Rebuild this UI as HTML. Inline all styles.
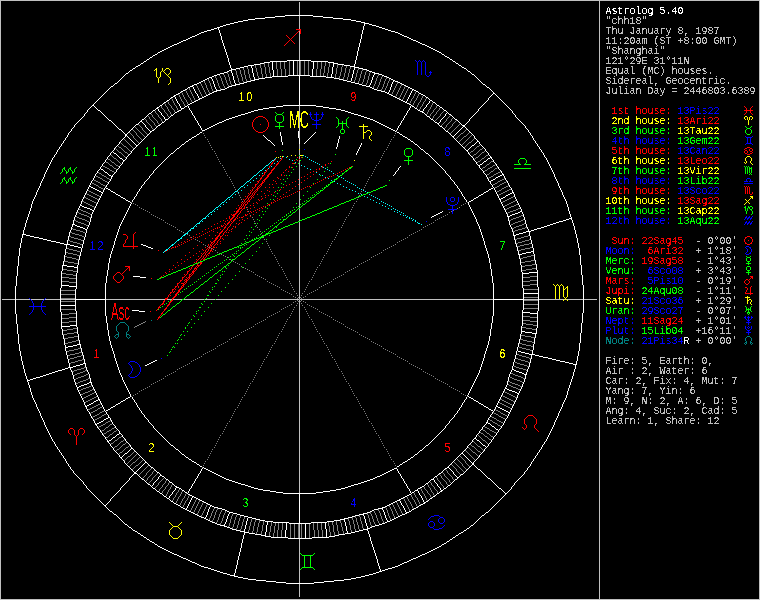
<!DOCTYPE html>
<html lang="en"><head><meta charset="utf-8"><title>Astrolog 5.40 - chh18</title>
<style>
html,body{margin:0;padding:0;background:#000;}
body{width:760px;height:600px;overflow:hidden;}
svg{display:block;}
.px path{fill:none;stroke-width:1;shape-rendering:crispEdges;}
.t{font-family:"Liberation Mono",monospace;font-size:10px;white-space:pre;}
.h{font-family:"Liberation Sans",sans-serif;font-size:12.5px;letter-spacing:2.46px;}
.a{font-family:"Liberation Sans",sans-serif;font-size:23px;text-anchor:middle;}
</style></head><body>
<svg width="760" height="600" viewBox="0 0 760 600">
<rect width="760" height="600" fill="#000"/>
<defs><filter id="bin" x="0" y="0" width="100%" height="100%" filterUnits="userSpaceOnUse" color-interpolation-filters="sRGB"><feComponentTransfer><feFuncA type="discrete" tableValues="0 0 0 0 0 0 0 0 0 1 1 1 1 1 1 1 1 1 1 1"/></feComponentTransfer></filter><filter id="bin2" x="0" y="0" width="100%" height="100%" filterUnits="userSpaceOnUse" color-interpolation-filters="sRGB"><feComponentTransfer><feFuncA type="discrete" tableValues="0 1"/></feComponentTransfer></filter><filter id="bin3" x="0" y="0" width="100%" height="100%" filterUnits="userSpaceOnUse" color-interpolation-filters="sRGB"><feComponentTransfer><feFuncA type="discrete" tableValues="0 0 0 0 0 0 0 0 0 0 0 1 1 1 1 1 1 1 1 1"/></feComponentTransfer></filter></defs>
<g class="px" transform="translate(0,0.5)">
<path stroke="#ffffff" d="M0 0m285 15h28m-38 1h10m28 0h10m-58 1h10m48 0h10m-78 1h10m68 0h10m-95 1h7m88 0h8m-108 1h5m103 0h5m-118 1h5m113 0h5m-127 1h4m123 0h4m-135 1h4m130 0h5m-143 1h4m134 0h1m4 0h3m-149 1h3m138 0h1m7 0h4m-156 1h3m140 0h1m12 0h3m-162 1h3m143 0h1m15 0h3m-168 1h3m1 0h1m144 0h1m18 0h3m-174 1h3m4 0h1m144 0h1m21 0h3m-181 1h4m8 0h1m142 0h1m25 0h3m-187 1h3m12 0h1m142 0h1m28 0h4m-194 1h3m15 0h1m142 0h1m32 0h3m-199 1h2m19 0h1m141 0h1m35 0h2m-203 1h2m21 0h1m140 0h1m38 0h2m-207 1h2m23 0h1m140 0h1m40 0h2m-212 1h3m26 0h1m139 0h1m42 0h3m-217 1h2m29 0h1m139 0h1m45 0h2m-221 1h2m31 0h1m139 0h1m47 0h2m-225 1h2m33 0h1m138 0h1m50 0h2m-230 1h3m36 0h1m137 0h1m52 0h3m-235 1h2m39 0h1m137 0h1m55 0h2m-239 1h2m41 0h1m137 0h1m57 0h2m-243 1h2m44 0h1m135 0h1m60 0h2m-248 1h3m46 0h1m135 0h1m62 0h3m-253 1h2m49 0h1m135 0h1m65 0h2m-257 1h2m52 0h1m134 0h1m67 0h2m-261 1h2m54 0h1m133 0h1m70 0h2m-265 1h2m56 0h1m133 0h1m72 0h2m-269 1h2m59 0h1m132 0h1m74 0h2m-273 1h2m61 0h1m132 0h1m76 0h2m-277 1h2m63 0h1m131 0h1m79 0h2m-281 1h2m66 0h1m130 0h1m81 0h2m-284 1h1m68 0h1m130 0h1m83 0h1m-287 1h2m69 0h1m130 0h1m84 0h2m-291 1h2m72 0h1m129 0h1m86 0h1m-293 1h1m74 0h1m128 0h1m88 0h2m-297 1h2m75 0h1m128 0h1m90 0h2m-300 1h1m78 0h1m127 0h1m92 0h1m-303 1h2m79 0h1m127 0h1m93 0h2m-306 1h1m81 0h1m58 0h24m44 0h1m96 0h1m-309 1h2m82 0h1m41 0h17m6 0h1m17 0h17m27 0h1m97 0h2m-312 1h1m85 0h1m34 0h6m2 0h1m20 0h1m19 0h1m14 0h6m21 0h1m99 0h1m-315 1h2m86 0h1m30 0h4m8 0h1m20 0h1m19 0h1m19 0h5m17 0h1m100 0h2m-318 1h1m88 0h1m24 0h6m12 0h1m20 0h1m19 0h1m19 0h1m4 0h6m10 0h1m103 0h1m-321 1h2m90 0h1m17 0h6m18 0h1m20 0h1m19 0h1m19 0h1m10 0h6m4 0h1m104 0h2m-325 1h2m92 0h1m13 0h4m3 0h1m20 0h1m20 0h1m19 0h1m19 0h1m16 0h5m106 0h1m-327 1h1m94 0h1m9 0h4m7 0h1m20 0h1m20 0h1m19 0h1m18 0h1m21 0h5m103 0h2m-331 1h2m96 0h1m4 0h4m12 0h1m19 0h1m20 0h1m19 0h1m18 0h1m21 0h1m4 0h4m101 0h2m-334 1h1m98 0h5m16 0h1m19 0h1m20 0h1m18 0h1m19 0h1m21 0h1m8 0h4m99 0h1m-337 1h2m97 0h3m20 0h1m20 0h1m19 0h1m18 0h1m19 0h1m20 0h1m13 0h2m98 0h1m-339 1h1m97 0h2m2 0h1m20 0h1m20 0h1m19 0h1m18 0h1m19 0h1m20 0h1m15 0h3m96 0h2m-342 1h1m95 0h3m4 0h1m20 0h1m20 0h1m19 0h1m18 0h1m19 0h1m20 0h1m18 0h3m95 0h1m-345 1h2m92 0h4m8 0h1m20 0h1m19 0h1m19 0h1m18 0h1m19 0h1m20 0h1m20 0h5m92 0h1m-347 1h1m91 0h3m12 0h1m20 0h1m19 0h1m19 0h1m18 0h1m18 0h1m20 0h1m21 0h1m4 0h3m90 0h2m-350 1h1m89 0h3m15 0h1m20 0h1m19 0h1m14 0h22m2 0h1m18 0h1m20 0h1m20 0h1m8 0h2m90 0h1m-352 1h1m88 0h2m19 0h1m19 0h1m18 0h16m11 0h1m10 0h16m5 0h1m20 0h1m20 0h1m10 0h3m88 0h1m-354 1h1m86 0h3m21 0h1m20 0h1m10 0h7m27 0h1m26 0h8m18 0h1m19 0h1m14 0h2m87 0h1m-356 1h1m85 0h2m2 0h1m21 0h1m20 0h1m4 0h6m34 0h1m34 0h5m12 0h1m20 0h1m16 0h2m86 0h1m-358 1h1m84 0h2m5 0h1m20 0h1m20 0h5m40 0h1m39 0h4m8 0h1m20 0h1m18 0h2m85 0h1m-360 1h1m83 0h2m7 0h1m21 0h1m16 0h4m44 0h1m43 0h4m4 0h1m19 0h1m21 0h2m84 0h1m-362 1h1m82 0h2m10 0h1m20 0h1m12 0h4m48 0h1m47 0h4m20 0h1m21 0h1m1 0h3m82 0h1m-364 1h1m81 0h2m12 0h1m20 0h1m9 0h3m52 0h1m51 0h4m16 0h1m20 0h1m5 0h2m81 0h1m-367 1h2m80 0h2m14 0h1m21 0h1m4 0h4m55 0h1m55 0h4m11 0h1m21 0h1m7 0h2m80 0h1m-369 1h1m79 0h3m17 0h1m20 0h5m59 0h1m59 0h3m8 0h1m20 0h1m10 0h2m79 0h2m-372 1h1m78 0h2m20 0h1m17 0h4m63 0h1m62 0h4m3 0h1m21 0h1m12 0h2m79 0h1m-375 1h2m77 0h3m21 0h1m14 0h3m67 0h1m66 0h4m21 0h1m14 0h2m78 0h1m-377 1h1m77 0h2m3 0h1m21 0h1m11 0h2m70 0h1m70 0h2m18 0h1m17 0h2m77 0h2m-380 1h1m77 0h1m5 0h1m21 0h1m9 0h2m72 0h1m72 0h2m16 0h1m19 0h2m77 0h1m-382 1h1m76 0h2m7 0h1m21 0h1m4 0h4m74 0h1m74 0h3m13 0h1m21 0h2m76 0h1m-384 1h1m75 0h2m9 0h1m21 0h5m78 0h1m77 0h4m8 0h1m22 0h1m1 0h2m75 0h1m-386 1h1m74 0h2m12 0h1m18 0h3m82 0h1m81 0h4m4 0h1m21 0h1m4 0h2m74 0h1m-388 1h1m74 0h1m14 0h1m16 0h2m85 0h1m85 0h2m1 0h1m22 0h1m6 0h1m74 0h1m-390 1h1m73 0h2m16 0h1m13 0h2m87 0h1m87 0h2m21 0h1m8 0h2m72 0h2m-392 1h1m72 0h2m19 0h1m10 0h2m89 0h1m89 0h2m19 0h1m10 0h2m69 0h1m2 0h1m-394 1h1m71 0h2m21 0h1m8 0h2m91 0h1m91 0h2m16 0h1m13 0h2m66 0h1m4 0h1m-396 1h1m71 0h2m23 0h1m5 0h2m93 0h1m93 0h2m14 0h1m15 0h1m64 0h1m6 0h1m-398 1h1m70 0h2m2 0h1m22 0h1m3 0h2m95 0h1m95 0h2m11 0h1m17 0h2m61 0h1m8 0h1m-400 1h1m70 0h1m4 0h1m23 0h3m97 0h1m97 0h2m9 0h1m19 0h1m59 0h1m10 0h1m-402 1h1m70 0h1m6 0h1m21 0h2m99 0h1m99 0h2m6 0h1m21 0h1m58 0h1m11 0h1m-404 1h1m69 0h2m7 0h1m19 0h2m101 0h1m101 0h2m4 0h1m22 0h2m55 0h1m13 0h1m-406 1h1m69 0h1m10 0h1m16 0h2m103 0h1m103 0h2m1 0h1m22 0h1m2 0h1m53 0h1m15 0h1m-408 1h1m68 0h2m11 0h1m14 0h2m105 0h1m105 0h2m22 0h1m3 0h2m50 0h1m17 0h1m-410 1h1m68 0h1m14 0h1m11 0h2m107 0h1m107 0h2m19 0h1m6 0h1m48 0h1m19 0h1m-412 1h1m68 0h1m16 0h1m8 0h2m109 0h1m109 0h2m16 0h1m8 0h1m46 0h1m21 0h1m-414 1h2m66 0h2m17 0h1m7 0h1m95 0h33m95 0h1m14 0h1m10 0h2m43 0h1m23 0h1m-416 1h1m2 0h1m64 0h1m20 0h1m4 0h2m1 0h1m87 0h7m33 0h7m87 0h1m1 0h2m12 0h1m12 0h1m41 0h1m25 0h1m-418 1h1m4 0h1m61 0h2m21 0h1m3 0h1m3 0h1m80 0h7m47 0h6m81 0h1m3 0h1m10 0h1m14 0h2m38 0h1m27 0h1m-420 1h1m6 0h1m59 0h2m23 0h3m5 0h1m73 0h6m60 0h7m73 0h1m5 0h2m7 0h1m17 0h1m36 0h1m29 0h1m-422 1h1m8 0h1m57 0h1m2 0h1m22 0h1m7 0h1m68 0h5m73 0h5m68 0h1m7 0h1m5 0h1m19 0h1m34 0h1m31 0h1m-424 1h1m10 0h2m53 0h2m3 0h1m20 0h2m9 0h1m63 0h4m83 0h4m63 0h1m9 0h2m3 0h1m20 0h2m32 0h1m32 0h1m-425 1h1m12 0h1m51 0h1m6 0h1m17 0h2m12 0h1m59 0h3m91 0h3m59 0h1m12 0h3m23 0h1m30 0h1m34 0h1m-427 1h1m14 0h1m49 0h1m8 0h1m14 0h2m14 0h1m56 0h3m97 0h3m56 0h1m14 0h2m23 0h1m28 0h1m35 0h1m-428 1h1m16 0h1m46 0h2m10 0h1m12 0h1m17 0h1m52 0h3m103 0h3m52 0h1m17 0h1m21 0h1m1 0h1m26 0h1m37 0h1m-430 1h1m18 0h1m44 0h1m12 0h1m11 0h1m18 0h1m48 0h4m109 0h4m48 0h1m18 0h1m19 0h1m3 0h2m23 0h1m39 0h1m-431 1h1m19 0h1m42 0h1m14 0h1m8 0h2m20 0h1m44 0h3m117 0h3m44 0h1m20 0h1m18 0h1m5 0h1m21 0h1m41 0h1m-433 1h1m21 0h1m40 0h1m16 0h1m6 0h1m23 0h1m40 0h3m123 0h3m40 0h1m22 0h2m15 0h1m7 0h1m19 0h1m42 0h1m-434 1h1m23 0h1m38 0h1m18 0h1m4 0h1m24 0h1m37 0h3m129 0h3m37 0h1m24 0h1m13 0h1m9 0h1m17 0h1m44 0h1m-436 1h1m25 0h1m36 0h1m19 0h1m3 0h1m26 0h1m33 0h3m135 0h3m33 0h1m26 0h1m11 0h1m11 0h1m15 0h1m46 0h1m-438 1h1m27 0h1m33 0h2m21 0h3m27 0h1m30 0h3m141 0h3m30 0h1m27 0h2m8 0h1m13 0h2m12 0h1m48 0h1m-440 1h1m29 0h2m30 0h1m23 0h1m30 0h1m27 0h2m147 0h2m27 0h1m30 0h1m6 0h1m16 0h1m11 0h1m49 0h1m-442 1h1m32 0h1m28 0h2m22 0h1m32 0h1m24 0h2m151 0h2m24 0h1m32 0h1m5 0h1m17 0h1m9 0h1m51 0h1m-444 1h1m34 0h1m26 0h1m2 0h1m19 0h2m33 0h1m21 0h3m155 0h2m22 0h1m33 0h2m2 0h1m19 0h1m7 0h1m53 0h1m-446 1h1m36 0h1m24 0h1m4 0h1m17 0h1m36 0h1m18 0h2m160 0h2m19 0h1m36 0h2m21 0h1m5 0h1m55 0h1m-448 1h1m38 0h1m21 0h2m6 0h1m15 0h1m37 0h1m16 0h2m164 0h2m17 0h1m37 0h1m22 0h1m3 0h1m57 0h1m-450 1h1m40 0h1m19 0h1m9 0h1m12 0h2m39 0h1m13 0h2m168 0h2m14 0h1m39 0h1m22 0h3m59 0h1m-451 1h1m41 0h1m17 0h1m10 0h1m11 0h1m42 0h1m10 0h2m172 0h2m11 0h1m41 0h2m21 0h2m60 0h1m-453 1h1m43 0h1m15 0h1m12 0h1m9 0h1m43 0h1m8 0h2m176 0h2m9 0h1m43 0h1m19 0h1m2 0h1m59 0h1m-454 1h1m45 0h1m13 0h1m14 0h1m7 0h1m45 0h1m5 0h2m180 0h2m6 0h1m45 0h1m17 0h1m4 0h1m59 0h1m-456 1h1m47 0h2m10 0h1m16 0h1m5 0h1m46 0h1m3 0h2m184 0h2m4 0h1m46 0h1m15 0h1m6 0h1m59 0h1m-457 1h1m49 0h1m8 0h1m18 0h1m2 0h2m48 0h3m188 0h2m1 0h1m48 0h1m13 0h1m8 0h1m59 0h1m-459 1h1m51 0h1m6 0h1m20 0h2m146 0h1m96 0h1m50 0h2m10 0h1m10 0h1m58 0h1m-460 1h1m53 0h1m4 0h1m21 0h1m49 0h2m78 0h1m17 0h1m16 0h1m81 0h2m49 0h1m8 0h1m12 0h1m58 0h1m-462 1h1m55 0h1m2 0h1m21 0h1m49 0h1m80 0h1m17 0h1m15 0h1m84 0h1m49 0h1m6 0h1m14 0h1m58 0h1m-463 1h1m56 0h2m21 0h1m48 0h2m81 0h1m17 0h1m14 0h1m86 0h2m48 0h1m4 0h1m16 0h1m57 0h1m-464 1h1m57 0h2m20 0h1m48 0h1m66 0h1m16 0h1m17 0h1m13 0h1m89 0h1m48 0h1m2 0h1m18 0h1m57 0h1m-465 1h1m57 0h1m1 0h1m18 0h1m47 0h2m68 0h1m16 0h1m16 0h1m12 0h1m27 0h1m63 0h2m47 0h2m20 0h1m57 0h1m-467 1h1m57 0h1m3 0h1m16 0h1m46 0h2m71 0h1m15 0h1m16 0h1m11 0h1m28 0h1m65 0h2m46 0h1m20 0h1m57 0h1m-468 1h1m57 0h1m5 0h1m14 0h1m46 0h1m74 0h1m14 0h1m17 0h1m9 0h1m29 0h1m67 0h1m46 0h1m20 0h1m57 0h1m-469 1h1m56 0h1m7 0h1m12 0h1m45 0h2m76 0h1m13 0h1m17 0h1m8 0h1m29 0h1m69 0h2m45 0h1m20 0h1m56 0h1m-470 1h1m56 0h1m9 0h1m10 0h1m45 0h1m79 0h2m11 0h1m17 0h1m7 0h1m30 0h1m71 0h1m45 0h1m20 0h1m56 0h1m-472 1h1m56 0h1m11 0h1m8 0h1m44 0h2m82 0h1m10 0h1m17 0h1m6 0h1m31 0h1m72 0h2m44 0h1m19 0h2m56 0h1m-473 1h1m55 0h1m13 0h1m6 0h1m44 0h1m85 0h1m10 0h1m16 0h1m5 0h1m32 0h1m74 0h1m44 0h1m17 0h1m2 0h1m55 0h1m-474 1h1m56 0h1m14 0h1m4 0h1m44 0h1m87 0h1m9 0h1m16 0h1m4 0h1m32 0h1m23 0h1m52 0h1m44 0h1m15 0h1m3 0h1m56 0h1m-476 1h1m56 0h1m16 0h1m2 0h1m43 0h2m89 0h1m8 0h1m54 0h1m23 0h1m53 0h2m43 0h1m13 0h1m5 0h1m56 0h1m-477 1h1m55 0h1m18 0h2m43 0h1m92 0h1m62 0h1m22 0h1m56 0h1m43 0h1m10 0h2m7 0h1m55 0h1m-478 1h1m55 0h1m19 0h1m43 0h1m156 0h1m22 0h1m57 0h1m43 0h1m8 0h1m10 0h1m55 0h1m-480 1h1m55 0h1m19 0h1m43 0h1m156 0h1m22 0h1m59 0h1m43 0h1m6 0h1m12 0h1m55 0h1m-481 1h1m54 0h1m19 0h1m42 0h2m157 0h1m22 0h1m60 0h1m43 0h1m4 0h1m14 0h1m54 0h1m-482 1h1m55 0h1m18 0h1m42 0h1m181 0h1m62 0h2m42 0h1m2 0h1m16 0h1m54 0h1m-484 1h1m55 0h1m18 0h1m42 0h1m182 0h1m64 0h1m42 0h2m17 0h1m55 0h1m-485 1h1m54 0h1m18 0h1m42 0h1m182 0h1m66 0h1m42 0h1m18 0h1m54 0h1m-486 1h1m54 0h1m1 0h1m17 0h1m41 0h1m183 0h1m67 0h1m42 0h1m18 0h1m54 0h1m-487 1h1m53 0h1m3 0h2m14 0h1m40 0h2m183 0h1m69 0h2m40 0h1m19 0h1m54 0h1m-489 1h1m54 0h1m5 0h1m12 0h1m40 0h1m185 0h1m71 0h1m40 0h1m18 0h1m54 0h1m-490 1h1m54 0h1m7 0h1m10 0h1m40 0h1m259 0h1m40 0h1m18 0h1m54 0h1m-491 1h1m53 0h1m9 0h1m8 0h1m40 0h1m261 0h1m40 0h1m18 0h1m53 0h1m-492 1h1m53 0h1m11 0h1m6 0h1m40 0h1m263 0h1m40 0h1m17 0h2m53 0h1m-494 1h1m54 0h1m12 0h2m4 0h1m39 0h1m265 0h1m40 0h1m14 0h2m1 0h1m54 0h1m-495 1h1m53 0h1m15 0h1m2 0h1m39 0h1m267 0h1m39 0h1m13 0h1m4 0h1m53 0h1m-496 1h1m53 0h1m17 0h2m39 0h1m269 0h1m39 0h1m11 0h1m6 0h1m53 0h1m-497 1h1m53 0h1m17 0h1m39 0h1m271 0h1m39 0h1m8 0h2m7 0h1m53 0h1m-498 1h1m53 0h1m17 0h1m39 0h1m273 0h1m39 0h1m6 0h1m10 0h1m53 0h1m-499 1h1m52 0h1m18 0h1m38 0h1m275 0h1m38 0h1m5 0h1m12 0h1m52 0h1m-500 1h1m52 0h1m18 0h1m38 0h1m277 0h1m38 0h1m2 0h2m14 0h1m52 0h1m-501 1h1m52 0h1m17 0h1m38 0h1m279 0h1m38 0h2m16 0h1m52 0h1m-502 1h1m52 0h1m17 0h1m38 0h1m241 0h1m39 0h1m38 0h1m17 0h1m52 0h1m-503 1h1m51 0h1m18 0h1m37 0h1m241 0h1m41 0h1m37 0h1m18 0h1m51 0h1m-504 1h1m52 0h1m17 0h1m37 0h1m241 0h1m43 0h1m37 0h1m17 0h1m52 0h1m-505 1h1m51 0h1m1 0h2m14 0h1m37 0h1m242 0h1m44 0h1m37 0h1m17 0h1m51 0h1m-506 1h1m51 0h1m4 0h1m12 0h1m37 0h1m242 0h1m46 0h1m37 0h1m17 0h1m51 0h1m-507 1h1m50 0h1m6 0h1m11 0h1m36 0h1m242 0h1m48 0h1m37 0h1m17 0h1m50 0h1m-508 1h1m51 0h1m7 0h2m8 0h1m37 0h1m241 0h1m49 0h1m37 0h1m17 0h1m51 0h1m-509 1h1m50 0h1m10 0h1m6 0h1m37 0h1m242 0h1m50 0h1m37 0h1m17 0h1m50 0h1m-510 1h1m50 0h1m12 0h1m4 0h1m37 0h1m242 0h1m52 0h1m37 0h1m16 0h2m50 0h1m-511 1h1m50 0h1m13 0h2m1 0h1m37 0h1m242 0h1m54 0h1m37 0h1m13 0h2m1 0h1m50 0h1m-511 1h1m49 0h1m16 0h2m36 0h1m299 0h1m36 0h1m11 0h2m4 0h1m49 0h1m-512 1h1m50 0h1m16 0h1m37 0h1m300 0h1m36 0h1m8 0h2m6 0h1m50 0h1m-513 1h1m49 0h1m17 0h1m36 0h1m301 0h1m36 0h1m7 0h1m9 0h1m49 0h1m-514 1h1m50 0h1m16 0h1m36 0h1m303 0h1m36 0h1m4 0h2m10 0h1m50 0h1m-515 1h1m49 0h1m17 0h1m35 0h1m305 0h1m35 0h1m2 0h2m13 0h1m49 0h1m-516 1h1m49 0h1m17 0h1m35 0h1m307 0h1m35 0h2m16 0h1m49 0h1m-517 1h1m49 0h1m16 0h1m35 0h1m309 0h1m35 0h1m16 0h1m49 0h1m-518 1h1m49 0h1m17 0h1m35 0h1m309 0h1m35 0h1m17 0h1m49 0h1m-519 1h1m49 0h1m16 0h1m35 0h1m311 0h1m35 0h1m16 0h1m49 0h1m-519 1h1m48 0h1m16 0h1m35 0h1m313 0h1m35 0h1m16 0h1m48 0h1m-520 1h1m49 0h2m15 0h1m34 0h1m315 0h1m34 0h1m16 0h1m49 0h1m-521 1h1m48 0h1m2 0h2m12 0h1m35 0h1m315 0h1m35 0h1m16 0h1m48 0h1m-522 1h1m49 0h1m4 0h2m9 0h1m1 0h2m32 0h1m317 0h1m32 0h2m1 0h1m16 0h1m48 0h1m-523 1h1m48 0h1m7 0h2m7 0h1m3 0h2m29 0h1m319 0h1m29 0h2m3 0h1m16 0h1m48 0h1m-524 1h1m49 0h1m9 0h2m4 0h1m6 0h1m28 0h1m319 0h1m28 0h1m6 0h1m16 0h1m48 0h1m-525 1h1m48 0h1m12 0h2m2 0h1m7 0h2m25 0h1m321 0h1m25 0h2m7 0h1m16 0h1m48 0h1m-526 1h1m49 0h1m14 0h2m10 0h2m22 0h1m323 0h1m22 0h2m10 0h1m15 0h2m48 0h1m-527 1h1m48 0h1m16 0h1m12 0h1m21 0h1m323 0h1m21 0h1m12 0h1m13 0h2m1 0h1m48 0h1m-527 1h1m48 0h1m15 0h1m14 0h2m18 0h1m325 0h1m18 0h2m14 0h1m10 0h2m4 0h1m47 0h1m-528 1h1m48 0h1m16 0h1m16 0h2m16 0h1m325 0h1m16 0h2m16 0h1m8 0h2m6 0h1m48 0h1m-529 1h1m48 0h1m15 0h1m19 0h1m14 0h1m327 0h1m14 0h1m19 0h1m6 0h1m8 0h1m48 0h1m-530 1h1m48 0h1m16 0h1m20 0h2m11 0h1m329 0h1m11 0h2m20 0h1m4 0h2m10 0h1m48 0h1m-531 1h1m48 0h1m15 0h1m23 0h2m9 0h1m329 0h1m9 0h2m23 0h1m1 0h2m12 0h1m48 0h1m-532 1h1m48 0h1m16 0h1m25 0h1m7 0h1m331 0h1m7 0h1m25 0h2m15 0h1m48 0h1m-533 1h1m48 0h1m15 0h1m27 0h2m4 0h1m333 0h1m4 0h2m27 0h1m15 0h1m48 0h1m-534 1h1m48 0h1m16 0h1m29 0h2m2 0h1m333 0h1m2 0h2m29 0h1m16 0h1m48 0h1m-535 1h1m48 0h1m15 0h1m32 0h1m337 0h1m32 0h1m15 0h1m48 0h1m-535 1h1m48 0h1m15 0h1m33 0h1m336 0h1m32 0h1m16 0h1m47 0h1m-536 1h1m48 0h1m15 0h1m33 0h1m337 0h1m33 0h1m15 0h1m48 0h1m-537 1h1m48 0h2m14 0h1m33 0h1m338 0h1m32 0h1m16 0h1m47 0h1m-537 1h1m47 0h1m2 0h2m11 0h1m33 0h1m339 0h1m33 0h1m15 0h1m47 0h1m-537 1h1m47 0h1m4 0h3m8 0h1m33 0h1m340 0h1m32 0h1m16 0h1m47 0h1m-539 1h1m47 0h1m8 0h3m4 0h1m33 0h1m341 0h1m33 0h1m15 0h1m47 0h1m-539 1h1m47 0h1m11 0h2m2 0h1m33 0h1m342 0h1m32 0h1m16 0h1m46 0h1m-539 1h1m46 0h1m14 0h2m33 0h1m343 0h1m33 0h1m15 0h1m46 0h1m-540 1h1m47 0h1m15 0h1m33 0h1m314 0h1m29 0h1m32 0h1m14 0h2m47 0h1m-541 1h1m46 0h1m15 0h1m33 0h1m313 0h2m30 0h1m33 0h1m11 0h2m2 0h1m46 0h1m-541 1h1m46 0h1m15 0h1m33 0h1m311 0h2m33 0h1m32 0h1m8 0h3m4 0h1m46 0h1m-542 1h1m47 0h1m14 0h1m33 0h1m310 0h2m35 0h1m33 0h1m4 0h3m8 0h1m46 0h1m-543 1h1m46 0h1m15 0h1m33 0h1m308 0h2m38 0h1m32 0h1m2 0h2m11 0h1m46 0h1m-543 1h1m46 0h1m15 0h1m32 0h1m307 0h2m40 0h1m32 0h3m13 0h1m46 0h1m-544 1h1m46 0h1m16 0h1m32 0h1m306 0h1m43 0h1m32 0h1m15 0h1m46 0h1m-545 1h1m46 0h1m15 0h1m32 0h1m351 0h1m32 0h1m15 0h1m44 0h3m-545 1h1m46 0h1m15 0h1m32 0h1m352 0h1m31 0h1m15 0h1m41 0h3m2 0h1m-546 1h1m46 0h1m16 0h1m31 0h1m353 0h1m31 0h1m16 0h1m37 0h3m6 0h1m-547 1h1m46 0h1m16 0h1m31 0h1m353 0h1m32 0h1m15 0h1m33 0h4m9 0h1m-547 1h1m46 0h1m15 0h1m31 0h1m355 0h1m31 0h1m15 0h1m30 0h3m13 0h1m-548 1h1m47 0h1m15 0h1m31 0h1m355 0h1m31 0h1m15 0h1m27 0h3m17 0h1m-549 1h1m46 0h3m14 0h1m30 0h1m357 0h1m30 0h1m16 0h1m23 0h3m20 0h1m-549 1h1m46 0h1m2 0h2m11 0h1m31 0h1m357 0h1m31 0h1m15 0h1m20 0h3m23 0h1m-549 1h1m46 0h1m4 0h3m8 0h1m30 0h1m359 0h1m30 0h1m15 0h1m17 0h3m27 0h1m-551 1h1m46 0h1m8 0h3m4 0h1m31 0h1m359 0h1m31 0h1m15 0h1m13 0h3m30 0h1m-551 1h1m46 0h1m11 0h2m2 0h1m31 0h1m359 0h1m31 0h1m15 0h1m9 0h4m33 0h1m-551 1h1m46 0h1m13 0h2m31 0h1m361 0h1m31 0h1m15 0h1m5 0h3m37 0h1m-552 1h1m46 0h1m15 0h1m31 0h1m361 0h1m31 0h1m15 0h1m2 0h3m41 0h1m-553 1h1m46 0h1m15 0h1m31 0h1m361 0h1m31 0h1m13 0h5m44 0h1m-553 1h1m45 0h1m16 0h1m30 0h1m363 0h1m31 0h1m9 0h3m3 0h1m45 0h1m-553 1h1m45 0h1m15 0h1m31 0h1m363 0h1m31 0h1m5 0h4m6 0h1m45 0h1m-554 1h4m43 0h1m15 0h1m31 0h1m363 0h1m31 0h1m2 0h3m10 0h1m46 0h1m-555 1h1m3 0h4m39 0h1m15 0h1m30 0h1m365 0h1m30 0h3m13 0h1m46 0h1m-555 1h1m7 0h4m34 0h1m16 0h1m30 0h1m365 0h1m31 0h1m15 0h1m45 0h1m-555 1h1m11 0h5m29 0h1m15 0h1m31 0h1m365 0h1m31 0h1m15 0h1m45 0h1m-556 1h1m17 0h4m25 0h1m15 0h1m30 0h1m367 0h1m30 0h1m15 0h1m46 0h1m-557 1h1m21 0h4m21 0h1m15 0h1m30 0h1m367 0h1m30 0h1m15 0h1m46 0h1m-557 1h1m25 0h4m16 0h1m15 0h1m31 0h1m367 0h1m31 0h1m15 0h1m45 0h1m-557 1h1m29 0h5m11 0h1m15 0h1m30 0h1m369 0h1m30 0h1m15 0h1m45 0h1m-557 1h1m34 0h4m7 0h1m15 0h1m30 0h1m369 0h1m30 0h1m15 0h1m45 0h1m-558 1h1m39 0h4m3 0h1m15 0h1m30 0h1m369 0h1m30 0h1m15 0h1m46 0h1m-559 1h1m43 0h6m12 0h1m31 0h1m26 0h2m341 0h1m31 0h1m15 0h1m45 0h1m-559 1h1m45 0h1m3 0h4m8 0h1m30 0h1m29 0h3m339 0h1m30 0h1m15 0h1m45 0h1m-559 1h1m45 0h1m7 0h4m4 0h1m30 0h1m32 0h2m337 0h1m30 0h1m15 0h1m45 0h1m-559 1h1m45 0h1m11 0h3m1 0h1m30 0h1m34 0h3m334 0h1m31 0h1m14 0h1m45 0h1m-560 1h1m46 0h1m14 0h1m30 0h1m38 0h2m333 0h1m30 0h1m15 0h1m45 0h1m-561 1h1m45 0h1m15 0h1m30 0h1m373 0h1m30 0h1m15 0h1m45 0h1m-561 1h1m45 0h1m15 0h1m30 0h1m373 0h1m30 0h1m15 0h1m45 0h1m-561 1h1m45 0h1m15 0h1m29 0h1m375 0h1m30 0h1m12 0h3m45 0h1m-561 1h1m45 0h1m14 0h1m30 0h1m375 0h1m30 0h1m7 0h5m2 0h1m45 0h1m-561 1h1m45 0h1m14 0h1m30 0h1m375 0h1m30 0h1m3 0h4m7 0h1m45 0h1m-561 1h1m45 0h1m14 0h1m29 0h1m377 0h1m29 0h4m12 0h1m44 0h1m-561 1h1m44 0h1m15 0h1m29 0h1m377 0h1m30 0h1m14 0h1m45 0h1m-563 1h1m45 0h1m14 0h1m30 0h1m377 0h1m30 0h1m14 0h1m45 0h1m-563 1h1m45 0h1m14 0h1m30 0h1m377 0h1m30 0h1m14 0h1m45 0h1m-563 1h1m45 0h1m14 0h1m29 0h1m379 0h1m29 0h1m14 0h1m45 0h1m-563 1h1m45 0h1m14 0h1m29 0h1m379 0h1m30 0h1m13 0h1m45 0h1m-563 1h1m45 0h1m13 0h1m30 0h1m379 0h1m30 0h1m14 0h1m44 0h1m-563 1h1m44 0h1m14 0h1m30 0h1m379 0h1m30 0h1m14 0h1m44 0h1m-563 1h1m44 0h1m14 0h1m30 0h1m379 0h1m30 0h1m14 0h1m44 0h1m-563 1h1m44 0h1m14 0h1m29 0h1m381 0h1m29 0h1m14 0h1m44 0h1m-563 1h1m44 0h1m14 0h1m29 0h1m381 0h1m29 0h1m15 0h1m43 0h1m-563 1h1m43 0h5m10 0h1m30 0h1m381 0h1m30 0h1m14 0h1m44 0h1m-565 1h1m44 0h1m4 0h7m3 0h1m30 0h1m381 0h1m30 0h1m14 0h1m44 0h1m-565 1h1m44 0h1m11 0h4m30 0h1m381 0h1m30 0h1m14 0h1m44 0h1m-565 1h1m44 0h1m14 0h1m30 0h1m381 0h1m30 0h1m14 0h1m44 0h1m-565 1h1m44 0h1m14 0h1m30 0h1m382 0h1m29 0h1m14 0h1m44 0h1m-565 1h1m44 0h1m14 0h1m29 0h1m383 0h1m29 0h1m15 0h1m43 0h1m-565 1h1m43 0h1m15 0h1m29 0h1m383 0h1m29 0h1m15 0h1m43 0h1m-565 1h1m43 0h1m15 0h1m29 0h1m383 0h1m30 0h1m6 0h9m43 0h1m-565 1h1m43 0h1m14 0h1m30 0h1m383 0h1m30 0h7m8 0h1m43 0h1m-565 1h1m43 0h1m14 0h1m30 0h1m383 0h1m30 0h1m14 0h1m43 0h1m-565 1h1m43 0h1m14 0h1m30 0h1m383 0h1m30 0h1m14 0h1m44 0h1m-567 1h1m44 0h1m14 0h1m29 0h1m26 0h7m352 0h1m29 0h1m14 0h1m44 0h1m-567 1h1m44 0h1m14 0h1m29 0h1m33 0h6m346 0h1m29 0h1m14 0h1m44 0h1m-567 1h1m44 0h1m14 0h1m29 0h1m385 0h1m29 0h1m14 0h1m44 0h1m-567 1h1m44 0h1m14 0h1m29 0h1m385 0h1m29 0h1m14 0h1m44 0h1m-567 1h1m44 0h1m14 0h1m29 0h1m385 0h1m29 0h1m14 0h1m44 0h1m-567 1h1m44 0h1m14 0h1m29 0h1m385 0h1m29 0h1m14 0h1m44 0h1m-567 1h1m44 0h1m14 0h1m29 0h1m385 0h1m29 0h1m14 0h1m44 0h1m-567 1h1m44 0h1m14 0h1m28 0h1m387 0h1m28 0h1m14 0h1m44 0h1m-567 1h1m44 0h1m14 0h1m28 0h1m387 0h1m28 0h1m14 0h1m44 0h1m-567 1h1m44 0h8m7 0h1m28 0h1m387 0h1m28 0h1m14 0h1m45 0h1m-569 1h1m45 0h1m7 0h8m28 0h1m387 0h1m28 0h1m14 0h1m45 0h1m-569 1h1m45 0h1m14 0h1m28 0h1m387 0h1m28 0h1m15 0h1m44 0h1m-569 1h1m44 0h1m15 0h1m28 0h1m387 0h1m29 0h1m14 0h1m44 0h1m-569 1h1m44 0h1m14 0h1m29 0h1m387 0h1m29 0h1m14 0h1m44 0h1m-569 1h1m44 0h1m14 0h1m29 0h1m387 0h1m29 0h1m14 0h1m44 0h1m-569 1h1m44 0h1m14 0h1m29 0h1m387 0h1m29 0h1m14 0h1m44 0h1m-569 1h1m44 0h1m14 0h1m29 0h1m387 0h1m29 0h1m14 0h1m44 0h1m-569 1h1m44 0h1m14 0h1m29 0h1m387 0h1m29 0h16m44 0h1m-569 1h1m44 0h1m14 0h1m29 0h1m387 0h1m29 0h1m14 0h1m44 0h1m-569 1h1m44 0h1m14 0h1m29 0h1m387 0h1m29 0h1m14 0h1m44 0h1m-569 1h1m44 0h1m14 0h1m29 0h1m387 0h1m29 0h1m14 0h1m44 0h1m-569 1h1m44 0h1m14 0h1m29 0h1m387 0h1m29 0h1m14 0h1m44 0h1m-569 1h1m44 0h1m14 0h1m29 0h1m387 0h1m29 0h1m14 0h1m44 0h1m-569 1h1m44 0h1m14 0h31m387 0h31m14 0h1m44 0h1m-569 1h1m44 0h1m14 0h1m29 0h1m387 0h1m29 0h1m14 0h1m44 0h1m-569 1h1m44 0h1m14 0h1m29 0h1m387 0h1m29 0h1m14 0h1m44 0h1m-569 1h1m44 0h1m14 0h1m29 0h1m387 0h1m29 0h1m14 0h1m44 0h1m-569 1h1m44 0h1m14 0h1m29 0h1m387 0h1m29 0h1m14 0h1m44 0h1m-569 1h1m44 0h1m14 0h1m29 0h1m387 0h1m29 0h1m14 0h1m44 0h1m-569 1h1m44 0h16m29 0h1m387 0h1m29 0h1m14 0h1m44 0h1m-569 1h1m44 0h1m14 0h1m29 0h1m387 0h1m29 0h1m14 0h1m44 0h1m-569 1h1m44 0h1m14 0h1m29 0h1m387 0h1m29 0h1m14 0h1m44 0h1m-569 1h1m44 0h1m14 0h1m29 0h1m387 0h1m29 0h1m14 0h1m44 0h1m-569 1h1m44 0h1m14 0h1m29 0h1m387 0h1m29 0h1m14 0h1m44 0h1m-569 1h1m44 0h1m14 0h1m29 0h1m26 0h7m354 0h1m28 0h1m15 0h1m44 0h1m-569 1h1m44 0h1m15 0h1m28 0h1m33 0h6m348 0h1m28 0h1m14 0h1m45 0h1m-569 1h1m45 0h1m14 0h1m28 0h1m387 0h1m28 0h8m7 0h1m45 0h1m-569 1h1m45 0h1m14 0h1m28 0h1m387 0h1m28 0h1m7 0h8m44 0h1m-567 1h1m44 0h1m14 0h1m28 0h1m387 0h1m28 0h1m14 0h1m44 0h1m-567 1h1m44 0h1m14 0h1m28 0h1m387 0h1m28 0h1m14 0h1m44 0h1m-567 1h1m44 0h1m14 0h1m29 0h1m385 0h1m29 0h1m14 0h1m44 0h1m-567 1h1m44 0h1m14 0h1m29 0h1m385 0h1m29 0h1m14 0h1m44 0h1m-567 1h1m44 0h1m14 0h1m29 0h1m385 0h1m29 0h1m14 0h1m44 0h1m-567 1h1m44 0h1m14 0h1m29 0h1m385 0h1m29 0h1m14 0h1m44 0h1m-567 1h1m44 0h1m14 0h1m29 0h1m385 0h1m29 0h1m14 0h1m44 0h1m-567 1h1m44 0h1m14 0h1m29 0h1m385 0h1m29 0h1m14 0h1m44 0h1m-567 1h1m44 0h1m14 0h1m29 0h1m385 0h1m29 0h1m14 0h1m44 0h1m-567 1h1m44 0h1m14 0h1m30 0h1m383 0h1m30 0h1m14 0h1m43 0h1m-565 1h1m43 0h1m14 0h1m30 0h1m383 0h1m30 0h1m14 0h1m43 0h1m-565 1h1m43 0h1m8 0h7m30 0h1m383 0h1m30 0h1m14 0h1m43 0h1m-565 1h1m43 0h9m6 0h1m30 0h1m383 0h1m29 0h1m15 0h1m43 0h1m-565 1h1m43 0h1m15 0h1m29 0h1m383 0h1m29 0h1m15 0h1m43 0h1m-565 1h1m43 0h1m15 0h1m29 0h1m383 0h1m29 0h1m14 0h1m44 0h1m-565 1h1m44 0h1m14 0h1m29 0h1m382 0h1m30 0h1m14 0h1m44 0h1m-565 1h1m44 0h1m14 0h1m30 0h1m381 0h1m30 0h1m14 0h1m44 0h1m-565 1h1m44 0h1m14 0h1m30 0h1m381 0h1m30 0h4m11 0h1m44 0h1m-565 1h1m44 0h1m14 0h1m30 0h1m381 0h1m30 0h1m3 0h7m4 0h1m44 0h1m-565 1h1m44 0h1m14 0h1m30 0h1m381 0h1m30 0h1m10 0h5m43 0h1m-563 1h1m43 0h1m15 0h1m29 0h1m381 0h1m29 0h1m14 0h1m44 0h1m-563 1h1m44 0h1m14 0h1m29 0h1m381 0h1m29 0h1m14 0h1m44 0h1m-563 1h1m44 0h1m14 0h1m30 0h1m379 0h1m30 0h1m14 0h1m44 0h1m-563 1h1m44 0h1m14 0h1m30 0h1m379 0h1m30 0h1m14 0h1m44 0h1m-563 1h1m44 0h1m14 0h1m30 0h1m379 0h1m30 0h1m13 0h1m45 0h1m-563 1h1m45 0h1m13 0h1m30 0h1m379 0h1m29 0h1m14 0h1m45 0h1m-563 1h1m45 0h1m14 0h1m29 0h1m379 0h1m29 0h1m14 0h1m45 0h1m-563 1h1m45 0h1m14 0h1m30 0h1m377 0h1m30 0h1m14 0h1m45 0h1m-563 1h1m45 0h1m14 0h1m30 0h1m377 0h1m30 0h1m14 0h1m45 0h1m-563 1h1m45 0h1m14 0h1m30 0h1m377 0h1m29 0h1m15 0h1m44 0h1m-561 1h1m44 0h1m12 0h4m29 0h1m377 0h1m29 0h1m14 0h1m45 0h1m-561 1h1m45 0h1m7 0h4m3 0h1m30 0h1m375 0h1m30 0h1m14 0h1m45 0h1m-561 1h1m45 0h1m2 0h5m7 0h1m30 0h1m375 0h1m30 0h1m14 0h1m45 0h1m-561 1h1m45 0h3m12 0h1m30 0h1m375 0h1m29 0h1m15 0h1m45 0h1m-561 1h1m45 0h1m15 0h1m30 0h1m373 0h1m30 0h1m15 0h1m45 0h1m-561 1h1m45 0h1m15 0h1m30 0h1m373 0h1m30 0h1m15 0h1m45 0h1m-561 1h1m45 0h1m15 0h1m30 0h1m373 0h1m30 0h1m14 0h1m46 0h1m-560 1h1m45 0h1m14 0h1m31 0h1m371 0h1m30 0h1m1 0h3m11 0h1m45 0h1m-559 1h1m45 0h1m15 0h1m30 0h1m371 0h1m30 0h1m4 0h4m7 0h1m45 0h1m-559 1h1m45 0h1m15 0h1m30 0h1m371 0h1m30 0h1m8 0h4m3 0h1m45 0h1m-559 1h1m45 0h1m15 0h1m31 0h1m369 0h1m31 0h1m12 0h6m43 0h1m-559 1h1m46 0h1m15 0h1m30 0h1m369 0h1m30 0h1m15 0h1m3 0h4m39 0h1m-558 1h1m45 0h1m15 0h1m30 0h1m369 0h1m30 0h1m15 0h1m7 0h4m34 0h1m-557 1h1m45 0h1m15 0h1m30 0h1m369 0h1m30 0h1m15 0h1m11 0h5m29 0h1m-557 1h1m45 0h1m15 0h1m31 0h1m367 0h1m31 0h1m15 0h1m16 0h4m25 0h1m-557 1h1m46 0h1m15 0h1m30 0h1m367 0h1m30 0h1m15 0h1m21 0h4m21 0h1m-557 1h1m46 0h1m15 0h1m30 0h1m39 0h2m326 0h1m30 0h1m15 0h1m25 0h4m17 0h1m-556 1h1m45 0h1m15 0h1m31 0h1m36 0h2m327 0h1m31 0h1m15 0h1m29 0h5m11 0h1m-555 1h1m45 0h1m15 0h1m31 0h1m34 0h2m329 0h1m30 0h1m16 0h1m34 0h4m7 0h1m-555 1h1m46 0h1m13 0h3m30 0h1m32 0h2m331 0h1m30 0h1m15 0h1m39 0h4m3 0h1m-555 1h1m46 0h1m10 0h3m2 0h1m31 0h1m29 0h2m332 0h1m31 0h1m15 0h1m43 0h4m-554 1h1m45 0h1m6 0h4m5 0h1m31 0h1m27 0h2m334 0h1m31 0h1m15 0h1m45 0h1m-553 1h1m45 0h1m3 0h3m9 0h1m31 0h1m363 0h1m30 0h1m16 0h1m45 0h1m-553 1h1m44 0h5m13 0h1m31 0h1m361 0h1m31 0h1m15 0h1m46 0h1m-553 1h1m41 0h3m2 0h1m15 0h1m31 0h1m361 0h1m31 0h1m15 0h1m46 0h1m-552 1h1m37 0h3m5 0h1m15 0h1m31 0h1m361 0h1m31 0h2m13 0h1m46 0h1m-551 1h1m33 0h4m9 0h1m15 0h1m31 0h1m359 0h1m31 0h1m2 0h2m11 0h1m46 0h1m-551 1h1m30 0h3m13 0h1m15 0h1m31 0h1m359 0h1m31 0h1m4 0h3m8 0h1m46 0h1m-551 1h1m27 0h3m17 0h1m15 0h1m30 0h1m359 0h1m30 0h1m8 0h3m4 0h1m46 0h1m-549 1h1m23 0h3m20 0h1m15 0h1m31 0h1m357 0h1m31 0h1m11 0h2m2 0h1m46 0h1m-549 1h1m20 0h3m23 0h1m16 0h1m30 0h1m357 0h1m30 0h1m14 0h3m46 0h1m-549 1h1m17 0h3m27 0h1m15 0h1m31 0h1m355 0h1m31 0h1m15 0h1m47 0h1m-548 1h1m13 0h3m30 0h1m15 0h1m31 0h1m355 0h1m31 0h1m15 0h1m46 0h1m-547 1h1m9 0h4m33 0h1m15 0h1m32 0h1m353 0h1m31 0h1m16 0h1m46 0h1m-547 1h1m6 0h3m37 0h1m16 0h1m31 0h1m353 0h1m31 0h1m16 0h1m46 0h1m-546 1h1m2 0h3m41 0h1m15 0h1m31 0h1m352 0h1m32 0h1m15 0h1m46 0h1m-545 1h3m44 0h1m15 0h1m32 0h1m351 0h1m32 0h1m15 0h1m46 0h1m-545 1h1m46 0h1m15 0h1m32 0h1m350 0h1m32 0h1m16 0h1m46 0h1m-544 1h1m46 0h1m13 0h3m32 0h1m349 0h1m32 0h1m15 0h1m46 0h1m-543 1h1m46 0h1m11 0h2m2 0h1m32 0h1m348 0h1m33 0h1m15 0h1m46 0h1m-543 1h1m46 0h1m8 0h3m4 0h1m33 0h1m347 0h1m33 0h1m14 0h1m47 0h1m-542 1h1m46 0h1m4 0h3m8 0h1m32 0h1m346 0h1m33 0h1m15 0h1m46 0h1m-541 1h1m46 0h1m2 0h2m11 0h1m33 0h1m345 0h1m33 0h1m15 0h1m46 0h1m-541 1h1m47 0h2m14 0h1m32 0h1m344 0h1m33 0h1m15 0h1m47 0h1m-540 1h1m46 0h1m15 0h1m33 0h1m343 0h1m33 0h2m14 0h1m46 0h1m-539 1h1m46 0h1m16 0h1m32 0h1m342 0h1m33 0h1m2 0h2m11 0h1m47 0h1m-539 1h1m47 0h1m15 0h1m33 0h1m341 0h1m33 0h1m4 0h3m8 0h1m47 0h1m-539 1h1m47 0h1m16 0h1m32 0h1m340 0h1m33 0h1m8 0h3m4 0h1m47 0h1m-537 1h1m47 0h1m15 0h1m33 0h1m339 0h1m33 0h1m11 0h2m2 0h1m47 0h1m-537 1h1m47 0h1m16 0h1m32 0h1m338 0h1m33 0h1m14 0h2m48 0h1m-537 1h1m48 0h1m15 0h1m33 0h1m337 0h1m33 0h1m15 0h1m48 0h1m-536 1h1m47 0h1m16 0h1m32 0h1m336 0h1m33 0h1m15 0h1m48 0h1m-535 1h1m48 0h1m15 0h1m32 0h1m337 0h1m32 0h1m15 0h1m48 0h1m-535 1h1m48 0h1m16 0h1m29 0h2m2 0h1m333 0h1m2 0h2m29 0h1m16 0h1m48 0h1m-534 1h1m48 0h1m15 0h1m27 0h2m4 0h1m333 0h1m4 0h2m27 0h1m15 0h1m48 0h1m-533 1h1m48 0h1m15 0h2m25 0h1m7 0h1m331 0h1m7 0h1m25 0h1m16 0h1m48 0h1m-532 1h1m48 0h1m12 0h2m1 0h1m23 0h2m9 0h1m329 0h1m9 0h2m23 0h1m15 0h1m48 0h1m-531 1h1m48 0h1m10 0h2m4 0h1m20 0h2m11 0h1m329 0h1m11 0h2m20 0h1m16 0h1m48 0h1m-530 1h1m48 0h1m8 0h1m6 0h1m19 0h1m14 0h1m327 0h1m14 0h1m19 0h1m15 0h1m48 0h1m-529 1h1m48 0h1m6 0h2m8 0h1m16 0h2m16 0h1m325 0h1m16 0h2m16 0h1m16 0h1m48 0h1m-528 1h1m47 0h1m4 0h2m10 0h1m14 0h2m18 0h1m325 0h1m18 0h2m14 0h1m15 0h1m48 0h1m-527 1h1m48 0h1m1 0h2m13 0h1m12 0h1m21 0h1m323 0h1m21 0h1m12 0h1m16 0h1m48 0h1m-527 1h1m48 0h2m15 0h1m10 0h2m22 0h1m323 0h1m22 0h2m10 0h2m14 0h1m49 0h1m-526 1h1m48 0h1m16 0h1m7 0h2m25 0h1m321 0h1m25 0h2m7 0h1m2 0h2m12 0h1m48 0h1m-525 1h1m48 0h1m16 0h1m6 0h1m28 0h1m319 0h1m28 0h1m6 0h1m4 0h2m9 0h1m49 0h1m-524 1h1m48 0h1m16 0h1m3 0h2m29 0h1m319 0h1m29 0h2m3 0h1m7 0h2m7 0h1m48 0h1m-523 1h1m48 0h1m16 0h1m1 0h2m32 0h1m317 0h1m32 0h2m1 0h1m9 0h2m4 0h1m49 0h1m-522 1h1m48 0h1m16 0h1m35 0h1m315 0h1m35 0h1m12 0h2m2 0h1m48 0h1m-521 1h1m49 0h1m16 0h1m34 0h1m315 0h1m34 0h1m15 0h2m49 0h1m-520 1h1m48 0h1m16 0h1m35 0h1m313 0h1m35 0h1m16 0h1m48 0h1m-519 1h1m49 0h1m16 0h1m35 0h1m311 0h1m35 0h1m16 0h1m49 0h1m-519 1h1m49 0h1m17 0h1m35 0h1m309 0h1m35 0h1m17 0h1m49 0h1m-518 1h1m49 0h1m16 0h1m35 0h1m309 0h1m35 0h1m16 0h1m49 0h1m-517 1h1m49 0h1m16 0h2m35 0h1m307 0h1m35 0h1m17 0h1m49 0h1m-516 1h1m49 0h1m13 0h2m2 0h1m35 0h1m305 0h1m35 0h1m17 0h1m49 0h1m-515 1h1m50 0h1m10 0h2m4 0h1m36 0h1m303 0h1m36 0h1m16 0h1m50 0h1m-514 1h1m49 0h1m9 0h1m7 0h1m36 0h1m301 0h1m36 0h1m17 0h1m49 0h1m-513 1h1m50 0h1m6 0h2m8 0h1m36 0h1m300 0h1m37 0h1m16 0h1m50 0h1m-512 1h1m49 0h1m4 0h2m11 0h1m36 0h1m299 0h1m36 0h2m16 0h1m49 0h1m-511 1h1m50 0h1m1 0h2m13 0h1m37 0h1m297 0h1m37 0h1m1 0h2m13 0h1m50 0h1m-511 1h1m50 0h2m16 0h1m37 0h1m295 0h1m37 0h1m4 0h1m12 0h1m50 0h1m-510 1h1m50 0h1m17 0h1m37 0h1m293 0h1m37 0h1m6 0h1m10 0h1m50 0h1m-509 1h1m51 0h1m17 0h1m37 0h1m291 0h1m37 0h1m8 0h2m7 0h1m51 0h1m-508 1h1m50 0h1m17 0h1m37 0h1m291 0h1m36 0h1m11 0h1m6 0h1m50 0h1m-507 1h1m51 0h1m17 0h1m37 0h1m289 0h1m37 0h1m12 0h1m4 0h1m51 0h1m-506 1h1m51 0h1m17 0h1m37 0h1m287 0h1m37 0h1m14 0h2m1 0h1m51 0h1m-505 1h1m52 0h1m17 0h1m37 0h1m285 0h1m37 0h1m17 0h1m52 0h1m-504 1h1m51 0h1m18 0h1m37 0h1m283 0h1m37 0h1m18 0h1m51 0h1m-503 1h1m52 0h1m17 0h1m38 0h1m281 0h1m38 0h1m17 0h1m52 0h1m-502 1h1m52 0h1m16 0h2m38 0h1m279 0h1m38 0h1m17 0h1m52 0h1m-501 1h1m52 0h1m14 0h2m2 0h1m38 0h1m277 0h1m38 0h1m18 0h1m52 0h1m-500 1h1m52 0h1m12 0h1m5 0h1m38 0h1m275 0h1m38 0h1m18 0h1m52 0h1m-499 1h1m53 0h1m10 0h1m6 0h1m39 0h1m273 0h1m39 0h1m17 0h1m53 0h1m-498 1h1m53 0h1m7 0h2m8 0h1m39 0h1m271 0h1m39 0h1m17 0h1m53 0h1m-497 1h1m53 0h1m6 0h1m11 0h1m39 0h1m269 0h1m39 0h2m17 0h1m53 0h1m-496 1h1m53 0h1m4 0h1m13 0h1m39 0h1m267 0h1m39 0h1m2 0h1m15 0h1m53 0h1m-495 1h1m54 0h1m1 0h2m14 0h1m40 0h1m265 0h1m39 0h1m4 0h2m12 0h1m54 0h1m-494 1h1m53 0h2m17 0h1m40 0h1m263 0h1m40 0h1m6 0h1m11 0h1m53 0h1m-492 1h1m53 0h1m18 0h1m40 0h1m261 0h1m40 0h1m8 0h1m9 0h1m53 0h1m-491 1h1m54 0h1m18 0h1m40 0h1m259 0h1m40 0h1m10 0h1m7 0h1m54 0h1m-490 1h1m54 0h1m18 0h1m40 0h1m257 0h1m40 0h1m12 0h1m5 0h1m54 0h1m-489 1h1m54 0h1m19 0h1m40 0h2m253 0h2m40 0h1m14 0h2m3 0h1m53 0h1m-487 1h1m54 0h1m18 0h1m42 0h1m251 0h1m41 0h1m17 0h1m1 0h1m54 0h1m-486 1h1m54 0h1m18 0h1m42 0h1m249 0h1m42 0h1m18 0h1m54 0h1m-485 1h1m55 0h1m17 0h2m42 0h1m247 0h1m42 0h1m18 0h1m55 0h1m-484 1h1m54 0h1m16 0h1m2 0h1m42 0h2m244 0h1m42 0h1m18 0h1m55 0h1m-482 1h1m54 0h1m14 0h1m4 0h1m43 0h1m241 0h2m42 0h1m19 0h1m54 0h1m-481 1h1m55 0h1m12 0h1m6 0h1m43 0h1m239 0h1m43 0h1m19 0h1m55 0h1m-480 1h1m55 0h1m10 0h1m8 0h1m43 0h1m237 0h1m43 0h1m19 0h1m55 0h1m-478 1h1m55 0h1m7 0h2m10 0h1m43 0h1m235 0h1m43 0h2m18 0h1m55 0h1m-477 1h1m56 0h1m5 0h1m13 0h1m43 0h2m231 0h2m43 0h1m2 0h1m16 0h1m56 0h1m-476 1h1m56 0h1m3 0h1m15 0h1m44 0h1m229 0h1m44 0h1m4 0h1m14 0h1m56 0h1m-474 1h1m55 0h1m2 0h1m17 0h1m44 0h1m227 0h1m44 0h1m6 0h1m13 0h1m55 0h1m-473 1h1m56 0h2m19 0h1m44 0h2m223 0h2m44 0h1m8 0h1m11 0h1m56 0h1m-472 1h1m56 0h1m20 0h1m45 0h1m221 0h1m45 0h1m10 0h1m9 0h1m56 0h1m-470 1h1m56 0h1m20 0h1m45 0h2m217 0h2m45 0h1m12 0h1m7 0h1m56 0h1m-469 1h1m57 0h1m20 0h1m46 0h1m215 0h1m46 0h1m14 0h1m5 0h1m57 0h1m-468 1h1m57 0h1m20 0h1m46 0h2m211 0h2m46 0h1m16 0h1m3 0h1m57 0h1m-467 1h1m57 0h1m20 0h2m47 0h2m207 0h2m47 0h1m18 0h1m1 0h1m57 0h1m-465 1h1m57 0h1m18 0h1m2 0h1m48 0h1m205 0h1m48 0h1m20 0h2m57 0h1m-464 1h1m57 0h1m16 0h1m4 0h1m48 0h2m201 0h2m48 0h1m21 0h2m56 0h1m-463 1h1m58 0h1m14 0h1m6 0h1m49 0h1m199 0h1m49 0h1m21 0h1m2 0h1m55 0h1m-462 1h1m58 0h1m12 0h1m8 0h1m49 0h2m195 0h2m49 0h1m21 0h1m4 0h1m53 0h1m-460 1h1m58 0h1m10 0h1m10 0h2m50 0h1m243 0h2m20 0h1m6 0h1m51 0h1m-459 1h1m59 0h1m8 0h1m13 0h1m48 0h1m1 0h2m188 0h3m48 0h2m2 0h1m18 0h1m8 0h1m49 0h1m-457 1h1m59 0h1m6 0h1m15 0h1m46 0h1m4 0h2m184 0h2m3 0h1m46 0h1m5 0h1m16 0h1m10 0h2m47 0h1m-456 1h1m59 0h1m4 0h1m17 0h1m45 0h1m6 0h2m180 0h2m5 0h1m45 0h1m7 0h1m14 0h1m13 0h1m45 0h1m-454 1h1m59 0h1m2 0h1m19 0h1m43 0h1m9 0h2m176 0h2m8 0h1m43 0h1m9 0h1m12 0h1m15 0h1m43 0h1m-453 1h1m60 0h2m21 0h2m41 0h1m11 0h2m172 0h2m10 0h1m42 0h1m11 0h1m10 0h1m17 0h1m41 0h1m-451 1h1m59 0h3m22 0h1m39 0h1m14 0h2m168 0h2m13 0h1m39 0h2m12 0h1m9 0h1m19 0h1m40 0h1m-450 1h1m57 0h1m3 0h1m22 0h1m37 0h1m17 0h2m164 0h2m16 0h1m37 0h1m15 0h1m6 0h2m21 0h1m38 0h1m-448 1h1m55 0h1m5 0h1m21 0h2m36 0h1m19 0h2m160 0h2m18 0h1m36 0h1m17 0h1m4 0h1m24 0h1m36 0h1m-446 1h1m53 0h1m7 0h1m19 0h1m2 0h2m33 0h1m22 0h2m155 0h3m21 0h1m33 0h2m19 0h1m2 0h1m26 0h1m34 0h1m-444 1h1m51 0h1m9 0h1m17 0h1m5 0h1m32 0h1m24 0h2m151 0h2m24 0h1m32 0h1m22 0h2m28 0h1m32 0h1m-442 1h1m49 0h1m11 0h1m16 0h1m6 0h1m30 0h1m27 0h2m147 0h2m27 0h1m30 0h1m23 0h1m30 0h2m29 0h1m-440 1h1m48 0h1m12 0h2m13 0h1m8 0h2m27 0h1m30 0h3m141 0h3m30 0h1m27 0h3m21 0h2m33 0h1m27 0h1m-438 1h1m46 0h1m15 0h1m11 0h1m11 0h1m26 0h1m33 0h3m135 0h3m33 0h1m26 0h1m3 0h1m19 0h1m36 0h1m25 0h1m-436 1h1m44 0h1m17 0h1m9 0h1m13 0h1m24 0h1m37 0h3m129 0h3m37 0h1m24 0h1m4 0h1m18 0h1m38 0h1m23 0h1m-434 1h1m42 0h1m19 0h1m7 0h1m15 0h2m22 0h1m40 0h3m123 0h3m40 0h1m23 0h1m6 0h1m16 0h1m40 0h1m21 0h1m-433 1h1m41 0h1m21 0h1m5 0h1m18 0h1m20 0h1m44 0h3m117 0h3m44 0h1m20 0h2m8 0h1m14 0h1m42 0h1m19 0h1m-431 1h1m39 0h1m23 0h2m3 0h1m19 0h1m18 0h1m48 0h4m109 0h4m48 0h1m18 0h1m11 0h1m12 0h1m44 0h1m18 0h1m-430 1h1m37 0h1m26 0h1m1 0h1m21 0h1m17 0h1m52 0h3m103 0h3m52 0h1m17 0h1m12 0h1m10 0h2m46 0h1m16 0h1m-428 1h1m35 0h1m28 0h1m23 0h2m14 0h1m56 0h3m97 0h3m56 0h1m14 0h2m14 0h1m8 0h1m49 0h1m14 0h1m-427 1h1m34 0h1m30 0h1m23 0h3m12 0h1m59 0h3m91 0h3m59 0h1m12 0h2m17 0h1m6 0h1m51 0h1m12 0h1m-425 1h1m32 0h1m32 0h2m20 0h1m3 0h2m9 0h1m63 0h4m83 0h4m63 0h1m9 0h2m20 0h1m3 0h2m53 0h2m10 0h1m-424 1h1m31 0h1m34 0h1m19 0h1m5 0h1m7 0h1m68 0h5m73 0h5m68 0h1m7 0h1m22 0h1m2 0h1m57 0h1m8 0h1m-422 1h1m29 0h1m36 0h1m17 0h1m7 0h2m5 0h1m73 0h7m60 0h6m73 0h1m5 0h3m23 0h2m59 0h1m6 0h1m-420 1h1m27 0h1m38 0h2m14 0h1m10 0h1m3 0h1m81 0h6m47 0h7m80 0h1m3 0h1m3 0h1m21 0h2m61 0h1m4 0h1m-418 1h1m25 0h1m41 0h1m12 0h1m12 0h2m1 0h1m87 0h7m33 0h7m87 0h1m1 0h2m4 0h1m20 0h1m64 0h1m2 0h1m-416 1h1m23 0h1m43 0h2m10 0h1m14 0h1m95 0h33m95 0h1m7 0h1m17 0h2m66 0h2m-414 1h1m21 0h1m46 0h1m8 0h1m16 0h2m109 0h1m109 0h2m8 0h1m16 0h1m68 0h1m-412 1h1m19 0h1m48 0h1m6 0h1m19 0h2m107 0h1m107 0h2m11 0h1m14 0h1m68 0h1m-410 1h1m17 0h1m50 0h2m3 0h1m22 0h2m105 0h1m105 0h2m14 0h1m11 0h2m68 0h1m-408 1h1m15 0h1m53 0h1m2 0h1m22 0h1m1 0h2m103 0h1m103 0h2m16 0h1m10 0h1m69 0h1m-406 1h1m13 0h1m55 0h2m22 0h1m4 0h2m101 0h1m101 0h2m19 0h1m7 0h2m69 0h1m-404 1h1m11 0h1m58 0h1m21 0h1m6 0h2m99 0h1m99 0h2m21 0h1m6 0h1m70 0h1m-402 1h1m10 0h1m59 0h1m19 0h1m9 0h2m97 0h1m97 0h3m23 0h1m4 0h1m70 0h1m-400 1h1m8 0h1m61 0h2m17 0h1m11 0h2m95 0h1m95 0h2m3 0h1m22 0h1m2 0h2m70 0h1m-398 1h1m6 0h1m64 0h1m15 0h1m14 0h2m93 0h1m93 0h2m5 0h1m23 0h2m71 0h1m-396 1h1m4 0h1m66 0h2m13 0h1m16 0h2m91 0h1m91 0h2m8 0h1m21 0h2m71 0h1m-394 1h1m2 0h1m69 0h2m10 0h1m19 0h2m89 0h1m89 0h2m10 0h1m19 0h2m72 0h1m-392 1h2m72 0h2m8 0h1m21 0h2m87 0h1m87 0h2m13 0h1m16 0h2m73 0h1m-390 1h1m74 0h1m6 0h1m22 0h1m1 0h2m85 0h1m85 0h2m16 0h1m14 0h1m74 0h1m-388 1h1m74 0h2m4 0h1m21 0h1m4 0h4m81 0h1m82 0h3m18 0h1m12 0h2m74 0h1m-386 1h1m75 0h2m1 0h1m22 0h1m8 0h4m77 0h1m78 0h5m21 0h1m9 0h2m75 0h1m-384 1h1m76 0h2m21 0h1m13 0h3m74 0h1m74 0h4m4 0h1m21 0h1m7 0h2m76 0h1m-382 1h1m77 0h2m19 0h1m16 0h2m72 0h1m72 0h2m9 0h1m21 0h1m5 0h1m77 0h1m-380 1h2m77 0h2m17 0h1m18 0h2m70 0h1m70 0h2m11 0h1m21 0h1m3 0h2m77 0h1m-377 1h1m78 0h2m14 0h1m21 0h4m66 0h1m67 0h3m14 0h1m21 0h3m77 0h2m-375 1h1m79 0h2m12 0h1m21 0h1m3 0h4m62 0h1m63 0h4m17 0h1m20 0h2m78 0h1m-372 1h2m79 0h2m10 0h1m20 0h1m8 0h3m59 0h1m59 0h5m20 0h1m17 0h3m79 0h1m-369 1h1m80 0h2m7 0h1m21 0h1m11 0h4m55 0h1m55 0h4m4 0h1m21 0h1m14 0h2m80 0h2m-367 1h1m81 0h2m5 0h1m20 0h1m16 0h4m51 0h1m52 0h3m9 0h1m20 0h1m12 0h2m81 0h1m-364 1h1m82 0h3m1 0h1m21 0h1m20 0h4m47 0h1m48 0h4m12 0h1m20 0h1m10 0h2m82 0h1m-362 1h1m84 0h2m21 0h1m19 0h1m4 0h4m43 0h1m44 0h4m16 0h1m21 0h1m7 0h2m83 0h1m-360 1h1m85 0h2m18 0h1m20 0h1m8 0h4m39 0h1m40 0h5m20 0h1m20 0h1m5 0h2m84 0h1m-358 1h1m86 0h2m16 0h1m20 0h1m12 0h5m34 0h1m34 0h6m4 0h1m20 0h1m21 0h1m2 0h2m85 0h1m-356 1h1m87 0h2m14 0h1m19 0h1m18 0h8m26 0h1m27 0h7m10 0h1m20 0h1m21 0h3m86 0h1m-354 1h1m88 0h3m10 0h1m20 0h1m20 0h1m5 0h16m10 0h1m11 0h16m18 0h1m19 0h1m19 0h2m88 0h1m-352 1h1m90 0h2m8 0h1m20 0h1m20 0h1m18 0h1m2 0h22m14 0h1m19 0h1m20 0h1m15 0h3m89 0h1m-350 1h2m90 0h3m4 0h1m21 0h1m20 0h1m18 0h1m18 0h1m19 0h1m19 0h1m20 0h1m12 0h3m91 0h1m-347 1h1m92 0h5m20 0h1m20 0h1m19 0h1m18 0h1m19 0h1m19 0h1m20 0h1m8 0h4m92 0h2m-345 1h1m95 0h3m18 0h1m20 0h1m19 0h1m18 0h1m19 0h1m20 0h1m20 0h1m4 0h3m95 0h1m-342 1h2m96 0h3m15 0h1m20 0h1m19 0h1m18 0h1m19 0h1m20 0h1m20 0h1m2 0h2m97 0h1m-339 1h1m98 0h2m13 0h1m20 0h1m19 0h1m18 0h1m19 0h1m20 0h1m20 0h3m97 0h2m-337 1h1m99 0h4m8 0h1m21 0h1m19 0h1m18 0h1m20 0h1m19 0h1m16 0h5m98 0h1m-334 1h2m101 0h4m4 0h1m21 0h1m18 0h1m19 0h1m20 0h1m19 0h1m12 0h4m4 0h1m96 0h2m-331 1h2m103 0h5m21 0h1m18 0h1m19 0h1m20 0h1m20 0h1m7 0h4m9 0h1m94 0h1m-327 1h1m106 0h5m16 0h1m19 0h1m19 0h1m20 0h1m20 0h1m3 0h4m13 0h1m92 0h2m-325 1h2m104 0h1m4 0h6m10 0h1m19 0h1m19 0h1m20 0h1m18 0h6m17 0h1m90 0h2m-321 1h1m103 0h1m10 0h6m4 0h1m19 0h1m19 0h1m20 0h1m12 0h6m24 0h1m88 0h1m-318 1h2m100 0h1m17 0h5m19 0h1m19 0h1m20 0h1m8 0h4m30 0h1m86 0h2m-315 1h1m99 0h1m21 0h6m14 0h1m19 0h1m20 0h1m2 0h6m34 0h1m85 0h1m-312 1h2m97 0h1m27 0h17m17 0h1m6 0h17m41 0h1m82 0h2m-309 1h1m96 0h1m44 0h24m58 0h1m81 0h1m-306 1h2m93 0h1m127 0h1m79 0h2m-303 1h1m92 0h1m127 0h1m78 0h1m-300 1h2m90 0h1m128 0h1m75 0h2m-297 1h2m88 0h1m128 0h1m74 0h1m-293 1h1m86 0h1m129 0h1m72 0h2m-291 1h2m84 0h1m130 0h1m69 0h2m-287 1h1m83 0h1m130 0h1m68 0h1m-284 1h2m81 0h1m130 0h1m66 0h2m-281 1h2m79 0h1m131 0h1m63 0h2m-277 1h2m76 0h1m132 0h1m61 0h2m-273 1h2m74 0h1m132 0h1m59 0h2m-269 1h2m72 0h1m133 0h1m56 0h2m-265 1h2m70 0h1m133 0h1m54 0h2m-261 1h2m67 0h1m134 0h1m52 0h2m-257 1h2m65 0h1m135 0h1m49 0h2m-253 1h3m62 0h1m135 0h1m46 0h3m-248 1h2m60 0h1m135 0h1m44 0h2m-243 1h2m57 0h1m137 0h1m41 0h2m-239 1h2m55 0h1m137 0h1m39 0h2m-235 1h3m52 0h1m137 0h1m36 0h3m-230 1h2m50 0h1m138 0h1m33 0h2m-225 1h2m47 0h1m139 0h1m31 0h2m-221 1h2m45 0h1m139 0h1m29 0h2m-217 1h3m42 0h1m139 0h1m26 0h3m-212 1h2m40 0h1m140 0h1m23 0h2m-207 1h2m38 0h1m140 0h1m21 0h2m-203 1h2m35 0h1m141 0h1m19 0h2m-199 1h3m32 0h1m142 0h1m15 0h3m-194 1h4m28 0h1m142 0h1m12 0h3m-187 1h3m25 0h1m142 0h1m8 0h4m-181 1h3m21 0h1m144 0h1m4 0h3m-174 1h3m18 0h1m144 0h1m1 0h3m-168 1h3m15 0h1m143 0h3m-162 1h3m12 0h1m140 0h3m-156 1h4m7 0h1m138 0h3m-149 1h3m4 0h1m134 0h4m-143 1h5m130 0h4m-135 1h4m123 0h4m-127 1h5m113 0h5m-118 1h5m103 0h5m-108 1h8m88 0h7m-95 1h10m68 0h10m-78 1h10m48 0h10m-58 1h10m28 0h10m-38 1h28"/>
<path stroke="#c0c0c0" d="M0 0m0 0h760m-760 1h1m598 0h1m159 0h1m-760 1h1m298 0h1m299 0h1m159 0h1m-760 1h1m298 0h1m299 0h1m159 0h1m-760 1h1m298 0h1m299 0h1m159 0h1m-760 1h1m298 0h1m299 0h1m159 0h1m-760 1h1m298 0h1m299 0h1m159 0h1m-760 1h1m298 0h1m299 0h1m159 0h1m-760 1h1m298 0h1m299 0h1m159 0h1m-760 1h1m298 0h1m299 0h1m159 0h1m-760 1h1m298 0h1m299 0h1m159 0h1m-760 1h1m298 0h1m299 0h1m159 0h1m-760 1h1m298 0h1m299 0h1m159 0h1m-760 1h1m298 0h1m299 0h1m159 0h1m-760 1h1m298 0h1m299 0h1m159 0h1m-760 1h1m598 0h1m159 0h1m-760 1h1m298 0h1m299 0h1m159 0h1m-760 1h1m298 0h1m299 0h1m159 0h1m-760 1h1m298 0h1m299 0h1m159 0h1m-760 1h1m298 0h1m299 0h1m159 0h1m-760 1h1m298 0h1m299 0h1m159 0h1m-760 1h1m298 0h1m299 0h1m159 0h1m-760 1h1m298 0h1m299 0h1m159 0h1m-760 1h1m298 0h1m299 0h1m159 0h1m-760 1h1m298 0h1m299 0h1m159 0h1m-760 1h1m298 0h1m299 0h1m159 0h1m-760 1h1m298 0h1m299 0h1m159 0h1m-760 1h1m298 0h1m299 0h1m159 0h1m-760 1h1m298 0h1m299 0h1m159 0h1m-760 1h1m598 0h1m159 0h1m-760 1h1m598 0h1m159 0h1m-760 1h1m298 0h1m299 0h1m159 0h1m-760 1h1m298 0h1m299 0h1m159 0h1m-760 1h1m298 0h1m299 0h1m159 0h1m-760 1h1m298 0h1m299 0h1m159 0h1m-760 1h1m298 0h1m299 0h1m159 0h1m-760 1h1m298 0h1m299 0h1m159 0h1m-760 1h1m298 0h1m299 0h1m159 0h1m-760 1h1m298 0h1m299 0h1m159 0h1m-760 1h1m298 0h1m299 0h1m159 0h1m-760 1h1m298 0h1m299 0h1m159 0h1m-760 1h1m298 0h1m299 0h1m159 0h1m-760 1h1m298 0h1m299 0h1m159 0h1m-760 1h1m298 0h1m299 0h1m159 0h1m-760 1h1m298 0h1m299 0h1m159 0h1m-760 1h1m298 0h1m299 0h1m159 0h1m-760 1h1m298 0h1m299 0h1m159 0h1m-760 1h1m298 0h1m299 0h1m159 0h1m-760 1h1m298 0h1m299 0h1m159 0h1m-760 1h1m298 0h1m299 0h1m159 0h1m-760 1h1m298 0h1m299 0h1m159 0h1m-760 1h1m298 0h1m299 0h1m159 0h1m-760 1h1m298 0h1m299 0h1m159 0h1m-760 1h1m298 0h1m299 0h1m159 0h1m-760 1h1m298 0h1m299 0h1m159 0h1m-760 1h1m298 0h1m299 0h1m159 0h1m-760 1h1m298 0h1m299 0h1m159 0h1m-760 1h1m298 0h1m299 0h1m159 0h1m-760 1h1m298 0h1m299 0h1m159 0h1m-760 1h1m298 0h1m299 0h1m159 0h1m-760 1h1m598 0h1m159 0h1m-760 1h1m298 0h1m299 0h1m159 0h1m-760 1h1m298 0h1m299 0h1m159 0h1m-760 1h1m298 0h1m299 0h1m159 0h1m-760 1h1m298 0h1m299 0h1m159 0h1m-760 1h1m298 0h1m299 0h1m159 0h1m-760 1h1m298 0h1m299 0h1m159 0h1m-760 1h1m298 0h1m299 0h1m159 0h1m-760 1h1m298 0h1m299 0h1m159 0h1m-760 1h1m298 0h1m299 0h1m159 0h1m-760 1h1m298 0h1m299 0h1m159 0h1m-760 1h1m298 0h1m299 0h1m159 0h1m-760 1h1m298 0h1m299 0h1m159 0h1m-760 1h1m298 0h1m299 0h1m159 0h1m-760 1h1m298 0h1m299 0h1m159 0h1m-760 1h1m598 0h1m159 0h1m-760 1h1m598 0h1m159 0h1m-760 1h1m598 0h1m159 0h1m-760 1h1m598 0h1m159 0h1m-760 1h1m598 0h1m159 0h1m-760 1h1m598 0h1m159 0h1m-760 1h1m598 0h1m159 0h1m-760 1h1m598 0h1m159 0h1m-760 1h1m598 0h1m159 0h1m-760 1h1m598 0h1m159 0h1m-760 1h1m598 0h1m159 0h1m-760 1h1m598 0h1m159 0h1m-760 1h1m598 0h1m159 0h1m-760 1h1m598 0h1m159 0h1m-760 1h1m598 0h1m159 0h1m-760 1h1m598 0h1m159 0h1m-760 1h1m598 0h1m159 0h1m-760 1h1m598 0h1m159 0h1m-760 1h1m598 0h1m159 0h1m-760 1h1m598 0h1m159 0h1m-760 1h1m598 0h1m159 0h1m-760 1h1m598 0h1m159 0h1m-760 1h1m598 0h1m159 0h1m-760 1h1m598 0h1m159 0h1m-760 1h1m598 0h1m159 0h1m-760 1h1m598 0h1m159 0h1m-760 1h1m598 0h1m159 0h1m-760 1h1m598 0h1m159 0h1m-760 1h1m598 0h1m159 0h1m-760 1h1m598 0h1m159 0h1m-760 1h1m598 0h1m159 0h1m-760 1h1m298 0h1m299 0h1m159 0h1m-760 1h1m298 0h1m299 0h1m159 0h1m-760 1h1m298 0h1m299 0h1m159 0h1m-760 1h1m298 0h1m299 0h1m159 0h1m-760 1h1m298 0h1m299 0h1m159 0h1m-760 1h1m298 0h1m299 0h1m159 0h1m-760 1h1m298 0h1m299 0h1m159 0h1m-760 1h1m298 0h1m299 0h1m159 0h1m-760 1h1m298 0h1m299 0h1m159 0h1m-760 1h1m298 0h1m299 0h1m159 0h1m-760 1h1m298 0h1m299 0h1m159 0h1m-760 1h1m298 0h1m299 0h1m159 0h1m-760 1h1m298 0h1m299 0h1m159 0h1m-760 1h1m298 0h1m299 0h1m159 0h1m-760 1h1m298 0h1m299 0h1m159 0h1m-760 1h1m298 0h1m299 0h1m159 0h1m-760 1h1m298 0h1m299 0h1m159 0h1m-760 1h1m298 0h1m299 0h1m159 0h1m-760 1h1m298 0h1m299 0h1m159 0h1m-760 1h1m298 0h1m299 0h1m159 0h1m-760 1h1m298 0h1m299 0h1m159 0h1m-760 1h1m298 0h1m299 0h1m159 0h1m-760 1h1m298 0h1m299 0h1m159 0h1m-760 1h1m298 0h1m299 0h1m159 0h1m-760 1h1m298 0h1m299 0h1m159 0h1m-760 1h1m298 0h1m299 0h1m159 0h1m-760 1h1m298 0h1m299 0h1m159 0h1m-760 1h1m298 0h1m299 0h1m159 0h1m-760 1h1m298 0h1m299 0h1m159 0h1m-760 1h1m298 0h1m299 0h1m159 0h1m-760 1h1m298 0h1m299 0h1m159 0h1m-760 1h1m298 0h1m299 0h1m159 0h1m-760 1h1m598 0h1m159 0h1m-760 1h1m598 0h1m159 0h1m-760 1h1m598 0h1m159 0h1m-760 1h1m598 0h1m159 0h1m-760 1h1m598 0h1m159 0h1m-760 1h1m598 0h1m159 0h1m-760 1h1m298 0h1m299 0h1m159 0h1m-760 1h1m298 0h1m299 0h1m159 0h1m-760 1h1m298 0h1m299 0h1m159 0h1m-760 1h1m298 0h1m299 0h1m159 0h1m-760 1h1m298 0h1m299 0h1m159 0h1m-760 1h1m598 0h1m159 0h1m-760 1h1m298 0h1m299 0h1m159 0h1m-760 1h1m298 0h1m299 0h1m159 0h1m-760 1h1m298 0h1m299 0h1m159 0h1m-760 1h1m298 0h1m299 0h1m159 0h1m-760 1h1m298 0h1m299 0h1m159 0h1m-760 1h1m598 0h1m159 0h1m-760 1h1m298 0h1m299 0h1m159 0h1m-760 1h1m298 0h1m299 0h1m159 0h1m-760 1h1m298 0h1m299 0h1m159 0h1m-760 1h1m598 0h1m159 0h1m-760 1h1m298 0h1m299 0h1m159 0h1m-760 1h1m298 0h1m299 0h1m159 0h1m-760 1h1m298 0h1m299 0h1m159 0h1m-760 1h1m298 0h1m299 0h1m159 0h1m-760 1h1m298 0h1m299 0h1m159 0h1m-760 1h1m298 0h1m299 0h1m159 0h1m-760 1h1m298 0h1m299 0h1m159 0h1m-760 1h1m298 0h1m299 0h1m159 0h1m-760 1h1m298 0h1m299 0h1m159 0h1m-760 1h1m298 0h1m299 0h1m159 0h1m-760 1h1m298 0h1m299 0h1m159 0h1m-760 1h1m298 0h1m299 0h1m159 0h1m-760 1h1m298 0h1m299 0h1m159 0h1m-760 1h1m298 0h1m299 0h1m159 0h1m-760 1h1m298 0h1m299 0h1m159 0h1m-760 1h1m298 0h1m299 0h1m159 0h1m-760 1h1m298 0h1m299 0h1m159 0h1m-760 1h1m298 0h1m299 0h1m159 0h1m-760 1h1m298 0h1m299 0h1m159 0h1m-760 1h1m298 0h1m299 0h1m159 0h1m-760 1h1m298 0h1m299 0h1m159 0h1m-760 1h1m298 0h1m299 0h1m159 0h1m-760 1h1m298 0h1m299 0h1m159 0h1m-760 1h1m298 0h1m299 0h1m159 0h1m-760 1h1m298 0h1m299 0h1m159 0h1m-760 1h1m298 0h1m299 0h1m159 0h1m-760 1h1m298 0h1m299 0h1m159 0h1m-760 1h1m298 0h1m299 0h1m159 0h1m-760 1h1m298 0h1m299 0h1m159 0h1m-760 1h1m298 0h1m299 0h1m159 0h1m-760 1h1m598 0h1m159 0h1m-760 1h1m298 0h1m299 0h1m159 0h1m-760 1h1m298 0h1m299 0h1m159 0h1m-760 1h1m298 0h1m299 0h1m159 0h1m-760 1h1m298 0h1m299 0h1m159 0h1m-760 1h1m298 0h1m299 0h1m159 0h1m-760 1h1m298 0h1m299 0h1m159 0h1m-760 1h1m298 0h1m299 0h1m159 0h1m-760 1h1m298 0h1m299 0h1m159 0h1m-760 1h1m298 0h1m299 0h1m159 0h1m-760 1h1m298 0h1m299 0h1m159 0h1m-760 1h1m298 0h1m299 0h1m159 0h1m-760 1h1m298 0h1m299 0h1m159 0h1m-760 1h1m298 0h1m299 0h1m159 0h1m-760 1h1m298 0h1m299 0h1m159 0h1m-760 1h1m298 0h1m299 0h1m159 0h1m-760 1h1m298 0h1m299 0h1m159 0h1m-760 1h1m298 0h1m299 0h1m159 0h1m-760 1h1m598 0h1m159 0h1m-760 1h1m298 0h1m299 0h1m159 0h1m-760 1h1m298 0h1m299 0h1m159 0h1m-760 1h1m298 0h1m299 0h1m159 0h1m-760 1h1m298 0h1m299 0h1m159 0h1m-760 1h1m298 0h1m299 0h1m159 0h1m-760 1h1m298 0h1m299 0h1m159 0h1m-760 1h1m298 0h1m299 0h1m159 0h1m-760 1h1m298 0h1m299 0h1m159 0h1m-760 1h1m298 0h1m299 0h1m159 0h1m-760 1h1m298 0h1m299 0h1m159 0h1m-760 1h1m298 0h1m299 0h1m159 0h1m-760 1h1m298 0h1m299 0h1m159 0h1m-760 1h1m598 0h1m159 0h1m-760 1h1m298 0h1m299 0h1m159 0h1m-760 1h1m298 0h1m299 0h1m159 0h1m-760 1h1m298 0h1m299 0h1m159 0h1m-760 1h1m298 0h1m299 0h1m159 0h1m-760 1h1m298 0h1m299 0h1m159 0h1m-760 1h1m298 0h1m299 0h1m159 0h1m-760 1h1m298 0h1m299 0h1m159 0h1m-760 1h1m298 0h1m299 0h1m159 0h1m-760 1h1m298 0h1m299 0h1m159 0h1m-760 1h1m298 0h1m299 0h1m159 0h1m-760 1h1m298 0h1m299 0h1m159 0h1m-760 1h1m298 0h1m299 0h1m159 0h1m-760 1h1m298 0h1m299 0h1m159 0h1m-760 1h1m298 0h1m299 0h1m159 0h1m-760 1h1m298 0h1m299 0h1m159 0h1m-760 1h1m298 0h1m299 0h1m159 0h1m-760 1h1m298 0h1m299 0h1m159 0h1m-760 1h1m298 0h1m299 0h1m159 0h1m-760 1h1m298 0h1m299 0h1m159 0h1m-760 1h1m298 0h1m299 0h1m159 0h1m-760 1h1m298 0h1m299 0h1m159 0h1m-760 1h1m298 0h1m299 0h1m159 0h1m-760 1h1m298 0h1m299 0h1m159 0h1m-760 1h1m298 0h1m299 0h1m159 0h1m-760 1h1m298 0h1m299 0h1m159 0h1m-760 1h1m298 0h1m299 0h1m159 0h1m-760 1h1m298 0h1m299 0h1m159 0h1m-760 1h1m298 0h1m299 0h1m159 0h1m-760 1h1m298 0h1m299 0h1m159 0h1m-760 1h1m298 0h1m299 0h1m159 0h1m-760 1h1m298 0h1m299 0h1m159 0h1m-760 1h1m298 0h1m299 0h1m159 0h1m-760 1h1m298 0h1m299 0h1m159 0h1m-760 1h1m298 0h1m299 0h1m159 0h1m-760 1h1m298 0h1m299 0h1m159 0h1m-760 1h1m298 0h1m299 0h1m159 0h1m-760 1h1m298 0h1m299 0h1m159 0h1m-760 1h1m298 0h1m299 0h1m159 0h1m-760 1h1m298 0h1m299 0h1m159 0h1m-760 1h1m298 0h1m299 0h1m159 0h1m-760 1h1m298 0h1m299 0h1m159 0h1m-760 1h1m298 0h1m299 0h1m159 0h1m-760 1h1m298 0h1m299 0h1m159 0h1m-760 1h1m298 0h1m299 0h1m159 0h1m-760 1h1m298 0h1m299 0h1m159 0h1m-760 1h1m298 0h1m299 0h1m159 0h1m-760 1h1m298 0h1m299 0h1m159 0h1m-760 1h1m298 0h1m299 0h1m159 0h1m-760 1h1m298 0h1m299 0h1m159 0h1m-760 1h1m298 0h1m299 0h1m159 0h1m-760 1h1m298 0h1m299 0h1m159 0h1m-760 1h1m298 0h1m299 0h1m159 0h1m-760 1h1m298 0h1m299 0h1m159 0h1m-760 1h1m298 0h1m299 0h1m159 0h1m-760 1h1m298 0h1m299 0h1m159 0h1m-760 1h1m298 0h1m299 0h1m159 0h1m-760 1h1m298 0h1m299 0h1m159 0h1m-760 1h1m298 0h1m299 0h1m159 0h1m-760 1h1m298 0h1m299 0h1m159 0h1m-760 1h1m298 0h1m299 0h1m159 0h1m-760 1h1m298 0h1m299 0h1m159 0h1m-760 1h1m298 0h1m299 0h1m159 0h1m-760 1h1m298 0h1m299 0h1m159 0h1m-760 1h1m298 0h1m299 0h1m159 0h1m-760 1h1m298 0h1m299 0h1m159 0h1m-760 1h1m298 0h1m299 0h1m159 0h1m-760 1h1m298 0h1m299 0h1m159 0h1m-760 1h1m298 0h1m299 0h1m159 0h1m-760 1h1m298 0h1m299 0h1m159 0h1m-760 1h1m298 0h1m299 0h1m159 0h1m-760 1h1m298 0h1m299 0h1m159 0h1m-760 1h1m298 0h1m299 0h1m159 0h1m-760 1h1m298 0h1m299 0h1m159 0h1m-760 1h1m298 0h1m299 0h1m159 0h1m-760 1h1m298 0h1m299 0h1m159 0h1m-760 1h1m298 0h1m299 0h1m159 0h1m-760 1h1m298 0h1m299 0h1m159 0h1m-760 1h1m1 0h13m1 0h14m1 0h13m1 0h15m1 0h14m31 0h59m2 0h5m1 0h9m2 0h20m1 0h10m1 0h83m1 0h193m31 0h14m1 0h25m1 0h1m1 0h16m1 0h13m2 0h1m159 0h1m-760 1h1m298 0h1m299 0h1m159 0h1m-760 1h1m298 0h1m299 0h1m159 0h1m-760 1h1m298 0h1m299 0h1m159 0h1m-760 1h1m298 0h1m299 0h1m159 0h1m-760 1h1m298 0h1m299 0h1m159 0h1m-760 1h1m298 0h1m299 0h1m159 0h1m-760 1h1m298 0h1m299 0h1m159 0h1m-760 1h1m298 0h1m299 0h1m159 0h1m-760 1h1m298 0h1m299 0h1m159 0h1m-760 1h1m298 0h1m299 0h1m159 0h1m-760 1h1m298 0h1m299 0h1m159 0h1m-760 1h1m298 0h1m299 0h1m159 0h1m-760 1h1m298 0h1m299 0h1m159 0h1m-760 1h1m298 0h1m299 0h1m159 0h1m-760 1h1m298 0h1m299 0h1m159 0h1m-760 1h1m298 0h1m299 0h1m159 0h1m-760 1h1m298 0h1m299 0h1m159 0h1m-760 1h1m298 0h1m299 0h1m159 0h1m-760 1h1m298 0h1m299 0h1m159 0h1m-760 1h1m298 0h1m299 0h1m159 0h1m-760 1h1m298 0h1m299 0h1m159 0h1m-760 1h1m298 0h1m299 0h1m159 0h1m-760 1h1m298 0h1m299 0h1m159 0h1m-760 1h1m298 0h1m299 0h1m159 0h1m-760 1h1m298 0h1m299 0h1m159 0h1m-760 1h1m298 0h1m299 0h1m159 0h1m-760 1h1m298 0h1m299 0h1m159 0h1m-760 1h1m298 0h1m299 0h1m159 0h1m-760 1h1m298 0h1m299 0h1m159 0h1m-760 1h1m298 0h1m299 0h1m159 0h1m-760 1h1m298 0h1m299 0h1m159 0h1m-760 1h1m298 0h1m299 0h1m159 0h1m-760 1h1m298 0h1m299 0h1m159 0h1m-760 1h1m298 0h1m299 0h1m159 0h1m-760 1h1m298 0h1m299 0h1m159 0h1m-760 1h1m298 0h1m299 0h1m159 0h1m-760 1h1m298 0h1m299 0h1m159 0h1m-760 1h1m298 0h1m299 0h1m159 0h1m-760 1h1m298 0h1m299 0h1m159 0h1m-760 1h1m298 0h1m299 0h1m159 0h1m-760 1h1m298 0h1m299 0h1m159 0h1m-760 1h1m298 0h1m299 0h1m159 0h1m-760 1h1m298 0h1m299 0h1m159 0h1m-760 1h1m298 0h1m299 0h1m159 0h1m-760 1h1m298 0h1m299 0h1m159 0h1m-760 1h1m298 0h1m299 0h1m159 0h1m-760 1h1m298 0h1m299 0h1m159 0h1m-760 1h1m298 0h1m299 0h1m159 0h1m-760 1h1m298 0h1m299 0h1m159 0h1m-760 1h1m298 0h1m299 0h1m159 0h1m-760 1h1m298 0h1m299 0h1m159 0h1m-760 1h1m298 0h1m299 0h1m159 0h1m-760 1h1m298 0h1m299 0h1m159 0h1m-760 1h1m298 0h1m299 0h1m159 0h1m-760 1h1m298 0h1m299 0h1m159 0h1m-760 1h1m298 0h1m299 0h1m159 0h1m-760 1h1m298 0h1m299 0h1m159 0h1m-760 1h1m298 0h1m299 0h1m159 0h1m-760 1h1m298 0h1m299 0h1m159 0h1m-760 1h1m298 0h1m299 0h1m159 0h1m-760 1h1m298 0h1m299 0h1m159 0h1m-760 1h1m298 0h1m299 0h1m159 0h1m-760 1h1m298 0h1m299 0h1m159 0h1m-760 1h1m298 0h1m299 0h1m159 0h1m-760 1h1m298 0h1m299 0h1m159 0h1m-760 1h1m298 0h1m299 0h1m159 0h1m-760 1h1m298 0h1m299 0h1m159 0h1m-760 1h1m298 0h1m299 0h1m159 0h1m-760 1h1m298 0h1m299 0h1m159 0h1m-760 1h1m298 0h1m299 0h1m159 0h1m-760 1h1m298 0h1m299 0h1m159 0h1m-760 1h1m298 0h1m299 0h1m159 0h1m-760 1h1m298 0h1m299 0h1m159 0h1m-760 1h1m298 0h1m299 0h1m159 0h1m-760 1h1m298 0h1m299 0h1m159 0h1m-760 1h1m298 0h1m299 0h1m159 0h1m-760 1h1m298 0h1m299 0h1m159 0h1m-760 1h1m298 0h1m299 0h1m159 0h1m-760 1h1m298 0h1m299 0h1m159 0h1m-760 1h1m298 0h1m299 0h1m159 0h1m-760 1h1m298 0h1m299 0h1m159 0h1m-760 1h1m298 0h1m299 0h1m159 0h1m-760 1h1m298 0h1m299 0h1m159 0h1m-760 1h1m298 0h1m299 0h1m159 0h1m-760 1h1m298 0h1m299 0h1m159 0h1m-760 1h1m298 0h1m299 0h1m159 0h1m-760 1h1m298 0h1m299 0h1m159 0h1m-760 1h1m298 0h1m299 0h1m159 0h1m-760 1h1m298 0h1m299 0h1m159 0h1m-760 1h1m298 0h1m299 0h1m159 0h1m-760 1h1m298 0h1m299 0h1m159 0h1m-760 1h1m298 0h1m299 0h1m159 0h1m-760 1h1m298 0h1m299 0h1m159 0h1m-760 1h1m298 0h1m299 0h1m159 0h1m-760 1h1m298 0h1m299 0h1m159 0h1m-760 1h1m298 0h1m299 0h1m159 0h1m-760 1h1m298 0h1m299 0h1m159 0h1m-760 1h1m298 0h1m299 0h1m159 0h1m-760 1h1m298 0h1m299 0h1m159 0h1m-760 1h1m298 0h1m299 0h1m159 0h1m-760 1h1m298 0h1m299 0h1m159 0h1m-760 1h1m298 0h1m299 0h1m159 0h1m-760 1h1m298 0h1m299 0h1m159 0h1m-760 1h1m298 0h1m299 0h1m159 0h1m-760 1h1m298 0h1m299 0h1m159 0h1m-760 1h1m298 0h1m299 0h1m159 0h1m-760 1h1m298 0h1m299 0h1m159 0h1m-760 1h1m298 0h1m299 0h1m159 0h1m-760 1h1m298 0h1m299 0h1m159 0h1m-760 1h1m298 0h1m299 0h1m159 0h1m-760 1h1m298 0h1m299 0h1m159 0h1m-760 1h1m298 0h1m299 0h1m159 0h1m-760 1h1m298 0h1m299 0h1m159 0h1m-760 1h1m298 0h1m299 0h1m159 0h1m-760 1h1m298 0h1m299 0h1m159 0h1m-760 1h1m298 0h1m299 0h1m159 0h1m-760 1h1m298 0h1m299 0h1m159 0h1m-760 1h1m298 0h1m299 0h1m159 0h1m-760 1h1m298 0h1m299 0h1m159 0h1m-760 1h1m298 0h1m299 0h1m159 0h1m-760 1h1m298 0h1m299 0h1m159 0h1m-760 1h1m298 0h1m299 0h1m159 0h1m-760 1h1m298 0h1m299 0h1m159 0h1m-760 1h1m298 0h1m299 0h1m159 0h1m-760 1h1m298 0h1m299 0h1m159 0h1m-760 1h1m298 0h1m299 0h1m159 0h1m-760 1h1m298 0h1m299 0h1m159 0h1m-760 1h1m298 0h1m299 0h1m159 0h1m-760 1h1m298 0h1m299 0h1m159 0h1m-760 1h1m298 0h1m299 0h1m159 0h1m-760 1h1m298 0h1m299 0h1m159 0h1m-760 1h1m298 0h1m299 0h1m159 0h1m-760 1h1m298 0h1m299 0h1m159 0h1m-760 1h1m298 0h1m299 0h1m159 0h1m-760 1h1m298 0h1m299 0h1m159 0h1m-760 1h1m298 0h1m299 0h1m159 0h1m-760 1h1m298 0h1m299 0h1m159 0h1m-760 1h1m298 0h1m299 0h1m159 0h1m-760 1h1m298 0h1m299 0h1m159 0h1m-760 1h1m298 0h1m299 0h1m159 0h1m-760 1h1m298 0h1m299 0h1m159 0h1m-760 1h1m298 0h1m299 0h1m159 0h1m-760 1h1m298 0h1m299 0h1m159 0h1m-760 1h1m298 0h1m299 0h1m159 0h1m-760 1h1m298 0h1m299 0h1m159 0h1m-760 1h1m298 0h1m299 0h1m159 0h1m-760 1h1m298 0h1m299 0h1m159 0h1m-760 1h1m298 0h1m299 0h1m159 0h1m-760 1h1m298 0h1m299 0h1m159 0h1m-760 1h1m298 0h1m299 0h1m159 0h1m-760 1h1m298 0h1m299 0h1m159 0h1m-760 1h1m298 0h1m299 0h1m159 0h1m-760 1h1m298 0h1m299 0h1m159 0h1m-760 1h1m298 0h1m299 0h1m159 0h1m-760 1h1m298 0h1m299 0h1m159 0h1m-760 1h1m298 0h1m299 0h1m159 0h1m-760 1h1m298 0h1m299 0h1m159 0h1m-760 1h1m298 0h1m299 0h1m159 0h1m-760 1h1m298 0h1m299 0h1m159 0h1m-760 1h1m298 0h1m299 0h1m159 0h1m-760 1h1m298 0h1m299 0h1m159 0h1m-760 1h1m298 0h1m299 0h1m159 0h1m-760 1h1m298 0h1m299 0h1m159 0h1m-760 1h1m298 0h1m299 0h1m159 0h1m-760 1h1m298 0h1m299 0h1m159 0h1m-760 1h1m298 0h1m299 0h1m159 0h1m-760 1h1m298 0h1m299 0h1m159 0h1m-760 1h1m298 0h1m299 0h1m159 0h1m-760 1h1m298 0h1m299 0h1m159 0h1m-760 1h1m298 0h1m299 0h1m159 0h1m-760 1h1m298 0h1m299 0h1m159 0h1m-760 1h1m298 0h1m299 0h1m159 0h1m-760 1h1m298 0h1m299 0h1m159 0h1m-760 1h1m298 0h1m299 0h1m159 0h1m-760 1h1m298 0h1m299 0h1m159 0h1m-760 1h1m298 0h1m299 0h1m159 0h1m-760 1h1m298 0h1m299 0h1m159 0h1m-760 1h1m298 0h1m299 0h1m159 0h1m-760 1h1m298 0h1m299 0h1m159 0h1m-760 1h1m298 0h1m299 0h1m159 0h1m-760 1h1m298 0h1m299 0h1m159 0h1m-760 1h1m298 0h1m299 0h1m159 0h1m-760 1h1m298 0h1m299 0h1m159 0h1m-760 1h1m298 0h1m299 0h1m159 0h1m-760 1h1m298 0h1m299 0h1m159 0h1m-760 1h1m298 0h1m299 0h1m159 0h1m-760 1h1m298 0h1m299 0h1m159 0h1m-760 1h1m298 0h1m299 0h1m159 0h1m-760 1h1m298 0h1m299 0h1m159 0h1m-760 1h1m298 0h1m299 0h1m159 0h1m-760 1h1m298 0h1m299 0h1m159 0h1m-760 1h1m298 0h1m299 0h1m159 0h1m-760 1h1m298 0h1m299 0h1m159 0h1m-760 1h1m598 0h1m159 0h1m-760 1h1m598 0h1m159 0h1m-760 1h1m598 0h1m159 0h1m-760 1h1m598 0h1m159 0h1m-760 1h1m598 0h1m159 0h1m-760 1h1m598 0h1m159 0h1m-760 1h1m598 0h1m159 0h1m-760 1h1m598 0h1m159 0h1m-760 1h1m598 0h1m159 0h1m-760 1h1m598 0h1m159 0h1m-760 1h1m598 0h1m159 0h1m-760 1h1m598 0h1m159 0h1m-760 1h1m598 0h1m159 0h1m-760 1h1m598 0h1m159 0h1m-760 1h1m598 0h1m159 0h1m-760 1h1m598 0h1m159 0h1m-760 1h1m598 0h1m159 0h1m-760 1h1m598 0h1m159 0h1m-760 1h1m598 0h1m159 0h1m-760 1h1m598 0h1m159 0h1m-760 1h1m598 0h1m159 0h1m-760 1h1m598 0h1m159 0h1m-760 1h1m598 0h1m159 0h1m-760 1h1m598 0h1m159 0h1m-760 1h1m598 0h1m159 0h1m-760 1h1m598 0h1m159 0h1m-760 1h1m598 0h1m159 0h1m-760 1h1m598 0h1m159 0h1m-760 1h1m598 0h1m159 0h1m-760 1h1m598 0h1m159 0h1m-760 1h1m598 0h1m159 0h1m-760 1h1m298 0h1m299 0h1m159 0h1m-760 1h1m298 0h1m299 0h1m159 0h1m-760 1h1m298 0h1m299 0h1m159 0h1m-760 1h1m298 0h1m299 0h1m159 0h1m-760 1h1m298 0h1m299 0h1m159 0h1m-760 1h1m298 0h1m299 0h1m159 0h1m-760 1h1m298 0h1m299 0h1m159 0h1m-760 1h1m298 0h1m299 0h1m159 0h1m-760 1h1m298 0h1m299 0h1m159 0h1m-760 1h1m298 0h1m299 0h1m159 0h1m-760 1h1m298 0h1m299 0h1m159 0h1m-760 1h1m298 0h1m299 0h1m159 0h1m-760 1h1m298 0h1m299 0h1m159 0h1m-760 1h1m298 0h1m299 0h1m159 0h1m-760 1h1m598 0h1m159 0h1m-760 1h1m298 0h1m299 0h1m159 0h1m-760 1h1m298 0h1m299 0h1m159 0h1m-760 1h1m298 0h1m299 0h1m159 0h1m-760 1h1m298 0h1m299 0h1m159 0h1m-760 1h1m298 0h1m299 0h1m159 0h1m-760 1h1m298 0h1m299 0h1m159 0h1m-760 1h1m298 0h1m299 0h1m159 0h1m-760 1h1m298 0h1m299 0h1m159 0h1m-760 1h1m298 0h1m299 0h1m159 0h1m-760 1h1m298 0h1m299 0h1m159 0h1m-760 1h1m298 0h1m299 0h1m159 0h1m-760 1h1m298 0h1m299 0h1m159 0h1m-760 1h1m298 0h1m299 0h1m159 0h1m-760 1h1m298 0h1m299 0h1m159 0h1m-760 1h1m298 0h1m299 0h1m159 0h1m-760 1h1m298 0h1m299 0h1m159 0h1m-760 1h1m298 0h1m299 0h1m159 0h1m-760 1h1m298 0h1m299 0h1m159 0h1m-760 1h1m298 0h1m299 0h1m159 0h1m-760 1h1m298 0h1m299 0h1m159 0h1m-760 1h1m298 0h1m299 0h1m159 0h1m-760 1h1m298 0h1m299 0h1m159 0h1m-760 1h1m298 0h1m299 0h1m159 0h1m-760 1h1m298 0h1m299 0h1m159 0h1m-760 1h1m298 0h1m299 0h1m159 0h1m-760 1h1m298 0h1m299 0h1m159 0h1m-760 1h1m298 0h1m299 0h1m159 0h1m-760 1h1m298 0h1m299 0h1m159 0h1m-760 1h1m298 0h1m299 0h1m159 0h1m-760 1h1m298 0h1m299 0h1m159 0h1m-760 1h1m298 0h1m299 0h1m159 0h1m-760 1h1m298 0h1m299 0h1m159 0h1m-760 1h1m298 0h1m299 0h1m159 0h1m-760 1h1m298 0h1m299 0h1m159 0h1m-760 1h1m298 0h1m299 0h1m159 0h1m-760 1h1m298 0h1m299 0h1m159 0h1m-760 1h1m298 0h1m299 0h1m159 0h1m-760 1h1m298 0h1m299 0h1m159 0h1m-760 1h1m298 0h1m299 0h1m159 0h1m-760 1h1m298 0h1m299 0h1m159 0h1m-760 1h1m298 0h1m299 0h1m159 0h1m-760 1h1m298 0h1m299 0h1m159 0h1m-760 1h1m298 0h1m299 0h1m159 0h1m-760 1h1m298 0h1m299 0h1m159 0h1m-760 1h1m598 0h1m159 0h1m-760 1h1m298 0h1m299 0h1m159 0h1m-760 1h1m298 0h1m299 0h1m159 0h1m-760 1h1m298 0h1m299 0h1m159 0h1m-760 1h1m298 0h1m299 0h1m159 0h1m-760 1h1m298 0h1m299 0h1m159 0h1m-760 1h1m298 0h1m299 0h1m159 0h1m-760 1h1m298 0h1m299 0h1m159 0h1m-760 1h1m298 0h1m299 0h1m159 0h1m-760 1h1m298 0h1m299 0h1m159 0h1m-760 1h1m298 0h1m299 0h1m159 0h1m-760 1h1m298 0h1m299 0h1m159 0h1m-760 1h1m298 0h1m299 0h1m159 0h1m-760 1h1m298 0h1m299 0h1m159 0h1m-760 1h1m598 0h1m159 0h1m-760 1h1m598 0h1m159 0h1m-760 1h760"/>
<path stroke="#808080" d="M0 0m289 61h1m7 0h1m2 0h1m3 0h1m3 0h1m-33 1h1m3 0h1m3 0h1m4 0h1m7 0h1m2 0h1m3 0h1m3 0h1m8 0h1m3 0h1m3 0h1m-62 1h1m3 0h1m7 0h1m3 0h1m3 0h1m4 0h1m7 0h1m2 0h1m3 0h1m3 0h1m8 0h1m3 0h1m3 0h1m3 0h1m-70 1h1m3 0h1m3 0h1m7 0h1m3 0h1m3 0h1m4 0h1m7 0h1m2 0h1m3 0h1m3 0h1m8 0h1m3 0h1m3 0h1m3 0h1m7 0h1m-83 1h1m4 0h1m3 0h1m3 0h1m7 0h1m3 0h1m3 0h1m4 0h1m7 0h1m2 0h1m3 0h1m3 0h1m8 0h1m3 0h1m3 0h1m3 0h1m7 0h1m4 0h1m-88 1h1m4 0h1m3 0h1m3 0h1m7 0h1m3 0h1m3 0h1m4 0h1m7 0h1m2 0h1m3 0h1m3 0h1m8 0h1m3 0h1m2 0h1m4 0h1m7 0h1m4 0h1m3 0h1m-100 1h1m7 0h1m4 0h1m4 0h1m3 0h1m6 0h1m3 0h1m3 0h1m4 0h1m7 0h1m2 0h1m3 0h1m3 0h1m8 0h1m3 0h1m2 0h1m3 0h1m8 0h1m3 0h1m4 0h1m3 0h1m-108 1h1m3 0h1m8 0h1m4 0h1m3 0h1m3 0h1m6 0h1m3 0h1m3 0h1m4 0h1m7 0h1m2 0h1m3 0h1m3 0h1m8 0h1m3 0h1m2 0h1m3 0h1m7 0h1m4 0h1m3 0h1m4 0h1m7 0h1m-120 1h1m3 0h1m4 0h1m7 0h1m4 0h1m3 0h1m3 0h1m7 0h1m3 0h1m3 0h1m3 0h1m7 0h1m2 0h1m3 0h1m3 0h1m7 0h1m3 0h1m3 0h1m3 0h1m7 0h1m4 0h1m3 0h1m3 0h1m8 0h1m3 0h1m-128 1h1m4 0h1m3 0h1m3 0h1m7 0h1m4 0h1m3 0h1m3 0h1m7 0h1m3 0h1m3 0h1m3 0h1m7 0h1m2 0h1m3 0h1m3 0h1m7 0h1m3 0h1m3 0h1m3 0h1m7 0h1m4 0h1m3 0h1m3 0h1m7 0h1m4 0h1m3 0h1m-131 1h1m3 0h1m3 0h1m3 0h1m7 0h1m4 0h1m3 0h1m3 0h1m7 0h1m3 0h1m3 0h1m3 0h1m7 0h1m2 0h1m3 0h1m3 0h1m7 0h1m3 0h1m3 0h1m3 0h1m7 0h1m4 0h1m3 0h1m3 0h1m7 0h1m3 0h1m4 0h1m-140 1h1m8 0h1m3 0h1m3 0h1m3 0h1m8 0h1m3 0h1m3 0h1m3 0h1m7 0h1m3 0h1m3 0h1m3 0h1m7 0h1m2 0h1m3 0h1m3 0h1m7 0h1m3 0h1m3 0h1m3 0h1m7 0h1m3 0h1m4 0h1m3 0h1m7 0h1m3 0h1m3 0h1m4 0h1m-144 1h1m8 0h1m3 0h1m3 0h1m3 0h1m8 0h1m3 0h1m3 0h1m4 0h1m6 0h1m3 0h1m3 0h1m3 0h1m7 0h1m2 0h1m3 0h1m3 0h1m7 0h1m3 0h1m2 0h1m3 0h1m8 0h1m3 0h1m3 0h1m3 0h1m7 0h1m4 0h1m3 0h1m3 0h1m-147 1h1m4 0h1m7 0h1m4 0h1m2 0h1m4 0h1m7 0h1m4 0h1m3 0h1m3 0h1m6 0h1m3 0h1m3 0h1m3 0h1m7 0h1m2 0h1m3 0h1m3 0h1m7 0h1m3 0h1m2 0h1m3 0h1m7 0h1m4 0h1m3 0h1m3 0h1m7 0h1m3 0h1m4 0h1m3 0h1m8 0h1m-160 1h1m4 0h1m3 0h1m8 0h1m3 0h1m3 0h1m3 0h1m7 0h1m4 0h1m3 0h1m3 0h1m6 0h1m3 0h1m3 0h1m30 0h1m3 0h1m2 0h1m3 0h1m7 0h1m4 0h1m3 0h1m3 0h1m7 0h1m3 0h1m3 0h1m4 0h1m8 0h1m-164 1h1m4 0h1m3 0h1m3 0h1m8 0h1m3 0h1m3 0h1m3 0h1m8 0h1m3 0h1m3 0h1m3 0h1m56 0h1m7 0h1m3 0h1m4 0h1m3 0h1m7 0h1m3 0h1m3 0h1m3 0h1m8 0h1m4 0h1m-168 1h1m4 0h1m4 0h1m3 0h1m7 0h1m4 0h1m2 0h1m3 0h1m8 0h1m3 0h1m72 0h1m3 0h1m3 0h1m3 0h1m7 0h1m4 0h1m3 0h1m3 0h1m8 0h1m3 0h1m4 0h1m-171 1h1m4 0h1m3 0h1m3 0h1m8 0h1m3 0h1m2 0h1m4 0h1m7 0h1m80 0h1m3 0h1m3 0h1m7 0h1m3 0h1m4 0h1m3 0h1m7 0h1m4 0h1m4 0h1m-179 1h1m7 0h1m4 0h1m3 0h1m3 0h1m8 0h1m3 0h1m3 0h1m3 0h1m92 0h1m3 0h1m7 0h1m3 0h1m3 0h1m4 0h1m7 0h1m3 0h1m4 0h1m3 0h1m-182 1h1m8 0h1m3 0h1m4 0h1m2 0h1m8 0h1m3 0h1m3 0h1m3 0h1m103 0h1m4 0h1m3 0h1m3 0h1m8 0h1m3 0h1m4 0h1m3 0h1m-186 1h1m4 0h1m7 0h1m4 0h1m3 0h1m3 0h1m7 0h1m4 0h1m2 0h1m107 0h1m3 0h1m4 0h1m3 0h1m7 0h1m4 0h1m3 0h1m3 0h1m-185 1h1m4 0h1m7 0h1m4 0h1m3 0h1m3 0h1m8 0h1m3 0h1m114 0h1m3 0h1m4 0h1m7 0h1m3 0h1m4 0h1m3 0h1m8 0h1m-198 1h1m4 0h1m4 0h1m7 0h1m3 0h1m4 0h1m2 0h1m8 0h1m122 0h1m3 0h1m8 0h1m3 0h1m4 0h1m2 0h1m9 0h1m-197 1h1m3 0h1m4 0h1m7 0h1m4 0h1m3 0h1m3 0h1m134 0h1m7 0h1m4 0h1m3 0h1m3 0h1m8 0h1m4 0h1m-206 1h1m4 0h1m4 0h1m3 0h1m7 0h1m4 0h1m4 0h1m2 0h1m142 0h1m3 0h1m4 0h1m3 0h1m8 0h1m4 0h1m-205 1h1m4 0h1m3 0h1m4 0h1m7 0h1m4 0h1m3 0h1m144 0h1m4 0h1m4 0h1m2 0h1m8 0h1m4 0h1m4 0h1m-209 1h1m4 0h1m3 0h1m4 0h1m7 0h1m4 0h1m148 0h1m3 0h1m4 0h1m3 0h1m8 0h1m4 0h1m3 0h1m-216 1h1m8 0h1m4 0h1m3 0h1m3 0h1m8 0h1m156 0h1m4 0h1m2 0h1m8 0h1m4 0h1m4 0h1m3 0h1m-220 1h1m8 0h1m4 0h1m3 0h1m4 0h1m7 0h1m160 0h1m3 0h1m8 0h1m4 0h1m3 0h1m3 0h1m-223 1h1m4 0h1m8 0h1m4 0h1m3 0h1m3 0h1m168 0h1m2 0h1m8 0h1m4 0h1m4 0h1m3 0h1m-222 1h1m3 0h1m8 0h1m4 0h1m3 0h1m4 0h1m179 0h1m4 0h1m3 0h1m3 0h1m-226 1h1m4 0h1m4 0h1m8 0h1m4 0h1m3 0h1m182 0h1m4 0h1m4 0h1m3 0h1m8 0h1m-234 1h1m4 0h1m3 0h1m8 0h1m4 0h1m3 0h1m182 0h1m4 0h1m3 0h1m3 0h1m9 0h1m-238 1h1m3 0h1m4 0h1m4 0h1m8 0h1m4 0h1m184 0h1m4 0h1m4 0h1m3 0h1m8 0h1m3 0h1m-240 1h1m3 0h1m4 0h1m3 0h1m8 0h1m194 0h1m3 0h1m3 0h1m9 0h1m3 0h1m-240 1h1m3 0h1m4 0h1m4 0h1m8 0h1m192 0h1m4 0h1m3 0h1m8 0h1m3 0h1m4 0h1m-243 1h1m3 0h1m4 0h1m3 0h1m205 0h1m3 0h1m9 0h1m3 0h1m4 0h1m-252 1h1m8 0h1m3 0h1m5 0h1m3 0h1m204 0h1m3 0h1m8 0h1m3 0h1m4 0h1m4 0h1m-255 1h1m8 0h1m3 0h1m4 0h1m3 0h1m207 0h1m8 0h1m4 0h1m4 0h1m3 0h1m-254 1h1m8 0h1m4 0h1m4 0h1m3 0h1m215 0h1m3 0h1m4 0h1m4 0h1m-259 1h1m5 0h1m8 0h1m3 0h1m4 0h1m218 0h1m3 0h1m5 0h1m3 0h1m-257 1h1m4 0h1m9 0h1m3 0h1m222 0h1m3 0h1m4 0h1m3 0h1m-260 1h1m3 0h1m5 0h1m8 0h1m3 0h1m221 0h1m3 0h1m4 0h1m4 0h1m8 0h1m-268 1h1m3 0h1m4 0h1m9 0h1m228 0h1m4 0h1m3 0h1m9 0h1m-268 1h1m4 0h1m4 0h1m8 0h1m227 0h1m4 0h1m4 0h1m8 0h1m-271 1h1m4 0h1m4 0h1m4 0h1m240 0h1m3 0h1m9 0h1m4 0h1m-276 1h1m5 0h1m3 0h1m4 0h1m239 0h1m3 0h1m9 0h1m5 0h1m-275 1h1m4 0h1m4 0h1m4 0h1m242 0h1m9 0h1m4 0h1m3 0h1m-277 1h1m4 0h1m4 0h1m3 0h1m241 0h1m9 0h1m4 0h1m4 0h1m-276 1h1m3 0h1m5 0h1m3 0h1m249 0h1m4 0h1m4 0h1m-284 1h1m8 0h1m4 0h1m4 0h1m253 0h1m4 0h1m3 0h1m5 0h1m-289 1h1m9 0h1m4 0h1m256 0h1m4 0h1m3 0h1m5 0h1m-287 1h1m9 0h1m3 0h1m256 0h1m3 0h1m4 0h1m4 0h1m-291 1h1m5 0h1m9 0h1m3 0h1m254 0h1m3 0h1m4 0h1m4 0h1m-289 1h1m5 0h1m8 0h1m262 0h1m3 0h1m5 0h1m9 0h1m-303 1h1m3 0h1m5 0h1m9 0h1m260 0h1m3 0h1m5 0h1m9 0h1m-301 1h1m3 0h1m5 0h1m273 0h1m4 0h1m9 0h1m-300 1h1m4 0h1m5 0h1m271 0h1m4 0h1m9 0h1m4 0h1m-308 1h1m4 0h1m4 0h1m5 0h1m274 0h1m9 0h1m4 0h1m-306 1h1m4 0h1m4 0h1m4 0h1m273 0h1m10 0h1m4 0h1m4 0h1m-311 1h1m5 0h1m4 0h1m4 0h1m282 0h1m4 0h1m4 0h1m-309 1h1m5 0h1m3 0h1m286 0h1m4 0h1m4 0h1m-307 1h1m5 0h1m3 0h1m284 0h1m4 0h1m4 0h1m-316 1h1m10 0h1m4 0h1m4 0h1m282 0h1m4 0h1m4 0h1m6 0h1m-321 1h1m10 0h1m4 0h1m285 0h1m4 0h1m5 0h1m5 0h1m-319 1h1m10 0h1m4 0h1m289 0h1m4 0h1m5 0h1m-323 1h1m5 0h1m9 0h1m293 0h1m4 0h1m5 0h1m-321 1h1m5 0h1m9 0h1m291 0h1m4 0h1m5 0h1m-324 1h1m4 0h1m4 0h1m10 0h1m294 0h1m5 0h1m11 0h1m-334 1h1m4 0h1m4 0h1m303 0h1m5 0h1m11 0h1m-332 1h1m4 0h1m4 0h1m57 0h1m193 0h1m55 0h1m11 0h1m-336 1h1m5 0h1m4 0h1m4 0h1m305 0h1m11 0h1m5 0h1m-340 1h1m5 0h1m4 0h1m4 0h1m56 0h1m191 0h1m54 0h1m10 0h2m5 0h1m-338 1h1m4 0h1m5 0h1m4 0h1m312 0h1m6 0h1m-336 1h1m4 0h1m5 0h1m60 0h1m189 0h1m64 0h1m6 0h1m4 0h1m-339 1h1m4 0h1m5 0h1m313 0h1m5 0h2m4 0h1m-338 1h1m5 0h1m65 0h1m187 0h1m63 0h1m5 0h1m5 0h1m-336 1h1m5 0h1m315 0h1m5 0h1m5 0h1m5 0h1m-351 1h1m10 0h1m5 0h1m65 0h1m183 0h1m69 0h1m5 0h1m5 0h1m-349 1h1m10 0h1m323 0h1m5 0h1m5 0h1m-347 1h1m10 0h1m70 0h1m181 0h1m68 0h1m5 0h1m5 0h1m-352 1h1m6 0h1m10 0h1m325 0h1m4 0h2m-350 1h1m6 0h1m80 0h1m179 0h1m73 0h1m4 0h1m-347 1h1m6 0h1m332 0h1m4 0h1m-345 1h1m6 0h1m79 0h1m177 0h1m77 0h1m12 0h1m-362 1h1m5 0h2m5 0h1m333 0h1m11 0h2m-360 1h2m5 0h1m5 0h1m78 0h1m175 0h1m76 0h1m11 0h1m-362 1h1m5 0h1m5 0h1m5 0h1m341 0h1m6 0h1m-367 1h1m5 0h1m5 0h1m83 0h1m173 0h1m87 0h1m5 0h2m-365 1h1m5 0h1m5 0h1m343 0h1m5 0h1m-362 1h1m5 0h1m5 0h1m83 0h1m169 0h1m86 0h2m5 0h1m5 0h1m-366 1h2m4 0h2m343 0h1m6 0h1m4 0h2m-363 1h1m5 0h1m87 0h1m167 0h1m85 0h1m6 0h1m4 0h1m-360 1h1m5 0h1m345 0h2m4 0h1m-370 1h1m11 0h1m92 0h1m165 0h1m90 0h1m5 0h1m6 0h2m-376 1h1m11 0h1m347 0h1m5 0h1m6 0h1m-373 1h1m11 0h1m91 0h1m163 0h1m94 0h2m6 0h1m-371 1h2m359 0h1m6 0h2m-376 1h2m6 0h1m101 0h1m161 0h1m93 0h1m6 0h1m-372 1h1m6 0h1m362 0h1m-370 1h1m6 0h1m100 0h1m159 0h1m98 0h2m11 0h2m-387 1h2m4 0h2m5 0h1m357 0h1m12 0h1m-383 1h1m5 0h1m5 0h1m99 0h1m157 0h1m110 0h1m-381 1h1m5 0h1m371 0h2m6 0h1m-386 1h2m4 0h2m104 0h1m153 0h1m109 0h1m6 0h2m-392 1h2m7 0h1m5 0h1m366 0h1m6 0h1m-388 1h2m6 0h1m109 0h1m151 0h1m107 0h2m5 0h2m5 0h1m-391 1h2m5 0h2m366 0h1m5 0h2m5 0h2m-388 1h1m6 0h1m107 0h1m149 0h1m112 0h1m6 0h1m-385 1h2m373 0h2m6 0h1m-382 1h2m111 0h1m147 0h1m110 0h1m6 0h2m7 0h1m-403 1h1m15 0h1m375 0h1m7 0h2m-401 1h2m125 0h1m145 0h1m116 0h1m6 0h2m-397 1h1m385 0h2m5 0h2m-394 1h2m123 0h1m143 0h1m121 0h1m-398 1h2m6 0h2m385 0h2m-395 1h2m6 0h1m122 0h1m139 0h1m119 0h2m-391 1h2m5 0h2m379 0h1m15 0h1m-403 1h1m6 0h1m120 0h1m137 0h1m133 0h2m-410 1h2m7 0h2m395 0h2m-406 1h2m7 0h2m124 0h1m135 0h1m130 0h2m6 0h1m-409 1h2m7 0h1m389 0h1m6 0h2m-414 1h2m6 0h1m131 0h1m133 0h1m128 0h2m5 0h2m-410 1h2m5 0h2m390 0h2m5 0h2m-406 1h2m5 0h2m128 0h1m131 0h1m133 0h1m8 0h1m-411 1h1m6 0h1m391 0h2m7 0h2m-409 1h2m133 0h1m129 0h1m130 0h2m7 0h2m-405 1h2m399 0h2m-401 1h1m131 0h1m127 0h1m137 0h1m7 0h2m-423 1h1m410 0h2m6 0h2m-420 1h2m146 0h1m123 0h1m135 0h2m6 0h2m-416 1h2m410 0h2m-419 1h1m6 0h2m143 0h1m121 0h1m140 0h2m-416 1h2m6 0h2m402 0h2m-412 1h2m6 0h2m140 0h1m119 0h1m138 0h1m-408 1h2m6 0h1m413 0h1m-430 1h2m7 0h2m145 0h1m117 0h1m152 0h2m-427 1h2m7 0h2m412 0h2m-423 1h2m7 0h2m142 0h1m115 0h1m149 0h2m-419 1h2m413 0h2m8 0h1m-434 1h2m8 0h2m148 0h1m113 0h1m146 0h2m8 0h2m-431 1h2m8 0h2m35 0h1m335 0h1m34 0h1m8 0h2m-427 1h2m8 0h1m36 0h1m220 0h1m110 0h1m43 0h2m-423 1h2m45 0h1m327 0h1m43 0h2m7 0h2m-428 1h2m45 0h1m215 0h1m107 0h1m43 0h2m7 0h2m-424 1h2m410 0h1m6 0h3m-420 1h1m44 0h1m106 0h1m105 0h1m106 0h1m49 0h2m-370 1h1m315 0h1m49 0h2m9 0h2m-441 1h2m62 0h1m103 0h1m103 0h1m153 0h2m9 0h2m-437 1h2m62 0h1m307 0h1m59 0h3m-433 1h3m61 0h1m100 0h1m101 0h1m100 0h1m58 0h3m-436 1h2m7 0h2m61 0h1m299 0h1m58 0h2m-431 1h2m7 0h2m259 0h1m157 0h1m-427 1h3m6 0h1m60 0h1m295 0h1m-364 1h3m66 0h1m96 0h1m97 0h1m96 0h1m75 0h2m-447 1h1m10 0h2m66 0h1m287 0h1m75 0h2m-444 1h2m10 0h2m66 0h1m94 0h1m93 0h1m94 0h1m74 0h3m-440 1h3m77 0h1m279 0h1m73 0h3m-434 1h3m76 0h1m91 0h1m91 0h1m91 0h1m73 0h2m10 0h1m-450 1h2m9 0h2m76 0h1m271 0h1m73 0h2m10 0h2m-447 1h2m9 0h2m165 0h1m89 0h1m173 0h3m-443 1h3m84 0h1m267 0h1m81 0h3m-437 1h3m83 0h1m87 0h1m87 0h1m87 0h1m81 0h2m9 0h1m-441 1h2m83 0h1m259 0h1m81 0h2m9 0h2m-438 1h2m83 0h1m84 0h1m85 0h1m84 0h1m91 0h3m-349 1h1m251 0h1m90 0h3m-344 1h1m81 0h1m83 0h1m81 0h1m90 0h2m9 0h2m-455 1h1m439 0h2m8 0h3m-452 1h3m101 0h1m81 0h1m79 0h1m81 0h1m96 0h4m-446 1h4m99 0h1m239 0h1m95 0h3m-438 1h3m98 0h1m78 0h1m77 0h1m78 0h1m95 0h2m-445 1h2m11 0h2m98 0h1m231 0h1m-344 1h3m110 0h1m75 0h1m75 0h1m75 0h1m-339 1h4m108 0h1m223 0h1m-333 1h3m107 0h1m72 0h1m73 0h1m72 0h1m118 0h1m-460 1h2m11 0h2m440 0h4m-457 1h3m117 0h1m71 0h1m71 0h1m71 0h1m113 0h3m-450 1h4m327 0h1m111 0h4m-443 1h3m114 0h1m68 0h1m69 0h1m68 0h1m111 0h2m12 0h1m-462 1h2m11 0h2m114 0h1m203 0h1m123 0h4m-459 1h3m126 0h1m66 0h1m65 0h1m66 0h1m122 0h3m-452 1h4m320 0h1m120 0h4m-445 1h3m187 0h1m63 0h1m184 0h2m11 0h2m-451 1h2m121 0h1m191 0h1m128 0h5m-324 1h1m62 0h1m61 0h1m62 0h1m126 0h4m-317 1h1m183 0h1m125 0h3m-311 1h1m59 0h1m59 0h1m59 0h1m140 0h2m-465 1h2m142 0h1m175 0h1m137 0h5m-461 1h4m140 0h1m56 0h1m57 0h1m56 0h1m135 0h4m-452 1h4m138 0h1m167 0h1m134 0h3m-444 1h3m191 0h1m55 0h1m-262 1h2m149 0h1m163 0h1m-314 1h5m146 0h1m52 0h1m53 0h1m52 0h1m-307 1h4m144 0h1m155 0h1m-301 1h3m143 0h1m50 0h1m49 0h1m50 0h1m155 0h3m-469 1h2m158 0h1m147 0h1m153 0h4m-464 1h5m155 0h1m47 0h1m47 0h1m47 0h1m151 0h4m-455 1h4m444 0h3m-447 1h3m150 0h1m46 0h1m45 0h1m46 0h1m-139 1h1m135 0h1m163 0h4m-471 1h4m165 0h1m43 0h1m43 0h1m43 0h1m159 0h6m-463 1h6m161 0h1m127 0h1m157 0h4m-451 1h4m159 0h1m40 0h1m41 0h1m40 0h1m-123 1h1m119 0h1m172 0h4m-257 1h1m39 0h1m205 0h7m-291 1h1m115 0h1m164 0h3m-282 1h1m37 0h1m35 0h1m37 0h1m-111 1h1m107 0h1m178 0h4m-473 1h4m180 0h1m34 0h1m33 0h1m34 0h1m174 0h6m-465 1h6m176 0h1m99 0h1m172 0h4m-453 1h4m174 0h1m31 0h1m31 0h1m31 0h1m-95 1h1m91 0h1m-284 1h4m218 0h1m29 0h1m-249 1h7m182 0h1m87 0h1m-271 1h3m181 0h1m27 0h1m27 0h1m27 0h1m-83 1h1m79 0h1m190 0h7m-475 1h7m192 0h1m24 0h1m25 0h1m24 0h1m185 0h7m-461 1h7m187 0h1m71 0h1m-71 1h1m21 0h1m23 0h1m21 0h1m196 1h7m-475 1h7m198 0h1m21 0h1m19 0h1m21 0h1m191 0h7m-461 1h7m193 0h1m59 0h1m-59 1h1m18 0h1m17 0h1m18 0h1m-55 1h1m51 0h1m204 0h7m-262 1h1m15 0h1m15 0h1m15 0h1m199 0h7m-253 1h1m43 0h1m-43 1h1m12 0h1m13 0h1m12 0h1m-39 2h1m11 0h1m11 0h1m11 0h1m206 0h14m-477 1h14m208 0h1m31 0h1m-31 1h1m8 0h1m9 0h1m8 0h1m-27 1h1m23 0h1m-23 1h1m6 0h1m5 0h1m6 0h1m-249 1h14m216 0h1m15 0h1m-11 1h1m3 0h1m-9 1h1m11 0h1m-11 1h1m2 0h1m1 0h1m2 0h1m220 0h14m-477 1h14m222 0h1m3 0h1m-3 1h1m-3 1h1m3 0h1m222 0h14m-477 1h14m220 0h1m2 0h1m1 0h1m2 0h1m-11 1h1m11 0h1m-9 1h1m3 0h1m-11 1h1m15 0h1m216 0h14m-249 1h1m6 0h1m5 0h1m6 0h1m-23 1h1m23 0h1m-27 1h1m8 0h1m9 0h1m8 0h1m-31 1h1m31 0h1m208 0h14m-477 1h14m206 0h1m11 0h1m11 0h1m11 0h1m-39 2h1m12 0h1m13 0h1m12 0h1m-43 1h1m43 0h1m-253 1h7m199 0h1m15 0h1m15 0h1m15 0h1m-262 1h7m204 0h1m51 0h1m-55 1h1m18 0h1m17 0h1m18 0h1m-59 1h1m59 0h1m193 0h7m-461 1h7m191 0h1m21 0h1m19 0h1m21 0h1m198 0h7m-475 1h7m196 1h1m21 0h1m23 0h1m21 0h1m-71 1h1m71 0h1m187 0h7m-461 1h7m69 0h1m115 0h1m24 0h1m25 0h1m24 0h1m192 0h7m-475 1h7m74 0h2m114 0h1m79 0h1m-199 1h2m114 0h1m27 0h1m27 0h1m27 0h1m181 0h3m-387 1h2m114 0h1m87 0h1m182 0h7m-396 1h2m145 0h1m29 0h1m218 0h4m-402 1h2m116 0h1m91 0h1m-212 1h1m116 0h1m31 0h1m31 0h1m31 0h1m174 0h4m-453 1h4m172 0h1m99 0h1m176 0h6m-465 1h6m174 0h1m34 0h1m33 0h1m34 0h1m180 0h4m-473 1h4m178 0h1m107 0h1m-111 1h1m37 0h1m35 0h1m37 0h1m-282 1h3m164 0h1m115 0h1m-291 1h7m205 0h1m39 0h1m-257 1h4m172 0h1m119 0h1m-123 1h1m40 0h1m41 0h1m40 0h1m159 0h4m-451 1h4m157 0h1m127 0h1m161 0h6m-463 1h6m159 0h1m43 0h1m43 0h1m43 0h1m165 0h4m-471 1h4m163 0h1m135 0h1m-139 1h1m46 0h1m45 0h1m46 0h1m150 0h3m-447 1h3m444 0h4m-455 1h4m151 0h1m47 0h1m47 0h1m47 0h1m155 0h5m-464 1h4m153 0h1m147 0h1m158 0h2m-469 1h3m155 0h1m50 0h1m49 0h1m50 0h1m143 0h3m-301 1h1m155 0h1m144 0h4m-307 1h1m52 0h1m53 0h1m52 0h1m146 0h5m-314 1h1m163 0h1m149 0h2m-262 1h1m55 0h1m191 0h3m-444 1h3m134 0h1m167 0h1m138 0h4m-452 1h4m135 0h1m56 0h1m57 0h1m56 0h1m140 0h4m-461 1h5m137 0h1m175 0h1m142 0h2m-465 1h2m140 0h1m59 0h1m59 0h1m59 0h1m-311 1h3m125 0h1m183 0h1m-317 1h4m126 0h1m62 0h1m61 0h1m62 0h1m-324 1h5m128 0h1m191 0h1m121 0h2m-451 1h2m11 0h2m184 0h1m63 0h1m187 0h3m-445 1h4m120 0h1m195 0h1m124 0h4m-452 1h3m122 0h1m66 0h1m65 0h1m66 0h1m126 0h3m-459 1h4m123 0h1m203 0h1m114 0h2m11 0h2m-462 1h1m12 0h2m111 0h1m68 0h1m69 0h1m68 0h1m114 0h3m-443 1h4m111 0h1m211 0h1m115 0h4m-450 1h3m113 0h1m71 0h1m71 0h1m71 0h1m117 0h3m-457 1h4m440 0h2m11 0h2m-460 1h1m118 0h1m72 0h1m73 0h1m72 0h1m107 0h3m-333 1h1m223 0h1m108 0h4m-339 1h1m75 0h1m75 0h1m75 0h1m110 0h3m-344 1h1m231 0h1m98 0h2m11 0h2m-445 1h2m95 0h1m78 0h1m77 0h1m78 0h1m98 0h3m-438 1h3m95 0h1m239 0h1m99 0h4m-446 1h4m96 0h1m81 0h1m79 0h1m81 0h1m101 0h3m-452 1h3m8 0h2m439 0h1m-455 1h2m9 0h2m90 0h1m81 0h1m83 0h1m81 0h1m-344 1h3m90 0h1m251 0h1m-349 1h3m91 0h1m84 0h1m85 0h1m84 0h1m83 0h2m-438 1h2m9 0h2m81 0h1m259 0h1m83 0h2m-441 1h1m9 0h2m81 0h1m87 0h1m87 0h1m87 0h1m83 0h3m-437 1h3m81 0h1m267 0h1m84 0h3m-443 1h3m173 0h1m89 0h1m165 0h2m9 0h2m-447 1h2m10 0h2m73 0h1m271 0h1m76 0h2m9 0h2m-450 1h1m10 0h2m73 0h1m91 0h1m91 0h1m91 0h1m76 0h3m-434 1h3m73 0h1m279 0h1m77 0h3m-440 1h3m74 0h1m94 0h1m93 0h1m94 0h1m66 0h2m10 0h2m-444 1h2m75 0h1m287 0h1m66 0h2m10 0h1m-447 1h2m75 0h1m96 0h1m97 0h1m96 0h1m66 0h3m-364 1h1m295 0h1m60 0h1m6 0h3m-427 1h1m157 0h1m99 0h1m159 0h2m7 0h2m-431 1h2m58 0h1m299 0h1m61 0h2m7 0h2m-436 1h3m58 0h1m100 0h1m101 0h1m100 0h1m61 0h3m-433 1h3m59 0h1m307 0h1m62 0h2m-437 1h2m9 0h2m49 0h1m103 0h1m103 0h1m103 0h1m62 0h2m-441 1h2m9 0h2m49 0h1m315 0h1m-370 1h2m49 0h1m106 0h1m105 0h1m106 0h1m44 0h1m-420 1h3m6 0h1m410 0h2m-424 1h2m7 0h2m43 0h1m107 0h1m107 0h1m107 0h1m45 0h2m-428 1h2m7 0h2m43 0h1m327 0h1m45 0h2m-423 1h2m43 0h1m110 0h1m109 0h1m110 0h1m36 0h1m8 0h2m-427 1h2m8 0h1m34 0h1m335 0h1m35 0h2m8 0h2m-431 1h2m8 0h2m146 0h1m113 0h1m148 0h2m8 0h2m-434 1h1m8 0h2m413 0h2m-419 1h2m149 0h1m115 0h1m142 0h2m7 0h2m-423 1h2m412 0h2m7 0h2m-427 1h2m152 0h1m117 0h1m145 0h2m7 0h2m-430 1h1m413 0h1m6 0h2m-408 1h1m138 0h1m119 0h1m140 0h2m6 0h2m-412 1h2m402 0h2m6 0h2m-416 1h2m140 0h1m121 0h1m143 0h2m6 0h1m-419 1h2m410 0h2m-416 1h2m6 0h2m135 0h1m123 0h1m146 0h2m-420 1h2m6 0h2m410 0h1m-423 1h2m7 0h1m137 0h1m127 0h1m131 0h1m-401 1h2m399 0h2m-405 1h2m7 0h2m130 0h1m129 0h1m133 0h2m-409 1h2m7 0h2m391 0h1m6 0h1m-411 1h1m8 0h1m133 0h1m131 0h1m128 0h2m5 0h2m-406 1h2m5 0h2m390 0h2m5 0h2m-410 1h2m5 0h2m128 0h1m133 0h1m131 0h1m6 0h2m-414 1h2m6 0h1m389 0h1m7 0h2m-409 1h1m6 0h2m130 0h1m135 0h1m124 0h2m7 0h2m-406 1h2m395 0h2m7 0h2m-410 1h2m133 0h1m137 0h1m120 0h1m6 0h1m-403 1h1m15 0h1m379 0h2m5 0h2m-391 1h2m119 0h1m139 0h1m122 0h1m6 0h2m-395 1h2m385 0h2m6 0h2m-398 1h1m121 0h1m143 0h1m123 0h2m-394 1h2m5 0h2m385 0h1m-397 1h2m6 0h1m116 0h1m145 0h1m125 0h2m-401 1h2m7 0h1m375 0h1m15 0h1m-403 1h1m7 0h2m6 0h1m110 0h1m147 0h1m111 0h2m-382 1h1m6 0h2m373 0h2m-385 1h1m6 0h1m112 0h1m149 0h1m107 0h1m6 0h1m-388 1h2m5 0h2m5 0h1m366 0h2m5 0h2m-391 1h1m5 0h2m5 0h2m107 0h1m151 0h1m109 0h1m6 0h2m-388 1h1m6 0h1m366 0h1m5 0h1m7 0h2m-392 1h2m6 0h1m109 0h1m153 0h1m104 0h2m4 0h2m-386 1h1m6 0h2m371 0h1m5 0h1m-381 1h1m110 0h1m157 0h1m99 0h1m5 0h1m5 0h1m-383 1h1m12 0h1m357 0h1m5 0h2m4 0h2m-387 1h2m11 0h2m98 0h1m159 0h1m100 0h1m6 0h1m-370 1h1m362 0h1m6 0h1m-372 1h1m6 0h1m93 0h1m161 0h1m101 0h1m6 0h2m-376 1h2m6 0h1m359 0h2m-371 1h1m6 0h2m94 0h1m163 0h1m91 0h1m11 0h1m-373 1h1m6 0h1m5 0h1m347 0h1m11 0h1m-376 1h2m6 0h1m5 0h1m90 0h1m165 0h1m92 0h1m11 0h1m-370 1h1m4 0h2m345 0h1m5 0h1m-360 1h1m4 0h1m6 0h1m85 0h1m167 0h1m87 0h1m5 0h1m-363 1h2m4 0h1m6 0h1m343 0h2m4 0h2m-366 1h1m5 0h1m5 0h2m86 0h1m169 0h1m83 0h1m5 0h1m5 0h1m-362 1h1m5 0h1m343 0h1m5 0h1m5 0h1m-365 1h2m5 0h1m87 0h1m173 0h1m83 0h1m5 0h1m5 0h1m-367 1h1m6 0h1m341 0h1m5 0h1m5 0h1m5 0h1m-362 1h1m11 0h1m76 0h1m175 0h1m78 0h1m5 0h1m5 0h2m-360 1h2m11 0h1m333 0h1m5 0h2m5 0h1m-362 1h1m12 0h1m77 0h1m177 0h1m79 0h1m6 0h1m-345 1h1m4 0h1m332 0h1m6 0h1m-347 1h1m4 0h1m73 0h1m179 0h1m80 0h1m6 0h1m-350 1h2m4 0h1m325 0h1m10 0h1m6 0h1m-352 1h1m5 0h1m5 0h1m68 0h1m181 0h1m70 0h1m10 0h1m-347 1h1m5 0h1m5 0h1m323 0h1m10 0h1m-349 1h1m5 0h1m5 0h1m69 0h1m183 0h1m65 0h1m5 0h1m10 0h1m-351 1h1m5 0h1m5 0h1m5 0h1m315 0h1m5 0h1m-336 1h1m5 0h1m5 0h1m63 0h1m187 0h1m65 0h1m5 0h1m-338 1h1m4 0h2m5 0h1m313 0h1m5 0h1m4 0h1m-339 1h1m4 0h1m6 0h1m64 0h1m189 0h1m60 0h1m5 0h1m4 0h1m-336 1h1m6 0h1m312 0h1m4 0h1m5 0h1m4 0h1m-338 1h1m5 0h2m10 0h1m54 0h1m191 0h1m56 0h1m4 0h1m4 0h1m5 0h1m-340 1h1m5 0h1m11 0h1m305 0h1m4 0h1m4 0h1m5 0h1m-336 1h1m11 0h1m55 0h1m193 0h1m57 0h1m4 0h1m4 0h1m-332 1h1m11 0h1m5 0h1m303 0h1m4 0h1m4 0h1m-334 1h1m11 0h1m5 0h1m294 0h1m10 0h1m4 0h1m4 0h1m-324 1h1m5 0h1m4 0h1m291 0h1m9 0h1m5 0h1m-321 1h1m5 0h1m4 0h1m293 0h1m9 0h1m5 0h1m-323 1h1m5 0h1m4 0h1m289 0h1m4 0h1m10 0h1m-319 1h1m5 0h1m5 0h1m4 0h1m285 0h1m4 0h1m10 0h1m-321 1h1m6 0h1m4 0h1m4 0h1m282 0h1m4 0h1m4 0h1m10 0h1m-316 1h1m4 0h1m4 0h1m284 0h1m3 0h1m5 0h1m-307 1h1m4 0h1m4 0h1m286 0h1m3 0h1m5 0h1m-309 1h1m4 0h1m4 0h1m282 0h1m4 0h1m4 0h1m5 0h1m-311 1h1m4 0h1m4 0h1m10 0h1m273 0h1m4 0h1m4 0h1m4 0h1m-306 1h1m4 0h1m9 0h1m274 0h1m5 0h1m4 0h1m4 0h1m-308 1h1m4 0h1m9 0h1m4 0h1m271 0h1m5 0h1m4 0h1m-300 1h1m9 0h1m4 0h1m273 0h1m5 0h1m3 0h1m-301 1h1m9 0h1m5 0h1m3 0h1m260 0h1m9 0h1m5 0h1m3 0h1m-303 1h1m9 0h1m5 0h1m3 0h1m262 0h1m8 0h1m5 0h1m-289 1h1m4 0h1m4 0h1m3 0h1m254 0h1m3 0h1m9 0h1m5 0h1m-291 1h1m4 0h1m4 0h1m3 0h1m256 0h1m3 0h1m9 0h1m-287 1h1m5 0h1m3 0h1m4 0h1m256 0h1m4 0h1m9 0h1m-289 1h1m5 0h1m3 0h1m4 0h1m253 0h1m4 0h1m4 0h1m8 0h1m-284 1h1m4 0h1m4 0h1m249 0h1m3 0h1m5 0h1m3 0h1m-276 1h1m4 0h1m4 0h1m9 0h1m241 0h1m3 0h1m4 0h1m4 0h1m-277 1h1m3 0h1m4 0h1m9 0h1m242 0h1m4 0h1m4 0h1m4 0h1m-275 1h1m5 0h1m9 0h1m3 0h1m239 0h1m4 0h1m3 0h1m5 0h1m-276 1h1m4 0h1m9 0h1m3 0h1m240 0h1m4 0h1m4 0h1m4 0h1m-271 1h1m8 0h1m4 0h1m4 0h1m227 0h1m8 0h1m4 0h1m4 0h1m-268 1h1m9 0h1m3 0h1m4 0h1m228 0h1m9 0h1m4 0h1m3 0h1m-268 1h1m8 0h1m4 0h1m4 0h1m3 0h1m221 0h1m3 0h1m8 0h1m5 0h1m3 0h1m-260 1h1m3 0h1m4 0h1m3 0h1m222 0h1m3 0h1m9 0h1m4 0h1m-257 1h1m3 0h1m5 0h1m3 0h1m218 0h1m4 0h1m3 0h1m8 0h1m5 0h1m-259 1h1m4 0h1m4 0h1m3 0h1m215 0h1m3 0h1m4 0h1m4 0h1m8 0h1m-254 1h1m3 0h1m4 0h1m4 0h1m8 0h1m207 0h1m3 0h1m4 0h1m3 0h1m8 0h1m-255 1h1m4 0h1m4 0h1m3 0h1m8 0h1m3 0h1m204 0h1m3 0h1m5 0h1m3 0h1m8 0h1m-252 1h1m4 0h1m3 0h1m9 0h1m3 0h1m205 0h1m3 0h1m4 0h1m3 0h1m-243 1h1m4 0h1m3 0h1m8 0h1m3 0h1m4 0h1m192 0h1m8 0h1m4 0h1m4 0h1m3 0h1m-240 1h1m3 0h1m9 0h1m3 0h1m3 0h1m194 0h1m8 0h1m3 0h1m4 0h1m3 0h1m-240 1h1m3 0h1m8 0h1m3 0h1m4 0h1m4 0h1m184 0h1m4 0h1m8 0h1m4 0h1m4 0h1m3 0h1m-238 1h1m9 0h1m3 0h1m3 0h1m4 0h1m182 0h1m3 0h1m4 0h1m8 0h1m3 0h1m4 0h1m-234 1h1m8 0h1m3 0h1m4 0h1m4 0h1m182 0h1m3 0h1m4 0h1m8 0h1m4 0h1m4 0h1m-226 1h1m3 0h1m3 0h1m4 0h1m179 0h1m4 0h1m3 0h1m4 0h1m8 0h1m3 0h1m-222 1h1m3 0h1m4 0h1m4 0h1m8 0h1m2 0h1m168 0h1m3 0h1m3 0h1m4 0h1m8 0h1m4 0h1m-223 1h1m3 0h1m3 0h1m4 0h1m8 0h1m3 0h1m160 0h1m7 0h1m4 0h1m3 0h1m4 0h1m8 0h1m-220 1h1m3 0h1m4 0h1m4 0h1m8 0h1m2 0h1m4 0h1m156 0h1m8 0h1m3 0h1m3 0h1m4 0h1m8 0h1m-216 1h1m3 0h1m4 0h1m8 0h1m3 0h1m4 0h1m3 0h1m148 0h1m4 0h1m7 0h1m4 0h1m3 0h1m4 0h1m-209 1h1m4 0h1m4 0h1m8 0h1m2 0h1m4 0h1m4 0h1m144 0h1m3 0h1m4 0h1m7 0h1m4 0h1m3 0h1m4 0h1m-205 1h1m4 0h1m8 0h1m3 0h1m4 0h1m3 0h1m142 0h1m2 0h1m4 0h1m4 0h1m7 0h1m3 0h1m4 0h1m4 0h1m-206 1h1m4 0h1m8 0h1m3 0h1m3 0h1m4 0h1m7 0h1m134 0h1m3 0h1m3 0h1m4 0h1m7 0h1m4 0h1m3 0h1m-197 1h1m9 0h1m2 0h1m4 0h1m3 0h1m8 0h1m3 0h1m122 0h1m8 0h1m2 0h1m4 0h1m3 0h1m7 0h1m4 0h1m4 0h1m-198 1h1m8 0h1m3 0h1m4 0h1m3 0h1m7 0h1m4 0h1m3 0h1m114 0h1m3 0h1m8 0h1m3 0h1m3 0h1m4 0h1m7 0h1m4 0h1m-185 1h1m3 0h1m3 0h1m4 0h1m7 0h1m3 0h1m4 0h1m3 0h1m107 0h1m2 0h1m4 0h1m7 0h1m3 0h1m3 0h1m4 0h1m7 0h1m4 0h1m-186 1h1m3 0h1m4 0h1m3 0h1m8 0h1m3 0h1m3 0h1m4 0h1m103 0h1m3 0h1m3 0h1m3 0h1m8 0h1m2 0h1m4 0h1m3 0h1m8 0h1m-182 1h1m3 0h1m4 0h1m3 0h1m7 0h1m4 0h1m3 0h1m3 0h1m7 0h1m3 0h1m92 0h1m3 0h1m3 0h1m3 0h1m8 0h1m3 0h1m3 0h1m4 0h1m7 0h1m-179 1h1m4 0h1m4 0h1m7 0h1m3 0h1m4 0h1m3 0h1m7 0h1m3 0h1m3 0h1m80 0h1m7 0h1m4 0h1m2 0h1m3 0h1m8 0h1m3 0h1m3 0h1m4 0h1m-171 1h1m4 0h1m3 0h1m8 0h1m3 0h1m3 0h1m4 0h1m7 0h1m3 0h1m3 0h1m3 0h1m72 0h1m3 0h1m8 0h1m3 0h1m2 0h1m4 0h1m7 0h1m3 0h1m4 0h1m4 0h1m-168 1h1m4 0h1m8 0h1m3 0h1m3 0h1m3 0h1m7 0h1m3 0h1m4 0h1m3 0h1m7 0h1m56 0h1m3 0h1m3 0h1m3 0h1m8 0h1m3 0h1m3 0h1m3 0h1m8 0h1m3 0h1m3 0h1m4 0h1m-164 1h1m8 0h1m4 0h1m3 0h1m3 0h1m7 0h1m3 0h1m3 0h1m4 0h1m7 0h1m3 0h1m2 0h1m3 0h1m30 0h1m3 0h1m3 0h1m6 0h1m3 0h1m3 0h1m4 0h1m7 0h1m3 0h1m3 0h1m3 0h1m8 0h1m3 0h1m4 0h1m-160 1h1m8 0h1m3 0h1m4 0h1m3 0h1m7 0h1m3 0h1m3 0h1m4 0h1m7 0h1m3 0h1m2 0h1m3 0h1m7 0h1m3 0h1m3 0h1m2 0h1m7 0h1m3 0h1m3 0h1m3 0h1m6 0h1m3 0h1m3 0h1m4 0h1m7 0h1m4 0h1m2 0h1m4 0h1m7 0h1m4 0h1m-147 1h1m3 0h1m3 0h1m4 0h1m7 0h1m3 0h1m3 0h1m3 0h1m8 0h1m3 0h1m2 0h1m3 0h1m7 0h1m3 0h1m3 0h1m2 0h1m7 0h1m3 0h1m3 0h1m3 0h1m6 0h1m4 0h1m3 0h1m3 0h1m8 0h1m3 0h1m3 0h1m3 0h1m8 0h1m-144 1h1m4 0h1m3 0h1m3 0h1m7 0h1m3 0h1m4 0h1m3 0h1m7 0h1m3 0h1m3 0h1m3 0h1m7 0h1m3 0h1m3 0h1m2 0h1m7 0h1m3 0h1m3 0h1m3 0h1m7 0h1m3 0h1m3 0h1m3 0h1m8 0h1m3 0h1m3 0h1m3 0h1m8 0h1m-140 1h1m4 0h1m3 0h1m7 0h1m3 0h1m3 0h1m4 0h1m7 0h1m3 0h1m3 0h1m3 0h1m7 0h1m3 0h1m3 0h1m2 0h1m7 0h1m3 0h1m3 0h1m3 0h1m7 0h1m3 0h1m3 0h1m4 0h1m7 0h1m3 0h1m3 0h1m3 0h1m-131 1h1m3 0h1m4 0h1m7 0h1m3 0h1m3 0h1m4 0h1m7 0h1m3 0h1m3 0h1m3 0h1m7 0h1m3 0h1m3 0h1m2 0h1m7 0h1m3 0h1m3 0h1m3 0h1m7 0h1m3 0h1m3 0h1m4 0h1m7 0h1m3 0h1m3 0h1m4 0h1m-128 1h1m3 0h1m8 0h1m3 0h1m3 0h1m4 0h1m7 0h1m3 0h1m3 0h1m3 0h1m7 0h1m3 0h1m3 0h1m2 0h1m7 0h1m3 0h1m3 0h1m3 0h1m7 0h1m3 0h1m3 0h1m4 0h1m7 0h1m4 0h1m3 0h1m-120 1h1m7 0h1m4 0h1m3 0h1m4 0h1m7 0h1m3 0h1m2 0h1m3 0h1m8 0h1m3 0h1m3 0h1m2 0h1m7 0h1m4 0h1m3 0h1m3 0h1m6 0h1m3 0h1m3 0h1m4 0h1m8 0h1m3 0h1m-108 1h1m3 0h1m4 0h1m3 0h1m8 0h1m3 0h1m2 0h1m3 0h1m8 0h1m3 0h1m3 0h1m2 0h1m7 0h1m4 0h1m3 0h1m3 0h1m6 0h1m3 0h1m4 0h1m4 0h1m7 0h1m-100 1h1m3 0h1m4 0h1m7 0h1m4 0h1m2 0h1m3 0h1m8 0h1m3 0h1m3 0h1m2 0h1m7 0h1m4 0h1m3 0h1m3 0h1m7 0h1m3 0h1m3 0h1m4 0h1m-88 1h1m4 0h1m7 0h1m3 0h1m3 0h1m3 0h1m8 0h1m3 0h1m3 0h1m2 0h1m7 0h1m4 0h1m3 0h1m3 0h1m7 0h1m3 0h1m3 0h1m4 0h1m-83 1h1m7 0h1m3 0h1m3 0h1m3 0h1m8 0h1m3 0h1m3 0h1m2 0h1m7 0h1m4 0h1m3 0h1m3 0h1m7 0h1m3 0h1m3 0h1m-70 1h1m3 0h1m3 0h1m3 0h1m8 0h1m3 0h1m3 0h1m2 0h1m7 0h1m4 0h1m3 0h1m3 0h1m7 0h1m3 0h1m-62 1h1m3 0h1m3 0h1m8 0h1m3 0h1m3 0h1m2 0h1m7 0h1m4 0h1m3 0h1m3 0h1m-33 1h1m3 0h1m3 0h1m2 0h1m7 0h1"/>
<path stroke="#ff0000" d="M0 0m296 29h5m-2 1h2m-3 1h1m1 0h1m-4 1h1m2 0h1m-5 1h1m3 0h1m-6 1h1m-10 1h1m7 0h1m-8 1h1m5 0h1m-6 1h1m3 0h1m-4 1h1m1 0h1m-2 1h1m-2 1h1m1 0h1m-4 1h1m3 0h1m-6 1h1m5 0h1m-8 1h1m7 0h1m-10 1h1m-2 1h1m459 61h1m7 0h1m-8 1h1m5 0h1m-6 1h1m3 0h1m-5 1h1m3 0h1m-7 1h9m-7 1h1m3 0h1m-5 1h1m3 0h1m-6 1h1m5 0h1m-8 1h1m7 0h1m-495 2h5m-7 1h2m5 0h2m-10 1h1m9 0h1m-12 1h1m11 0h1m-14 1h1m13 0h1m-15 1h1m13 0h1m-16 1h1m15 0h1m-17 1h1m15 0h1m-17 1h1m7 0h1m7 0h1m-17 1h1m15 0h1m-17 1h1m15 0h1m-16 1h1m13 0h1m-15 1h1m13 0h1m-14 1h1m11 0h1m-12 1h1m9 0h1m-10 1h2m5 0h2m-7 1h5m484 15h3m-5 1h2m3 0h2m-8 1h1m4 0h1m2 0h1m-8 1h2m2 0h1m2 0h1m-478 1h1m468 0h1m2 0h1m2 0h2m-8 1h1m2 0h1m4 0h1m-8 1h2m3 0h2m-5 1h3m-468 3h1m14 0h1m3 0h1m-21 1h1m-7 1h1m5 0h1m17 0h1m-26 1h1m5 0h1m13 0h1m2 0h1m-25 1h1m5 0h1m51 0h1m-60 1h1m5 0h1m-8 1h2m4 0h2m13 0h2m1 0h1m32 0h1m-58 1h1m4 0h2m47 0h1m-56 1h1m5 0h1m48 0h1m-57 1h1m5 0h1m13 0h1m32 0h1m28 0h1m-83 1h1m4 0h1m14 0h1m2 0h1m29 0h1m26 0h1m-77 1h2m44 0h1m27 0h1m-81 1h1m4 0h2m12 0h1m29 0h1m2 0h1m25 0h1m-80 1h1m4 0h2m12 0h1m57 0h1m-78 1h1m4 0h1m16 0h1m24 0h1m2 0h1m24 0h1m-78 1h2m4 0h2m11 0h1m26 0h1m28 0h1m-76 1h1m4 0h2m66 0h1m-74 1h1m3 0h2m11 0h1m25 0h1m5 0h1m21 0h1m-74 1h2m3 0h2m12 0h1m2 0h1m48 0h1m-72 1h1m4 0h2m35 0h1m5 0h1m18 0h1m1 0h1m-71 1h1m4 0h2m9 0h1m23 0h1m25 0h1m-68 1h2m3 0h2m11 0h1m28 0h1m17 0h1m-66 1h1m3 0h2m14 0h1m17 0h1m24 0h1m-65 1h1m3 0h2m8 0h1m30 0h1m16 0h1m-65 1h2m3 0h1m1 0h1m10 0h1m19 0h1m23 0h1m-62 1h1m3 0h2m28 0h1m8 0h1m15 0h1m-61 1h1m3 0h2m13 0h1m38 0h1m-61 1h2m3 0h2m7 0h1m2 0h1m16 0h1m8 0h1m14 0h1m-59 1h1m3 0h1m1 0h1m24 0h1m24 0h1m-57 1h1m2 0h1m1 0h1m34 0h1m11 0h1m1 0h1m434 0h1m1 0h1m1 0h1m-497 1h1m1 0h1m2 0h1m1 0h1m5 0h1m3 0h1m3 0h1m9 0h1m21 0h1m439 0h1m1 0h1m1 0h1m-497 1h1m3 0h2m33 0h1m10 0h1m441 0h1m1 0h1m1 0h1m-498 1h1m3 0h2m22 0h1m20 0h1m443 0h1m1 0h1m1 0h1m-500 1h1m1 0h1m2 0h1m1 0h1m9 0h1m9 0h1m11 0h1m9 0h1m445 0h1m1 0h1m1 0h1m-499 1h1m2 0h1m1 0h1m4 0h1m7 0h1m27 0h1m447 0h1m1 0h1m1 0h1m-500 1h1m2 0h1m1 0h1m18 0h1m11 0h1m8 0h1m449 0h1m1 0h1m1 0h1m2 0h1m-505 1h1m1 0h1m1 0h1m1 0h1m9 0h1m28 0h1m451 0h1m1 0h1m1 0h1m2 0h1m-504 1h1m2 0h1m1 0h1m2 0h1m13 0h1m11 0h1m7 0h1m458 0h2m-504 1h1m2 0h1m1 0h1m11 0h1m2 0h1m20 0h1m-45 1h1m1 0h1m2 0h1m1 0h1m8 0h1m18 0h1m4 0h1m1 0h1m-41 1h1m1 0h1m1 0h1m1 0h1m11 0h1m17 0h1m-38 1h1m1 0h1m2 0h1m10 0h1m14 0h1m3 0h1m-39 1h1m1 0h1m2 0h1m1 0h1m7 0h1m2 0h1m17 0h1m-36 1h1m2 0h1m1 0h1m9 0h1m14 0h1m2 0h1m-34 1h1m1 0h1m1 0h2m25 0h1m-35 1h1m1 0h1m1 0h1m1 0h1m8 0h1m14 0h1m1 0h1m-32 1h1m1 0h1m2 0h1m5 0h1m3 0h1m13 0h1m-31 1h1m1 0h1m1 0h2m21 0h2m-32 1h1m2 0h1m1 0h1m1 0h1m4 0h1m2 0h1m13 0h1m-28 1h1m1 0h1m1 0h1m18 0h1m1 0h1m-27 1h1m1 0h1m2 0h1m2 0h1m6 0h1m6 0h1m-26 1h1m2 0h3m1 0h2m5 0h1m8 0h1m2 0h1m-25 1h2m2 0h1m14 0h1m-21 1h2m2 0h1m13 0h1m3 0h1m-26 1h1m1 0h3m1 0h1m6 0h1m2 0h1m2 0h1m-18 1h2m2 0h1m10 0h1m4 0h1m-22 1h2m2 0h1m9 0h1m-19 1h1m1 0h3m2 0h1m6 0h1m1 0h1m5 0h1m-22 1h3m2 0h1m7 0h2m-18 1h1m3 0h2m2 0h1m5 0h1m6 0h1m-22 1h1m2 0h2m2 0h1m2 0h1m1 0h2m-17 1h1m2 0h1m1 0h2m2 0h1m1 0h1m9 0h1m-18 1h2m2 0h2m6 0h1m-20 1h1m3 0h1m2 0h1m2 0h2m4 0h1m4 0h1m-25 1h1m4 0h1m3 0h1m1 0h1m1 0h1m-6 1h2m2 0h1m8 0h1m-25 1h1m6 0h1m2 0h2m2 0h1m4 0h1m2 0h1m-26 1h1m10 0h1m1 0h1m2 0h1m7 0h1m-18 1h1m1 0h1m2 0h1m3 0h1m-20 1h1m9 0h2m2 0h1m3 0h1m3 0h1m1 0h1m-19 1h1m1 0h1m4 0h2m2 0h1m6 0h1m-28 1h1m6 0h1m1 0h1m6 0h1m2 0h1m4 0h1m-28 1h1m7 0h1m6 0h1m2 0h1m3 0h1m3 0h1m-21 1h1m10 0h1m3 0h1m2 0h1m-28 1h1m6 0h1m3 0h1m7 0h2m2 0h1m5 0h1m-97 1h1m71 0h1m9 0h1m2 0h2m2 0h1m1 0h1m1 0h1m-95 1h1m64 0h1m5 0h1m13 0h2m2 0h1m-101 1h3m7 0h1m62 0h1m6 0h1m15 0h1m3 0h1m-98 1h1m6 0h1m67 0h1m7 0h1m5 0h1m2 0h2m2 0h1m2 0h1m1 0h1m-101 1h1m5 0h1m59 0h1m5 0h1m17 0h2m1 0h2m525 0h3m-623 1h1m5 0h1m56 0h1m4 0h1m1 0h1m18 0h2m2 0h1m524 0h2m3 0h2m-625 1h1m5 0h1m59 0h1m11 0h1m6 0h1m2 0h3m2 0h1m1 0h1m522 0h1m5 0h1m-626 1h1m6 0h1m53 0h1m3 0h1m23 0h2m2 0h1m3 0h1m520 0h1m7 0h1m-628 1h1m7 0h1m55 0h1m24 0h2m2 0h1m525 0h1m3 0h1m3 0h1m-628 1h1m7 0h1m50 0h1m2 0h1m22 0h1m2 0h2m2 0h1m2 0h1m523 0h1m7 0h1m-628 1h1m7 0h1m47 0h1m3 0h1m15 0h1m9 0h2m1 0h1m2 0h1m527 0h1m5 0h1m-628 1h1m8 0h1m49 0h1m27 0h1m1 0h1m2 0h1m3 0h1m524 0h2m3 0h2m-629 1h1m9 0h1m44 0h1m2 0h1m26 0h1m1 0h1m1 0h1m2 0h1m1 0h1m529 0h3m-627 1h1m9 0h1m45 0h1m17 0h1m10 0h1m1 0h2m2 0h1m-92 1h15m37 0h1m1 0h1m31 0h1m1 0h1m1 0h1m-81 1h1m38 0h2m1 0h1m29 0h1m2 0h1m1 0h1m2 0h2m1 0h1m-84 1h1m37 0h1m21 0h1m13 0h1m1 0h1m2 0h1m-44 1h1m32 0h1m3 0h1m1 0h1m2 0h1m-54 1h1m8 0h1m35 0h1m1 0h1m2 0h1m1 0h2m-47 1h1m33 0h1m5 0h1m1 0h1m2 0h1m1 0h1m-24 1h1m14 0h1m1 0h1m2 0h1m-14 1h1m4 0h1m1 0h1m1 0h1m2 0h2m-8 1h1m2 0h1m1 0h1m-23 1h1m7 0h1m7 0h1m2 0h1m1 0h1m1 0h1m-11 1h1m2 0h1m1 0h1m2 0h1m-17 1h1m9 0h1m2 0h1m1 0h1m-7 1h1m2 0h1m1 0h1m-24 1h1m5 0h1m8 0h1m1 0h1m2 0h1m1 0h2m-8 1h1m2 0h1m-17 1h1m11 0h1m-20 1h1m16 0h1m1 0h1m3 0h2m-21 1h1m16 0h1m1 0h2m-5 1h1m2 0h1m-28 1h1m4 0h1m14 0h1m3 0h3m-75 1h5m62 0h1m3 0h1m1 0h1m-71 1h2m45 0h1m15 0h1m3 0h1m1 0h1m-71 1h1m1 0h1m59 0h1m1 0h1m2 0h3m-71 1h1m2 0h1m39 0h1m2 0h1m17 0h1m3 0h1m1 0h1m-72 1h1m3 0h1m59 0h1m3 0h1m1 0h1m-72 1h1m44 0h1m17 0h2m3 0h3m-78 1h3m3 0h1m41 0h1m21 0h1m4 0h2m-78 1h1m3 0h1m1 0h1m43 0h1m20 0h1m3 0h1m1 0h1m-79 1h1m5 0h1m62 0h1m1 0h1m2 0h2m1 0h1m-79 1h1m7 0h1m40 0h1m21 0h1m3 0h1m1 0h1m-79 1h1m9 0h1m37 0h1m22 0h1m4 0h2m559 0h3m-640 1h1m9 0h1m36 0h1m21 0h2m2 0h1m1 0h2m561 0h2m-640 1h1m9 0h1m27 0h1m30 0h1m4 0h1m1 0h1m560 0h1m1 0h1m-639 1h1m7 0h1m59 0h1m2 0h2m1 0h1m557 0h2m1 0h1m-635 1h1m5 0h1m58 0h2m2 0h1m1 0h2m557 0h1m2 0h1m-633 1h1m3 0h1m59 0h1m4 0h2m557 0h1m4 0h1m-633 1h3m59 0h1m4 0h1m1 0h1m557 0h1m4 0h1m-573 1h2m2 0h3m1 0h1m559 0h1m2 0h1m-572 1h1m5 0h2m561 0h2m-571 1h1m4 0h2m-9 1h2m1 0h1m2 0h1m1 0h1m567 0h1m-577 1h1m2 0h1m2 0h2m562 0h2m3 0h1m-577 1h1m5 0h2m565 0h1m2 0h1m-579 1h2m1 0h1m3 0h2m566 0h1m2 0h1m-579 1h1m5 0h2m566 0h1m3 0h1m-579 1h1m1 0h1m3 0h2m566 0h1m3 0h1m-581 1h2m1 0h1m3 0h2m566 0h1m4 0h1m-581 1h1m5 0h2m567 0h8m-584 1h1m5 0h2m573 0h1m-583 1h1m1 0h1m4 0h2m-9 1h1m5 0h2m-9 1h1m5 0h2m-10 1h3m4 0h2m-9 1h2m5 0h1m-9 1h1m6 0h2m-10 1h2m5 0h2m-9 1h1m5 0h2m-9 1h2m5 0h1m-9 1h2m5 0h2m-10 1h1m6 0h2m-10 1h1m7 0h1m-10 1h2m6 0h1m-9 1h1m6 0h2m-10 1h1m6 0h2m-10 1h1m7 0h1m-15 1h1m12 0h1m-2 1h1m-2 1h2m-2 1h1m-2 1h1m-2 1h1m-2 1h2m-2 1h1m-2 1h1m370 96h5m-6 1h1m5 0h1m-8 1h1m7 0h1m-10 1h1m9 0h1m-12 1h1m11 0h1m-13 1h1m11 0h1m-13 1h1m11 0h1m-13 1h1m11 0h1m-13 1h1m11 0h1m-12 1h1m9 0h1m-10 1h1m7 0h1m-9 1h1m7 0h1m-13 1h1m3 0h1m7 0h1m-465 1h3m7 0h3m440 0h1m1 0h1m9 0h1m-467 1h1m3 0h1m5 0h1m3 0h1m440 0h1m11 0h1m-469 1h1m5 0h1m3 0h1m5 0h1m452 0h1m-470 1h1m5 0h1m3 0h1m5 0h1m453 0h1m-471 1h1m5 0h1m3 0h1m5 0h1m-16 1h1m4 0h1m3 0h1m4 0h1m-14 1h1m3 0h1m3 0h1m3 0h1m-8 1h1m1 0h1m-2 1h1m-1 1h1m-1 1h1m-1 1h1m-1 1h1m-1 1h1m-1 1h1m-1 1h1m-1 1h1"/>
<path stroke="#00ff00" d="M0 0m275 112h1m7 0h1m-8 1h1m5 0h1m-6 1h5m-6 1h1m5 0h1m-8 1h1m7 0h1m-9 1h1m7 0h1m52 0h1m11 0h1m-74 1h1m7 0h1m53 0h1m9 0h1m-73 1h1m7 0h1m54 0h1m7 0h1m-72 1h1m7 0h1m54 0h1m7 0h1m-71 1h1m5 0h1m55 0h1m3 0h1m3 0h1m-70 1h5m56 0h1m3 0h1m3 0h1m-68 1h1m58 0h9m-68 1h1m58 0h1m3 0h1m3 0h1m-68 1h1m58 0h1m3 0h1m3 0h1m-72 1h9m53 0h1m4 0h1m4 0h1m397 0h1m5 0h1m-473 1h1m56 0h1m5 0h1m5 0h1m397 0h1m3 0h1m-472 1h1m62 0h1m404 0h3m-409 1h3m402 0h1m3 0h1m-411 1h1m3 0h1m400 0h1m5 0h1m-412 1h1m3 0h1m400 0h1m5 0h1m-412 1h1m3 0h1m400 0h1m5 0h1m-411 1h3m402 0h1m3 0h1m-4 1h3m-344 14h5m-6 1h1m5 0h1m-130 1h1m121 0h1m7 0h1m-9 1h1m7 0h1m-9 1h1m7 0h1m-9 1h1m7 0h1m-78 1h1m68 0h1m7 0h1m-114 1h1m105 0h1m5 0h1m-6 1h5m-109 1h1m105 0h1m-1 1h1m111 0h5m-229 1h1m111 0h1m110 0h1m5 0h1m-226 1h1m103 0h9m105 0h1m7 0h1m-119 1h1m109 0h1m7 0h1m-119 1h1m109 0h1m7 0h1m-233 1h1m3 0h1m31 0h1m77 0h1m110 0h1m5 0h1m-118 1h1m105 0h7m3 0h7m-235 2h1m55 0h1m391 0h1m1 0h1m1 0h1m-685 1h1m5 0h1m5 0h1m214 0h1m35 0h1m22 0h2m393 0h1m1 0h1m1 0h1m1 0h1m-689 1h2m4 0h2m4 0h1m273 0h2m163 0h17m214 0h1m1 0h1m1 0h3m-690 1h1m1 0h1m3 0h1m1 0h1m3 0h1m218 0h1m54 0h1m396 0h1m1 0h1m1 0h1m1 0h1m-690 1h1m2 0h1m2 0h1m2 0h1m2 0h1m271 0h2m397 0h1m1 0h1m1 0h1m1 0h1m-690 1h1m3 0h1m1 0h1m3 0h1m1 0h1m249 0h1m20 0h2m398 0h1m1 0h1m1 0h1m1 0h1m-691 1h1m4 0h2m4 0h2m217 0h1m52 0h1m400 0h1m1 0h1m1 0h1m1 0h1m-692 1h1m5 0h1m5 0h1m269 0h2m401 0h1m1 0h1m2 0h1m-409 1h1m406 0h1m1 0h1m-466 1h1m2 0h1m30 0h1m19 0h2m-4 1h1m-275 1h1m5 0h1m5 0h1m261 0h1m-276 1h2m4 0h2m4 0h1m211 0h1m48 0h2m-276 1h1m1 0h1m3 0h1m1 0h1m3 0h1m208 0h1m33 0h1m16 0h3m-275 1h1m2 0h1m2 0h1m2 0h1m2 0h1m259 0h1m54 0h1m-328 1h1m3 0h1m1 0h1m3 0h1m1 0h1m210 0h1m46 0h2m-273 1h1m4 0h2m4 0h2m256 0h3m-273 1h1m5 0h1m5 0h1m208 0h1m31 0h1m16 0h1m-48 1h1m44 0h2m-4 1h1m1 0h1m56 0h2m-61 1h2m55 0h2m-107 1h1m2 0h1m28 0h1m13 0h2m54 0h3m-61 1h1m1 0h1m53 0h2m-57 1h1m52 0h2m-99 1h1m40 0h3m50 0h3m-101 1h1m31 0h1m10 0h1m1 0h1m50 0h2m-57 1h1m2 0h1m48 0h3m-94 1h1m39 0h2m47 0h2m-54 1h1m1 0h1m46 0h3m-93 1h1m29 0h1m8 0h1m2 0h1m45 0h2m-88 1h1m38 0h1m43 0h3m-51 1h1m1 0h2m42 0h2m-50 1h1m2 0h1m42 0h2m-86 1h1m2 0h1m26 0h1m9 0h1m40 0h3m-48 1h1m2 0h1m39 0h2m-47 1h1m2 0h2m37 0h3m-43 1h1m37 0h2m-79 1h1m28 0h1m5 0h1m2 0h1m35 0h3m-44 1h1m2 0h2m34 0h2m-72 1h1m32 0h1m34 0h2m-41 1h1m2 0h1m32 0h3m408 0h1m2 0h1m1 0h2m-487 1h1m27 0h1m2 0h1m3 0h1m31 0h2m410 0h2m2 0h2m2 0h1m-486 1h1m30 0h2m29 0h3m413 0h1m1 0h1m1 0h1m2 0h1m-459 1h1m2 0h1m29 0h2m416 0h1m1 0h1m2 0h2m-460 1h1m3 0h1m27 0h3m418 0h1m1 0h1m3 0h1m-490 1h1m2 0h1m24 0h1m4 0h1m26 0h2m422 0h1m5 0h1m-463 1h1m2 0h2m25 0h2m424 0h1m5 0h1m-465 1h1m3 0h1m24 0h3m426 0h1m5 0h1m-490 1h1m22 0h1m4 0h1m23 0h2m434 0h1m-493 1h1m26 0h1m2 0h2m21 0h3m-31 1h1m3 0h1m21 0h2m-51 1h1m20 0h1m4 0h1m19 0h3m-24 1h1m18 0h2m-50 1h1m22 0h1m2 0h3m16 0h3m-46 1h1m18 0h1m4 0h1m16 0h2m-20 1h1m15 0h2m-24 1h1m3 0h2m13 0h3m-44 1h1m2 0h1m16 0h1m4 0h1m13 0h2m-17 1h1m11 0h3m-21 1h1m4 0h1m10 0h2m-35 1h1m14 0h1m4 0h2m8 0h3m-37 1h1m22 0h1m1 0h1m6 0h2m-17 1h1m4 0h1m7 0h2m-30 1h1m12 0h1m5 0h1m5 0h3m-11 1h2m4 0h2m-29 1h1m14 0h1m4 0h1m3 0h3m-25 1h1m10 0h1m5 0h1m2 0h2m-7 1h5m-11 1h1m4 0h3m-22 1h1m2 0h1m8 0h1m4 0h3m3 0h1m-9 1h3m-8 1h1m2 0h4m-16 1h1m6 0h1m1 0h3m1 0h1m-17 1h1m7 0h1m1 0h2m3 0h1m6 0h1m-16 1h3m4 0h1m-14 1h1m3 0h2m5 0h2m-12 1h3m6 0h1m-15 1h1m2 0h2m8 0h1m7 0h1m-21 1h2m2 0h1m5 0h2m-15 1h3m2 0h1m6 0h1m-15 1h2m11 0h1m-17 1h3m1 0h1m1 0h1m1 0h1m6 0h1m9 0h1m-28 1h2m6 0h1m6 0h2m-20 1h3m14 0h1m-20 1h2m9 0h1m6 0h1m-22 1h3m9 0h1m7 0h1m11 0h1m-35 1h2m18 0h2m-24 1h2m12 0h1m1 0h1m4 0h1m-25 1h3m12 0h1m7 0h1m-26 1h2m16 0h1m4 0h2m12 0h1m-41 1h3m15 0h1m3 0h1m2 0h1m508 0h1m3 0h1m-541 1h2m16 0h1m7 0h1m510 0h3m-543 1h3m25 0h1m510 0h1m3 0h1m-546 1h2m19 0h1m3 0h1m1 0h3m14 0h1m496 0h1m3 0h1m-548 1h2m19 0h1m7 0h1m513 0h1m3 0h1m-551 1h3m28 0h1m515 0h3m-552 1h2m22 0h1m7 0h1m517 0h1m-554 1h3m22 0h1m7 0h2m15 0h1m500 0h5m-558 1h2m23 0h1m8 0h1m520 0h1m-559 1h3m33 0h1m1 0h1m-41 1h2m26 0h1m7 0h2m521 0h3m-564 1h2m26 0h1m8 0h1m1 0h1m16 0h1m503 0h1m3 0h1m-568 1h3m36 0h1m3 0h1m519 0h1m3 0h1m-570 1h2m29 0h1m8 0h1m524 0h1m3 0h1m-573 1h3m29 0h1m8 0h2m526 0h3m-574 1h2m40 0h1m3 0h1m1 0h1m14 0h1m508 0h1m-576 1h3m32 0h1m8 0h1m528 0h5m-580 1h2m33 0h1m8 0h2m531 0h1m-581 1h3m43 0h1m7 0h1m525 0h1m-583 1h2m36 0h1m8 0h1m6 0h1m14 0h1m-72 1h2m36 0h1m9 0h1m-52 1h3m46 0h2m8 0h1m-62 1h2m39 0h1m8 0h1m-53 1h2m39 0h1m9 0h1m8 0h1m14 0h1m-26 1h1m10 0h1m-23 1h1m8 0h2m-13 1h1m9 0h1m-2 1h1m11 0h2m11 0h1m-37 1h1m8 0h2m-13 1h1m9 0h1m-13 1h1m10 0h1m14 0h1m-17 1h1m13 0h1m12 0h1m-40 1h1m9 0h2m-14 1h1m10 0h1m16 0h1m-19 1h1m-13 1h1m10 0h1m15 0h1m11 0h1m-42 1h1m10 0h2m17 0h1m-21 1h1m-13 1h1m10 0h1m-3 1h2m18 0h2m9 0h1m-33 1h1m-2 1h1m-2 1h1m21 0h1m-25 1h2m20 0h1m10 0h1m-46 1h1m10 0h1m-14 1h1m11 0h1m23 0h1m-26 1h1m-14 1h1m10 0h2m22 0h1m9 0h1m-48 1h1m11 0h1m25 0h1m-28 1h1m-14 1h1m10 0h2m570 0h1m5 0h1m-592 1h1m11 0h1m26 0h2m7 0h1m537 0h1m3 0h1m-580 1h1m574 0h1m1 0h1m1 0h1m-593 1h1m11 0h1m575 0h5m-583 1h2m28 0h1m547 0h1m1 0h1m1 0h1m-584 1h1m28 0h1m7 0h1m540 0h1m2 0h1m2 0h1m-586 1h1m580 0h3m-585 1h1m30 0h1m550 0h1m1 0h1m-587 1h2m583 0h1m-587 1h1m30 0h1m7 0h1m-41 1h1m32 0h1m-35 1h1m30 2h1m6 0h1m-10 3h1m-2 1h1m5 0h1m-8 2h1m-3 2h1m5 0h1m-7 1h1m-3 3h1m3 0h1m-7 3h1m-2 1h1m3 0h1m-6 2h1m-2 2h1m2 0h1m-5 1h1m-3 3h1m1 0h1m-5 3h1m-2 1h1m1 0h1m-4 2h1m-2 2h1m-2 1h1m-3 3h1m132 198h1m13 0h1m-14 1h1m11 0h1m-12 1h11m-9 1h1m5 0h1m-7 1h1m5 0h1m-7 1h1m5 0h1m-7 1h1m5 0h1m-7 1h1m5 0h1m-7 1h1m5 0h1m-7 1h1m5 0h1m-7 1h1m5 0h1m-7 1h1m5 0h1m-7 1h1m5 0h1m-7 1h1m5 0h1m-9 1h11m-12 1h1m11 0h1m-14 1h1m13 0h1"/>
<path stroke="#ffff00" d="M0 0m156 68h1m5 0h1m3 0h3m-14 1h2m5 0h1m2 0h1m3 0h1m-16 1h1m1 0h1m5 0h1m1 0h1m5 0h1m-15 1h1m4 0h1m1 0h1m6 0h1m-15 1h1m3 0h1m3 0h1m5 0h1m-15 1h1m3 0h1m4 0h1m3 0h1m-14 1h1m3 0h1m5 0h1m1 0h1m-13 1h1m3 0h1m6 0h1m-12 1h1m3 0h1m7 0h1m-12 1h1m1 0h1m9 0h1m-12 1h1m11 0h1m-13 1h1m11 0h1m-13 1h1m11 0h1m-13 1h1m11 0h1m-13 1h1m11 0h1m-2 1h1m-2 1h1m576 32h2m3 0h2m-8 1h1m2 0h1m1 0h1m2 0h1m-9 1h1m2 0h1m1 0h1m2 0h1m-8 1h1m1 0h1m1 0h1m1 0h1m-4 1h1m-1 1h1m-1 1h1m-1 1h1m-386 1h1m384 0h1m-386 1h1m-5 1h9m-5 1h1m-1 1h1m-1 1h1m-1 1h1m3 0h3m-7 1h1m2 0h1m3 0h1m-8 1h3m5 0h1m-9 1h1m7 0h1m-9 1h1m7 0h1m-9 1h1m6 0h1m-8 1h1m5 0h1m-7 1h1m5 0h1m-7 1h1m5 0h1m0 1h1m0 1h1m-73 9h1m-9 6h1m3 0h1m4 0h3m-23 1h1m1 0h1m4 0h1m459 0h3m-474 1h1m1 0h1m467 0h1m3 0h1m-6 1h1m5 0h1m-7 1h1m5 0h1m-398 1h1m390 0h1m5 0h1m-6 1h1m3 0h1m-7 1h1m1 0h1m3 0h1m-6 1h1m5 0h1m0 1h1m-3 32h3m-2 1h2m-3 1h1m1 0h1m-8 1h1m3 0h1m-4 1h1m1 0h1m-2 1h1m-2 1h1m1 0h1m-4 1h1m3 0h1m-6 1h1m-192 80h1m3 0h1m3 0h1m-8 1h1m1 0h1m1 0h1m1 0h1m1 0h1m-8 1h1m3 0h1m3 0h1m3 0h1m-13 1h1m3 0h1m3 0h1m2 0h2m-13 1h1m3 0h1m3 0h1m1 0h1m1 0h1m-13 1h1m3 0h1m3 0h2m2 0h1m-13 1h1m3 0h1m3 0h1m3 0h1m-13 1h1m3 0h1m3 0h1m3 0h1m-13 1h1m3 0h1m3 0h1m3 0h1m-13 1h1m3 0h1m3 0h1m3 0h1m-13 1h1m3 0h1m3 0h1m3 0h1m-13 1h1m3 0h1m3 0h1m3 0h1m-13 1h1m3 0h1m3 0h1m3 0h1m179 0h1m-193 1h1m3 0h1m4 0h1m1 0h1m178 0h5m-195 1h1m3 0h1m5 0h1m181 0h1m-184 1h1m1 0h1m180 0h1m1 0h2m-188 1h1m3 0h1m179 0h2m2 0h1m-5 1h1m3 0h1m-5 1h1m2 0h1m-4 1h1m2 0h1m0 1h1m-583 218h1m11 0h1m-12 1h1m9 0h1m-10 1h1m7 0h1m-8 1h1m5 0h1m-6 1h5m-6 1h1m5 0h1m-8 1h1m7 0h1m-10 1h1m9 0h1m-12 1h1m11 0h1m-13 1h1m11 0h1m-13 1h1m11 0h1m-13 1h1m11 0h1m-13 1h1m11 0h1m-12 1h1m9 0h1m-10 1h1m7 0h1m-8 1h1m5 0h1m-6 1h5"/>
<path stroke="#0000ff" d="M0 0m415 60h1m3 0h1m3 0h1m-8 1h1m1 0h1m1 0h1m1 0h1m1 0h1m-8 1h1m3 0h1m3 0h1m-9 1h1m3 0h1m3 0h1m-9 1h1m3 0h1m3 0h1m-9 1h1m3 0h1m3 0h1m-9 1h1m3 0h1m3 0h1m-9 1h1m3 0h1m3 0h1m-9 1h1m3 0h1m3 0h1m-9 1h1m3 0h1m3 0h1m-9 1h1m3 0h1m3 0h1m-9 1h1m3 0h1m3 0h1m4 0h1m-14 1h1m3 0h1m3 0h1m3 0h3m-15 1h1m3 0h1m3 0h1m4 0h1m-14 1h1m3 0h1m3 0h1m4 0h1m-5 1h1m2 0h1m-3 1h2m-119 36h1m5 0h1m5 0h1m-13 1h1m5 0h1m5 0h1m-14 1h3m2 0h5m2 0h3m-14 1h1m5 0h1m5 0h1m-13 1h1m5 0h1m5 0h1m-12 1h1m4 0h1m4 0h1m-11 1h1m4 0h1m4 0h1m-10 1h2m2 0h1m2 0h2m-7 1h5m-3 1h1m-1 1h1m-1 1h1m-5 1h9m-5 1h1m-1 1h1m-1 1h1m-1 1h1m428 8h1m6 0h1m-7 1h6m-5 1h1m2 0h1m-4 1h1m2 0h1m-4 1h1m2 0h1m-4 1h1m2 0h1m-4 1h1m2 0h1m-5 1h6m-7 1h1m6 0h1m-449 5h1m442 29h3m-4 1h1m3 0h1m-5 1h1m3 0h1m-7 1h4m1 0h4m-9 2h9m-307 14h1m4 0h3m4 0h1m-13 1h1m3 0h1m3 0h1m3 0h1m-13 1h1m3 0h1m3 0h1m3 0h1m-13 1h1m3 0h1m3 0h1m3 0h1m-13 1h1m4 0h3m4 0h1m-12 1h1m9 0h1m-11 1h1m9 0h1m-10 1h2m5 0h2m-7 1h5m-3 1h1m-1 1h1m-1 1h1m-5 1h9m-5 1h1m-1 1h1m-1 1h1m-1 1h1m293 3h1m2 0h1m2 0h1m-8 1h2m1 0h2m1 0h1m-7 1h1m1 0h2m1 0h2m-8 1h1m2 0h1m2 0h1m-325 2h1m319 0h1m2 0h1m2 0h1m-8 1h2m1 0h2m1 0h1m-7 1h1m1 0h2m1 0h2m-8 1h1m2 0h1m2 0h1m-5 22h3m-4 1h1m3 0h2m-5 1h1m3 0h1m-4 1h1m3 0h1m-5 1h1m3 0h1m-5 1h1m3 0h1m-6 1h1m3 0h1m-6 1h1m3 0h2m-5 1h3m-720 44h1m15 0h1m-16 1h1m13 0h1m-14 1h1m11 0h1m-12 1h1m9 0h1m-11 1h1m9 0h1m-10 1h1m7 0h1m-9 1h1m7 0h1m-9 1h1m7 0h1m-13 1h17m-13 1h1m7 0h1m-9 1h1m7 0h1m-9 1h1m7 0h1m-10 1h1m9 0h1m-11 1h1m9 0h1m-12 1h1m11 0h1m-14 1h1m13 0h1m-16 1h1m15 0h1m699 2h1m2 0h1m2 0h1m-8 1h2m1 0h3m1 0h2m-8 1h1m2 0h1m2 0h1m-6 1h1m1 0h1m1 0h1m-4 1h3m-2 1h1m-3 1h5m-3 1h1m-1 1h1m-4 2h1m2 0h1m2 0h1m-7 1h1m1 0h1m1 0h1m1 0h1m-7 1h1m2 0h1m2 0h1m-6 1h1m3 0h1m-4 1h3m-2 1h1m-3 1h5m-3 1h1m-1 1h1m-588 24h1m-32 3h5m-6 1h1m5 0h2m-9 1h1m8 0h1m-9 1h1m8 0h1m-9 1h1m8 0h1m-9 1h1m7 0h1m-9 1h1m8 0h1m-9 1h1m7 0h1m-9 1h1m7 0h1m-9 1h1m7 0h1m-10 1h1m8 0h1m-10 1h1m7 0h1m-10 1h1m8 0h1m-11 1h1m8 0h1m-11 1h1m8 0h1m-9 1h1m5 0h2m-7 1h5m299 138h5m-8 1h3m5 0h1m-10 1h1m9 0h3m-14 1h1m9 0h1m3 0h1m-16 1h1m9 0h1m5 0h1m-7 1h1m5 0h1m-15 1h3m5 0h1m5 0h1m-16 1h1m3 0h1m5 0h1m3 0h1m-16 1h1m5 0h1m5 0h3m-15 1h1m5 0h1m-7 1h1m5 0h1m9 0h1m-16 1h1m3 0h1m9 0h1m-14 1h3m9 0h1m-10 1h1m5 0h3m-8 1h5"/>
<path stroke="#00ffff" d="M0 0m303 155h1m-21 1h1m21 0h1m-20 1h1m20 0h1m-33 1h1m4 0h1m-7 1h1m14 0h1m19 0h1m-38 1h2m18 0h1m18 0h1m-41 1h1m5 0h1m35 0h1m-44 1h1m24 0h1m19 0h1m-47 1h1m4 0h1m42 0h1m-50 1h1m50 0h1m-54 1h2m33 0h1m-37 1h1m5 0h1m32 0h1m16 0h1m-58 1h1m58 0h1m-61 1h1m4 0h1m38 0h1m17 0h1m-64 1h1m47 0h1m16 0h1m-68 1h2m3 0h1m63 0h1m-71 1h1m71 0h1m-74 1h1m57 0h1m-60 1h1m4 0h1m70 0h1m-78 1h1m62 0h1m-66 1h2m3 0h1m62 0h1m14 0h1m-85 1h1m85 0h1m-88 1h1m72 0h1m15 0h1m-91 1h1m4 0h1m71 0h1m14 0h1m-94 1h1m-2 1h1m3 0h1m77 0h1m13 0h1m-99 1h2m85 0h1m12 0h1m-102 1h1m3 0h1m98 0h1m-105 1h1m91 0h1m13 0h1m-108 1h1m95 0h1m12 0h1m-111 1h1m3 0h1m107 0h1m-115 1h2m100 0h1m-104 1h1m3 0h1m101 0h1m10 0h1m-119 1h1m119 0h1m-122 1h1m110 0h1m11 0h1m-125 1h1m3 0h1m110 0h1m10 0h1m-129 1h2m118 0h1m9 0h1m-132 1h1m3 0h1m128 0h1m-135 1h1m124 0h1m-127 1h1m2 0h1m125 0h1m7 0h1m-139 1h1m139 0h1m-142 1h1m133 0h1m8 0h1m-146 1h2m2 0h1m134 0h1m7 0h1m-149 1h1m149 0h1m-152 1h1m2 0h1m140 0h1m8 0h1m-155 1h1m147 0h1m-150 1h1m156 0h1m-160 1h2m2 0h1m149 0h1m6 0h1m-163 1h1m157 0h1m5 0h1m-166 1h1m2 0h1m163 0h1m-169 1h1m162 0h1m6 0h1m-172 1h1m1 0h1m164 0h1m5 0h1m-176 1h2m-3 1h1m172 0h1m4 0h1m-180 1h1m2 0h1m173 0h1m3 0h1m-183 1h1m183 0h1m-186 1h1m1 0h1m179 0h1m4 0h1m-190 1h2m185 0h1m3 0h1m-193 1h1m193 0h1m-196 1h1m2 0h1m188 0h1m-194 1h1m195 0h1m1 0h1m-200 1h1m1 0h1m198 0h1m-203 1h1m200 0h1m2 0h1m-207 1h3m203 0h1m1 0h1m-210 1h1m210 0h1m-213 1h1m210 0h1m2 0h1m-216 1h1m1 0h1m212 0h1m-217 1h1m217 0h1m-221 1h3m218 0h2m-224 1h1m224 0h1m-227 1h1m-2 1h1m1 0h1m-4 1h1m-3 1h3m-4 1h1m-2 1h2m-3 1h1m-2 1h1m-2 1h2m-4 1h2m-3 1h2m-3 1h1m-2 1h1m-2 1h2m-4 1h2m-3 1h2m-3 1h1m-2 1h1m-2 1h1m-3 1h2m-3 1h2m-3 1h1m-2 1h1m-2 1h1m-3 1h2m-3 1h2m-3 1h1m-2 1h1"/>
<path stroke="#008080" d="M0 0m151 320h1m-32 2h5m-6 1h1m5 0h1m-8 1h1m7 0h1m-10 1h1m9 0h1m-12 1h1m11 0h1m-13 1h1m11 0h1m-13 1h1m11 0h1m-13 1h1m11 0h1m-13 1h1m11 0h1m-12 1h1m9 0h1m-10 1h1m7 0h1m-9 1h1m7 0h1m-11 1h3m7 0h3m-14 1h1m2 0h1m7 0h1m2 0h1m-16 1h1m3 0h1m7 0h1m3 0h1m616 0h3m-635 1h1m1 0h1m9 0h1m1 0h1m616 0h1m3 0h1m-635 1h1m11 0h1m616 0h1m5 0h1m-7 1h1m5 0h1m-7 1h1m5 0h1m-6 1h1m3 0h1m-6 1h2m3 0h2m-8 1h1m1 0h1m3 0h1m1 0h1m-8 1h1m5 0h1"/>
</g>
<g filter="url(#bin2)">
<g class="h">
<text transform="translate(93.55,358) scale(0.85,1)" fill="#ff0000">1</text>
<text transform="translate(148.55,452) scale(0.85,1)" fill="#ffff00">2</text>
<text transform="translate(242.55,507) scale(0.85,1)" fill="#00ff00">3</text>
<text transform="translate(350.55,507) scale(0.85,1)" fill="#0000ff">4</text>
<text transform="translate(444.55,452) scale(0.85,1)" fill="#ff0000">5</text>
<text transform="translate(499.55,358) scale(0.85,1)" fill="#ffff00">6</text>
<text transform="translate(499.55,250) scale(0.85,1)" fill="#00ff00">7</text>
<text transform="translate(444.55,156) scale(0.85,1)" fill="#0000ff">8</text>
<text transform="translate(350.55,101) scale(0.85,1)" fill="#ff0000">9</text>
<text transform="translate(238.55,101) scale(0.85,1)" fill="#ffff00">10</text>
<text transform="translate(144.55,156) scale(0.85,1)" fill="#00ff00">11</text>
<text transform="translate(89.55,250) scale(0.85,1)" fill="#0000ff">12</text>
</g>
</g>
<g filter="url(#bin3)">
<text class="a" transform="translate(120.5,320.0) scale(0.500,1)" fill="#ff0000">Asc</text>
<text class="a" transform="translate(299.0,128.0) scale(0.550,1)" fill="#ffff00">MC</text>
</g>
<g filter="url(#bin)">
<text class="t" x="605.5" y="14" xml:space="preserve"><tspan fill="#ffffff">Astrolog 5.40</tspan></text>
<text class="t" x="605.5" y="24" xml:space="preserve"><tspan fill="#c0c0c0">"chh18"</tspan></text>
<text class="t" x="605.5" y="34" xml:space="preserve"><tspan fill="#c0c0c0">Thu January 8, 1987</tspan></text>
<text class="t" x="605.5" y="44" xml:space="preserve"><tspan fill="#c0c0c0">11:20am (ST +8:00 GMT)</tspan></text>
<text class="t" x="605.5" y="54" xml:space="preserve"><tspan fill="#c0c0c0">"Shanghai"</tspan></text>
<text class="t" x="605.5" y="64" xml:space="preserve"><tspan fill="#c0c0c0">121°29E 31°11N</tspan></text>
<text class="t" x="605.5" y="74" xml:space="preserve"><tspan fill="#c0c0c0">Equal (MC) houses.</tspan></text>
<text class="t" x="605.5" y="84" xml:space="preserve"><tspan fill="#c0c0c0">Sidereal, Geocentric.</tspan></text>
<text class="t" x="605.5" y="94" xml:space="preserve"><tspan fill="#c0c0c0">Julian Day = 2446803.6389</tspan></text>
<text class="t" x="605.5" y="114" xml:space="preserve"><tspan fill="#ff0000"> 1st house: </tspan><tspan fill="#0000ff">13Pis22</tspan></text>
<text class="t" x="605.5" y="124" xml:space="preserve"><tspan fill="#ffff00"> 2nd house: </tspan><tspan fill="#ff0000">13Ari22</tspan></text>
<text class="t" x="605.5" y="134" xml:space="preserve"><tspan fill="#00ff00"> 3rd house: </tspan><tspan fill="#ffff00">13Tau22</tspan></text>
<text class="t" x="605.5" y="144" xml:space="preserve"><tspan fill="#0000ff"> 4th house: </tspan><tspan fill="#00ff00">13Gem22</tspan></text>
<text class="t" x="605.5" y="154" xml:space="preserve"><tspan fill="#ff0000"> 5th house: </tspan><tspan fill="#0000ff">13Can22</tspan></text>
<text class="t" x="605.5" y="164" xml:space="preserve"><tspan fill="#ffff00"> 6th house: </tspan><tspan fill="#ff0000">13Leo22</tspan></text>
<text class="t" x="605.5" y="174" xml:space="preserve"><tspan fill="#00ff00"> 7th house: </tspan><tspan fill="#ffff00">13Vir22</tspan></text>
<text class="t" x="605.5" y="184" xml:space="preserve"><tspan fill="#0000ff"> 8th house: </tspan><tspan fill="#00ff00">13Lib22</tspan></text>
<text class="t" x="605.5" y="194" xml:space="preserve"><tspan fill="#ff0000"> 9th house: </tspan><tspan fill="#0000ff">13Sco22</tspan></text>
<text class="t" x="605.5" y="204" xml:space="preserve"><tspan fill="#ffff00">10th house: </tspan><tspan fill="#ff0000">13Sag22</tspan></text>
<text class="t" x="605.5" y="214" xml:space="preserve"><tspan fill="#00ff00">11th house: </tspan><tspan fill="#ffff00">13Cap22</tspan></text>
<text class="t" x="605.5" y="224" xml:space="preserve"><tspan fill="#0000ff">12th house: </tspan><tspan fill="#00ff00">13Aqu22</tspan></text>
<text class="t" x="605.5" y="244" xml:space="preserve"><tspan fill="#ff0000"> Sun: </tspan><tspan fill="#ff0000">22Sag45</tspan><tspan fill="#ffffff"> </tspan><tspan fill="#c0c0c0"> - 0°00'</tspan></text>
<text class="t" x="605.5" y="254" xml:space="preserve"><tspan fill="#0000ff">Moon: </tspan><tspan fill="#ff0000"> 6Ari32</tspan><tspan fill="#ffffff"> </tspan><tspan fill="#c0c0c0"> + 1°18'</tspan></text>
<text class="t" x="605.5" y="264" xml:space="preserve"><tspan fill="#00ff00">Merc: </tspan><tspan fill="#ff0000">19Sag58</tspan><tspan fill="#ffffff"> </tspan><tspan fill="#c0c0c0"> - 1°43'</tspan></text>
<text class="t" x="605.5" y="274" xml:space="preserve"><tspan fill="#00ff00">Venu: </tspan><tspan fill="#0000ff"> 6Sco08</tspan><tspan fill="#ffffff"> </tspan><tspan fill="#c0c0c0"> + 3°43'</tspan></text>
<text class="t" x="605.5" y="284" xml:space="preserve"><tspan fill="#ff0000">Mars: </tspan><tspan fill="#0000ff"> 5Pis10</tspan><tspan fill="#ffffff"> </tspan><tspan fill="#c0c0c0"> - 0°19'</tspan></text>
<text class="t" x="605.5" y="294" xml:space="preserve"><tspan fill="#ff0000">Jupi: </tspan><tspan fill="#00ff00">24Aqu08</tspan><tspan fill="#ffffff"> </tspan><tspan fill="#c0c0c0"> - 1°11'</tspan></text>
<text class="t" x="605.5" y="304" xml:space="preserve"><tspan fill="#ffff00">Satu: </tspan><tspan fill="#0000ff">21Sco36</tspan><tspan fill="#ffffff"> </tspan><tspan fill="#c0c0c0"> + 1°29'</tspan></text>
<text class="t" x="605.5" y="314" xml:space="preserve"><tspan fill="#00ff00">Uran: </tspan><tspan fill="#0000ff">29Sco27</tspan><tspan fill="#ffffff"> </tspan><tspan fill="#c0c0c0"> - 0°07'</tspan></text>
<text class="t" x="605.5" y="324" xml:space="preserve"><tspan fill="#0000ff">Nept: </tspan><tspan fill="#ff0000">11Sag24</tspan><tspan fill="#ffffff"> </tspan><tspan fill="#c0c0c0"> + 1°01'</tspan></text>
<text class="t" x="605.5" y="334" xml:space="preserve"><tspan fill="#0000ff">Plut: </tspan><tspan fill="#00ff00">15Lib04</tspan><tspan fill="#ffffff"> </tspan><tspan fill="#c0c0c0"> +16°11'</tspan></text>
<text class="t" x="605.5" y="344" xml:space="preserve"><tspan fill="#008080">Node: </tspan><tspan fill="#0000ff">21Pis34</tspan><tspan fill="#ffffff">R</tspan><tspan fill="#c0c0c0"> + 0°00'</tspan></text>
<text class="t" x="605.5" y="364" xml:space="preserve"><tspan fill="#c0c0c0">Fire: 5, Earth: 0,</tspan></text>
<text class="t" x="605.5" y="374" xml:space="preserve"><tspan fill="#c0c0c0">Air : 2, Water: 6</tspan></text>
<text class="t" x="605.5" y="384" xml:space="preserve"><tspan fill="#c0c0c0">Car: 2, Fix: 4, Mut: 7</tspan></text>
<text class="t" x="605.5" y="394" xml:space="preserve"><tspan fill="#c0c0c0">Yang: 7, Yin: 6</tspan></text>
<text class="t" x="605.5" y="404" xml:space="preserve"><tspan fill="#c0c0c0">M: 9, N: 2, A: 6, D: 5</tspan></text>
<text class="t" x="605.5" y="414" xml:space="preserve"><tspan fill="#c0c0c0">Ang: 4, Suc: 2, Cad: 5</tspan></text>
<text class="t" x="605.5" y="424" xml:space="preserve"><tspan fill="#c0c0c0">Learn: 1, Share: 12</tspan></text>
</g>
</svg>
</body></html>
